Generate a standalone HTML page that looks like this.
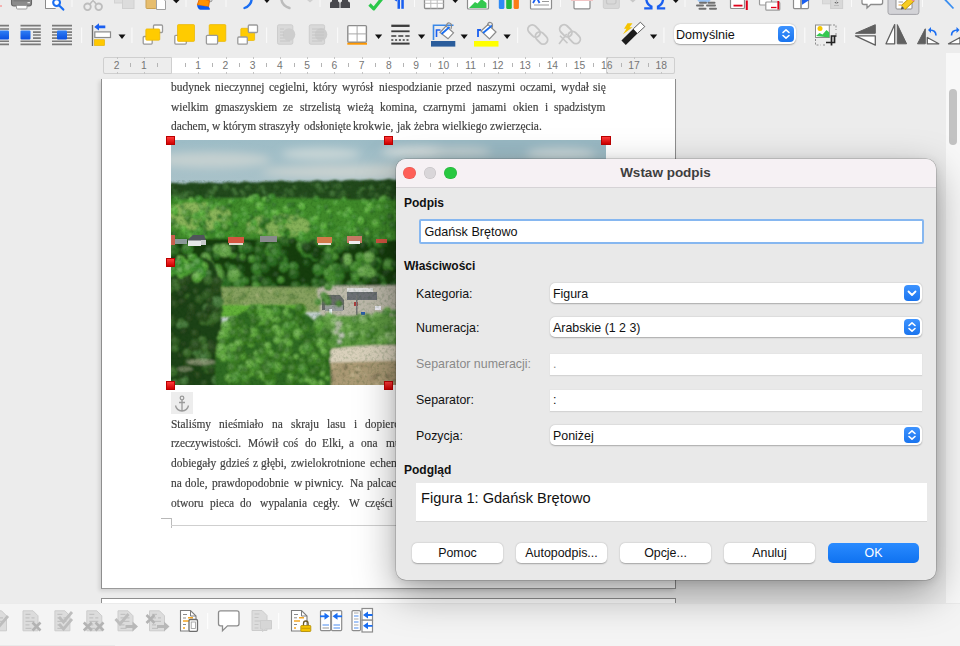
<!DOCTYPE html>
<html><head><meta charset="utf-8">
<style>
*{box-sizing:border-box}
html,body{margin:0;padding:0}
body{width:960px;height:646px;overflow:hidden;position:relative;background:#ececec;font-family:"Liberation Sans",sans-serif;color:#000}
.a{position:absolute}
.w{position:absolute;font-family:"Liberation Serif",serif;font-size:13px;color:#3b3b3b;white-space:pre;line-height:14px;transform:scaleX(0.88);transform-origin:0 0;-webkit-text-stroke:0.2px #4a4a4a}
.rn{position:absolute;top:58.8px;font-size:10.3px;color:#757575;line-height:14px;transform:translateX(-50%)}
.rt{position:absolute;top:63px;width:1px;height:4px;background:#b4b4b4}
.rb{position:absolute;width:1px;height:2px;background:#c4c4c4}
.sep{position:absolute;width:1px;background:#fafafa}
.lbl{position:absolute;font-size:12.4px;line-height:15px;color:#111;white-space:pre}
.fld{position:absolute;background:#fff;left:550px;width:372px}
.combo{border-radius:5px;height:20px;box-shadow:0 0.5px 1.5px rgba(0,0,0,0.28)}
.txt{height:22px;border-bottom:1px solid #d4d4d4;box-shadow:0 0 0 0.5px #e2e2e2}
.fv{position:absolute;left:3px;top:3.8px;font-size:12.4px;line-height:15px;color:#111;white-space:pre}
.bb{position:absolute;right:2px;top:2px;width:16px;height:16px;border-radius:4px;background:linear-gradient(#3d93ff,#1a74ee)}
.btn{position:absolute;top:543px;width:91px;height:20px;background:#fff;border-radius:5px;box-shadow:0 0.5px 1.5px rgba(0,0,0,0.3);font-size:12.4px;line-height:20px;text-align:center;color:#111}
</style></head>
<body>
<!-- toolbar icons row 1 -->
<svg class="a" style="left:0;top:0" width="960" height="52" viewBox="0 0 960 52">
<defs>
<linearGradient id="bluebox" x1="0" y1="0" x2="0" y2="1"><stop offset="0" stop-color="#2f7ff5"/><stop offset="1" stop-color="#0a4fe0"/></linearGradient>
</defs>
<!-- ===== ROW 1 (clipped at top) ===== -->
<circle cx="1" cy="6" r="0.8" fill="#ff6a6a"/>
<!-- printer -->
<path d="M11.5 -3h20v6.5q0 2.5-2.5 2.5h-15q-2.5 0-2.5-2.5z" fill="#8c8c8c" stroke="#666" stroke-width="1.1"/>
<rect x="13.5" y="-3" width="16" height="4.5" fill="#7c7c7c"/>
<rect x="27.5" y="2" width="2.5" height="1.3" fill="#e8e8e8"/>
<rect x="16.5" y="5.5" width="10.5" height="3.5" rx="1" fill="#fff" stroke="#9a9a9a" stroke-width="1"/>
<!-- print preview -->
<path d="M45.5 -2v10.5h10" fill="#fff" stroke="#8a8a8a" stroke-width="1"/>
<rect x="45.5" y="-2" width="10" height="10.5" fill="#fff"/>
<path d="M45.5 -2v10.5h10" fill="none" stroke="#8a8a8a" stroke-width="1"/>
<circle cx="56.6" cy="2.6" r="3.4" fill="#fff" stroke="#1a6ef2" stroke-width="2.1"/>
<path d="M59.2 5.4L63.3 9.6" stroke="#1a6ef2" stroke-width="2.2" stroke-linecap="round"/>
<rect x="71.5" y="0" width="1" height="7" fill="#fafafa"/>
<!-- scissors -->
<circle cx="87.5" cy="6.8" r="3.3" fill="none" stroke="#bdbdbd" stroke-width="1.8"/>
<circle cx="98.7" cy="6.8" r="3.3" fill="none" stroke="#bdbdbd" stroke-width="1.8"/>
<path d="M90 4L95 -2M96.2 4L91 -2" stroke="#bdbdbd" stroke-width="1.6"/>
<!-- copy disabled -->
<rect x="114.5" y="-4" width="9" height="7" fill="#dedede" stroke="#d2d2d2"/>
<rect x="122.5" y="-2" width="11.5" height="10.5" fill="#dcdcdc" stroke="#d0d0d0"/>
<!-- paste -->
<rect x="146" y="-3" width="10.5" height="11.5" rx="1" fill="#e6bd6e" stroke="#c9a052"/>
<path d="M156.5 -2h6l3 3v8.5h-9z" fill="#fff" stroke="#a0a0a0"/>
<path d="M173 0h6.5l-3.2 3.3z" fill="#111"/>
<rect x="185.5" y="0" width="1" height="7" fill="#fafafa"/>
<!-- clone formatting -->
<path d="M205 -3l7 0.5q1 2-0.5 4l-3 0.5z" fill="#d0d0d0" stroke="#8a8a8a" stroke-width="0.8"/>
<path d="M199.7 -2L209.5 0.5L208.6 6.8L197.3 5z" fill="#ff9200" stroke="#e06000" stroke-width="0.9" stroke-linejoin="round"/>
<path d="M197.2 4.9L208.6 6.8Q210.3 8.5 209.8 9.7L200.3 9.8Q197.3 8.6 197.2 4.9z" fill="#0a5af0"/>
<rect x="225.5" y="0" width="1" height="7" fill="#fafafa"/>
<!-- undo -->
<path d="M251.5 -3q1 8-7 11" fill="none" stroke="#1a6ef2" stroke-width="2.4" stroke-linecap="round"/>
<path d="M238 -1h11" stroke="#a8c8f8" stroke-width="1.5"/>
<path d="M264.3 0h5.2l-2.6 3z" fill="#111"/>
<!-- redo (disabled) -->
<path d="M281.5 -3q-1 8 8 11" fill="none" stroke="#bcbcbc" stroke-width="2.4" stroke-linecap="round"/>
<path d="M307 0h6l-3 2.6z" fill="#d0d0d0"/>
<rect x="319.5" y="0" width="1" height="7" fill="#fafafa"/>
<!-- binoculars -->
<path d="M330 3.5q0-2 2-2v-4h6v4q1.5 0 1.5 2v4.5h-9.5z" fill="#49494e"/>
<path d="M340.5 3.5q0-2 1.5-2v-4h6v4q2 0 2 2v4.5h-9.5z" fill="#49494e"/>
<!-- check -->
<path d="M369.5 4.5l4.3 4.3l8-10" fill="none" stroke="#2bc84a" stroke-width="3.3" stroke-linejoin="round"/>
<!-- pilcrow -->
<rect x="397.5" y="-2" width="2.5" height="10.8" fill="#1a5ff0"/>
<rect x="401.3" y="-2" width="2.5" height="10.8" fill="#1a5ff0"/>
<path d="M397 0.5q-2.5-0.5-2-3" fill="none" stroke="#1a5ff0" stroke-width="1.8"/>
<rect x="414" y="0" width="1" height="7" fill="#fafafa"/>
<!-- table -->
<rect x="424.5" y="-3" width="19" height="11.5" rx="1" fill="#fff" stroke="#8c8c8c" stroke-width="1.3"/>
<path d="M424.5 3.3h19M430.8 -3v11.5M437.2 -3v11.5M424.5 0h19" stroke="#bdbdbd" stroke-width="1"/>
<path d="M452.5 0h5.5l-2.7 3z" fill="#111"/>
<!-- image -->
<rect x="467.5" y="-3" width="21" height="12" rx="1" fill="#fff" stroke="#8c8c8c" stroke-width="1.2"/>
<path d="M469 8l6-6l2.5 1.5l4-4.5l5 4v5z" fill="#34c84f"/>
<!-- chart -->
<rect x="498.8" y="-3" width="5.6" height="12" rx="1.5" fill="#2f8af5"/>
<rect x="506.2" y="-3" width="5.6" height="12" rx="1.5" fill="#23b93c"/>
<rect x="513.6" y="-3" width="5.3" height="12" rx="1.5" fill="#fb7d16"/>
<!-- text box -->
<rect x="530.5" y="-3" width="21" height="12" rx="1" fill="#fff" stroke="#8c8c8c" stroke-width="1.2"/>
<path d="M533 3l3.5-6M539.5 3l-3-6" stroke="#1a5ff0" stroke-width="1.8"/>
<path d="M542 1.5h7M534 5h15" stroke="#9a9a9a" stroke-width="1"/>
<rect x="560" y="0" width="1" height="7" fill="#fafafa"/>
<!-- page break -->
<rect x="574" y="-3" width="16" height="11.8" rx="1" fill="#fff" stroke="#8c8c8c" stroke-width="1.2"/>
<path d="M571 0.4h22" stroke="#f2c4c4" stroke-width="1.2"/>
<!-- field disabled -->
<rect x="603.3" y="-3" width="16" height="11.5" rx="1.5" fill="#d8d8d8" stroke="#cfcfcf"/>
<rect x="606.5" y="-3" width="9.5" height="7" rx="2" fill="none" stroke="#c6c6c6" stroke-width="1.2"/>
<path d="M630 0h5.6l-2.8 2.6z" fill="#c8c8c8"/>
<!-- omega -->
<path d="M644.2 8.4h7.2v-1.8q-5.2-2.4-5.2-9M665.2 8.4h-7.2v-1.8q5.2-2.4 5.2-9" fill="none" stroke="#1a5ff0" stroke-width="2.3"/>
<path d="M673 0h5.5l-2.7 3z" fill="#111"/>
<rect x="684.5" y="0" width="1" height="7" fill="#fafafa"/>
<!-- fields/navigator -->
<ellipse cx="704" cy="0" rx="6.5" ry="3" fill="#9cc4f4"/>
<path d="M700 2.8h6M708.5 2.8h6M697 5.5h6M707 5.5h8M699.5 8.7h6M710 8.7h6" stroke="#6f6f6f" stroke-width="2" stroke-linecap="round"/>
<!-- footnote -->
<rect x="730.5" y="-3" width="14" height="11.5" rx="1" fill="#fff" stroke="#8c8c8c" stroke-width="1.2"/>
<path d="M733.5 5.6h9" stroke="#e0001a" stroke-width="1.8"/>
<path d="M746.8 0.5v9.5" stroke="#e0001a" stroke-width="2"/>
<!-- endnote -->
<rect x="759.5" y="-3" width="12" height="8" rx="1" fill="#fff" stroke="#9a9a9a" stroke-width="1.2"/>
<rect x="765.8" y="2" width="14" height="8.2" rx="1" fill="#fff" stroke="#9a9a9a" stroke-width="1.2"/>
<path d="M771 7.5h5.5" stroke="#e0001a" stroke-width="1.3"/>
<path d="M778.3 1v8.5" stroke="#e0001a" stroke-width="1.8"/>
<!-- bookmark -->
<rect x="793.5" y="-3" width="15" height="11.6" rx="1" fill="#fff" stroke="#8c8c8c" stroke-width="1.2"/>
<path d="M801 -3v11.6" stroke="#8c8c8c" stroke-width="1.6"/>
<path d="M802 -2h10.5l-10.5 6.8z" fill="#1a5ff0"/>
<!-- cross reference disabled -->
<rect x="822.5" y="-3" width="10" height="6.8" fill="#dcdcdc" stroke="#d2d2d2"/>
<rect x="830.6" y="-1" width="12" height="9.5" fill="#d8d8d8" stroke="#cecece"/>
<path d="M836.5 0v3.5M834.5 2l2 2l2-2M834 5.5h5" stroke="#bcbcbc" stroke-width="1"/>
<rect x="851" y="0" width="1" height="7" fill="#fafafa"/>
<!-- comment -->
<path d="M862 -3v5.5q0 2 2 2h3v3.5l3.8-3.5h9.8q2 0 2-2v-5.5" fill="#fff" stroke="#8c8c8c" stroke-width="1.3"/>
<!-- track changes pressed -->
<path d="M888 -2v14.2q0 2.2 2.2 2.2h26.5q2.2 0 2.2-2.2v-14.2" fill="#d3d3d7" stroke="#a4a4a9" stroke-width="1"/>
<rect x="896" y="-3" width="16" height="12" rx="1" fill="#fff" stroke="#8c8c8c" stroke-width="1"/>
<path d="M898.5 2h4.5" stroke="#9a9a9a" stroke-width="1"/>
<path d="M898.5 5h3" stroke="#f0a030" stroke-width="1"/>
<path d="M903.2 7.6L912.6 -1.2" stroke="#b89000" stroke-width="6.2"/>
<path d="M903.2 7.6L912.6 -1.2" stroke="#f7cc22" stroke-width="4.8"/>
<path d="M911.5 -0.2L914.5 -3" stroke="#f07aa0" stroke-width="4.8"/>
<path d="M900.8 9.6l1-3.6l2.6 2.6z" fill="#555"/>
<rect x="922" y="0" width="1" height="7" fill="#fafafa"/>
<!-- line -->
<path d="M944 -1.5L953.5 8.5" stroke="#3a8ef0" stroke-width="1.8"/>

<!-- ===== ROW 2 ===== -->
<g stroke="#7a7a7a" stroke-width="1.6">
<path d="M0 25.6h9M0 29h9M0 41.3h9M0 44.4h9"/>
<path d="M20.5 25.6h20.3M20.5 29h20.3M33 32.1h7.8M33 35h7.8M33 38.1h7.8M20.5 41.3h20.3M20.5 44.4h20.3"/>
<path d="M52 25.6h20M52 29h20M52 32.1h20M52 35h20M52 38.1h20M52 41.3h20M52 44.4h20"/>
</g>
<rect x="-2" y="30.6" width="11" height="8.8" rx="1" fill="url(#bluebox)"/>
<rect x="20.5" y="30.6" width="10" height="8.8" rx="1" fill="url(#bluebox)"/>
<rect x="57" y="30.6" width="10" height="8.8" rx="1" fill="url(#bluebox)"/>
<rect x="81" y="27.5" width="1.2" height="15.5" fill="#f9f9f9"/>
<!-- align -->
<path d="M92.5 25v21" stroke="#6a6a6a" stroke-width="1.4"/>
<path d="M94.2 26.9l4.8-3.6v2.3h6.3v2.6h-6.3v2.3z" fill="#1a5ff0"/>
<rect x="94.8" y="31.9" width="15.7" height="5.6" fill="#fff" stroke="#8c8c8c" stroke-width="1.2"/>
<rect x="94.3" y="39.7" width="10.3" height="5.9" fill="#ffc800" stroke="#e2b000" stroke-width="0.6"/>
<path d="M118.5 34.4h7l-3.5 4.6z" fill="#111"/>
<rect x="131.3" y="27.5" width="1.2" height="15.5" fill="#f9f9f9"/>
<!-- bring to front -->
<rect x="153.5" y="25" width="9" height="7.5" rx="1" fill="#fff" stroke="#9a9a9a" stroke-width="1.3"/>
<rect x="143.2" y="36.5" width="9" height="7.6" rx="1" fill="#fff" stroke="#9a9a9a" stroke-width="1.3"/>
<rect x="145.8" y="28.9" width="14" height="11.3" rx="1" fill="#ffcb00" stroke="#e8b400" stroke-width="0.7"/>
<!-- forward one -->
<rect x="174.8" y="35.3" width="11.5" height="8.8" rx="1" fill="#fff" stroke="#9a9a9a" stroke-width="1.3"/>
<rect x="177.5" y="24.6" width="17" height="16.8" rx="1" fill="#ffcb00" stroke="#e8b400" stroke-width="0.7"/>
<!-- backward one -->
<rect x="209.2" y="24.6" width="16.6" height="16.8" rx="1" fill="#ffcb00" stroke="#e8b400" stroke-width="0.7"/>
<rect x="206.4" y="35.3" width="11.2" height="8.8" rx="1" fill="#fff" stroke="#9a9a9a" stroke-width="1.3"/>
<!-- send to back -->
<rect x="240.8" y="28.3" width="13.8" height="12.2" rx="1" fill="#ffcb00" stroke="#e8b400" stroke-width="0.7"/>
<rect x="248.3" y="25" width="9.2" height="7.5" rx="1" fill="#fff" stroke="#9a9a9a" stroke-width="1.3"/>
<rect x="237.8" y="37" width="9.5" height="7.2" rx="1" fill="#fff" stroke="#9a9a9a" stroke-width="1.3"/>
<rect x="266" y="27.5" width="1.2" height="15.5" fill="#f9f9f9"/>
<!-- disabled to foreground/background -->
<rect x="277.5" y="24.8" width="15.3" height="19.4" rx="1.5" fill="#d9d9d9" stroke="#cdcdcd" stroke-width="1"/>
<circle cx="289" cy="34.5" r="6.3" fill="#cdcdcd"/>
<path d="M280 29h4M280 32h4M280 35h4M280 38h4M280 41h10" stroke="#c4c4c4" stroke-width="0.9"/>
<rect x="309.3" y="24.8" width="15.3" height="19.4" rx="1.5" fill="#d9d9d9" stroke="#cdcdcd" stroke-width="1"/>
<circle cx="321" cy="34.5" r="6.3" fill="#cdcdcd"/>
<path d="M312 29h12M312 32h12M312 35h12M312 38h12M312 41h10" stroke="#c4c4c4" stroke-width="0.9"/>
<rect x="337" y="27.5" width="1.2" height="15.5" fill="#f9f9f9"/>
<!-- borders -->
<rect x="347.8" y="25.6" width="18.6" height="16.6" rx="1" fill="#fff" stroke="#8c8c8c" stroke-width="1.4"/>
<path d="M357.1 25.6v16.6M347.8 33.9h18.6" stroke="#a8a8a8" stroke-width="1"/>
<rect x="347.3" y="42.8" width="19.7" height="1.9" fill="#ff9800"/>
<path d="M375 34.4h7.2l-3.6 4.6z" fill="#111"/>
<!-- border style -->
<path d="M391.3 25.8h18.3" stroke="#3c3c3c" stroke-width="2.3"/>
<path d="M391.3 31.3h18.3" stroke="#3c3c3c" stroke-width="1.8"/>
<path d="M391.3 36h18.3" stroke="#3c3c3c" stroke-width="1.5" stroke-dasharray="5 2"/>
<path d="M391.3 40h18.3" stroke="#3c3c3c" stroke-width="1.3" stroke-dasharray="2 1.8"/>
<path d="M391.3 43.6h18.3" stroke="#3c3c3c" stroke-width="2"/>
<path d="M418 34.4h7.2l-3.6 4.6z" fill="#111"/>
<!-- border color -->
<path d="M433.5 40v-14.8h20" fill="none" stroke="#3a88e8" stroke-width="1.6"/>
<path d="M436.5 37v-7h4" fill="none" stroke="#1a5ff0" stroke-width="1.6"/>
<path d="M440 32.5l6-6.5l7.5 6.8l-5.5 6z" fill="#fff" stroke="#8a8a8a" stroke-width="1.2"/>
<path d="M441.5 34l8-7" stroke="#1a6ef2" stroke-width="1.8"/>
<path d="M446.5 26.5q0-4 3-3.5q3 0.5 1.5 6" fill="none" stroke="#8a8a8a" stroke-width="1.2"/>
<rect x="431" y="41" width="24.3" height="5.6" fill="#2b5d9c"/>
<path d="M460.6 34.4h7.2l-3.6 4.6z" fill="#111"/>
<!-- area fill -->
<path d="M478 37v-7h3" fill="none" stroke="#1a5ff0" stroke-width="1.8"/>
<path d="M481 31l7-6.5l8 7.5l-6.5 7z" fill="#fff" stroke="#8a8a8a" stroke-width="1.2"/>
<path d="M483 33l9-7.5" stroke="#1a6ef2" stroke-width="1.8"/>
<path d="M487.5 26q0-4 3-3.5q3 0.5 1.5 6" fill="none" stroke="#8a8a8a" stroke-width="1.2"/>
<rect x="474" y="41" width="24.5" height="5.6" fill="#ffff00"/>
<path d="M503.5 34.4h7.2l-3.6 4.6z" fill="#111"/>
<rect x="517" y="27.5" width="1.2" height="15.5" fill="#f9f9f9"/>
<!-- link disabled -->
<g fill="none" stroke="#c6c6c6" stroke-width="1.9">
<rect x="529.6" y="24.2" width="8.8" height="13.6" rx="4.4" transform="rotate(-45 534 31)"/>
<rect x="537.1" y="31.2" width="8.8" height="13.6" rx="4.4" transform="rotate(-45 541.5 38)"/>
<rect x="561.4" y="24" width="8.8" height="13.6" rx="4.4" transform="rotate(-45 565.8 30.8)"/>
<rect x="569.8" y="30.7" width="8.8" height="13.6" rx="4.4" transform="rotate(-45 574.2 37.5)"/>
<path d="M559 44l7.7-10M560 35.8l7.5 7.5" stroke-width="1.6"/>
</g>
<!-- magic wand -->
<path d="M623.6 42.8L635.5 31" stroke="#1c1c1c" stroke-width="6.2"/>
<path d="M635.5 31L642.6 24.4" stroke="#fff" stroke-width="6.2"/>
<path d="M633.3 28.8L640.4 22.2L644.8 26.6L637.7 33.2" fill="none" stroke="#3a3a3a" stroke-width="0.8"/>
<path d="M627.5 23.3h5l-3 4h3l-9.5 7l3.5-5.5h-2.5z" fill="#f5c400"/>
<path d="M650 34.4h7.2l-3.6 4.6z" fill="#111"/>
<rect x="663.3" y="27.5" width="1.2" height="15.5" fill="#f9f9f9"/>
<rect x="804.2" y="27.5" width="1.2" height="15.5" fill="#f9f9f9"/>
<!-- crop image -->
<rect x="815.5" y="25" width="13.8" height="12.5" fill="#fff" stroke="#8c8c8c" stroke-width="1"/>
<circle cx="820" cy="28.5" r="2.5" fill="#f5c800"/>
<path d="M816 36l3.5-3l3 1.5l4-4.5l2.8 2.5v5z" fill="#34c84f"/>
<path d="M829.5 25h6.5v5M836 33v2M815.5 39v6h5M823 45h2" fill="none" stroke="#8c8c8c" stroke-width="1" stroke-dasharray="2 1.5"/>
<path d="M826 42.5h8.5v-6.5M831.5 45.5v-9.5h5" fill="none" stroke="#222" stroke-width="1.7"/>
<rect x="844" y="27.5" width="1.2" height="15.5" fill="#f9f9f9"/>
<!-- flip vertical -->
<path d="M855.5 33.3l19.8-8.6v8.6z" fill="#606060" stroke="#606060" stroke-width="1" stroke-linejoin="round"/>
<path d="M855.5 35.8h19.8v9.4z" fill="#fff" stroke="#606060" stroke-width="1.3" stroke-linejoin="round"/>
<!-- flip horizontal -->
<path d="M886 43.8l8.7-19.2v19.2z" fill="#fff" stroke="#606060" stroke-width="1.3" stroke-linejoin="round"/>
<path d="M897.3 24.6v19.2h9.3z" fill="#606060" stroke="#606060" stroke-width="1" stroke-linejoin="round"/>
<!-- rotate left -->
<path d="M917.5 43.8l7.8-15v15z" fill="#606060" stroke="#606060" stroke-width="1" stroke-linejoin="round"/>
<path d="M927.3 37.5v6.3h11.5z" fill="#fff" stroke="#606060" stroke-width="1.3" stroke-linejoin="round"/>
<path d="M936 35.5q0-5.5-6.5-5.5" fill="none" stroke="#1a6ef2" stroke-width="1.6"/>
<path d="M928 30l3-3v6z" fill="#1a6ef2"/>
<!-- rotate right partial -->
<path d="M951.5 35.5q0-5.5 6.5-5.5" fill="none" stroke="#1a6ef2" stroke-width="1.6"/>
<path d="M959.5 30l-3-3v6z" fill="#1a6ef2"/>
<path d="M948.5 43.8l11.5-6.3v6.3z" fill="#fff" stroke="#606060" stroke-width="1.3" stroke-linejoin="round"/>
</svg>
<!-- Domyslnie combo -->
<div class="a" style="left:674px;top:24px;width:122px;height:20px;background:#fff;border-radius:6px;box-shadow:0 0.5px 1.5px rgba(0,0,0,0.3)"></div>
<div class="a" style="left:676px;top:28px;font-size:12.6px;line-height:15px;color:#111">Domyślnie</div>
<div class="bb" style="left:778px;top:26.3px;right:auto"><svg width="16" height="16" viewBox="0 0 16 16"><path d="M5 6.5L8 3.8l3 2.7M5 9.5L8 12.2l3-2.7" fill="none" stroke="#fff" stroke-width="1.6" stroke-linecap="round" stroke-linejoin="round"/></svg></div>

<!-- toolbar row 2 -->


<!-- ruler -->
<div class="a" style="left:103px;top:57px;width:572px;height:17px;background:#fff;border-top:1px solid #ececec;border-bottom:1px solid #e4e4e4"></div>
<div class="a" style="left:103px;top:57px;width:69px;height:17px;background:#ededed;border:1px solid #cfcfcf;border-radius:2px 0 0 2px"></div>
<div class="a" style="left:606px;top:57px;width:69px;height:17px;background:#ededed;border:1px solid #cfcfcf;border-radius:0 2px 2px 0"></div>
<div class="rn" style="left:116.52px">2</div>
<div class="rb" style="left:116.5px;top:57px"></div><div class="rb" style="left:116.5px;top:72px"></div>
<div class="rn" style="left:143.76px">1</div>
<div class="rb" style="left:143.8px;top:57px"></div><div class="rb" style="left:143.8px;top:72px"></div>
<div class="rn" style="left:198.24px">1</div>
<div class="rb" style="left:198.2px;top:57px"></div><div class="rb" style="left:198.2px;top:72px"></div>
<div class="rn" style="left:225.48px">2</div>
<div class="rb" style="left:225.5px;top:57px"></div><div class="rb" style="left:225.5px;top:72px"></div>
<div class="rn" style="left:252.72px">3</div>
<div class="rb" style="left:252.7px;top:57px"></div><div class="rb" style="left:252.7px;top:72px"></div>
<div class="rn" style="left:279.96px">4</div>
<div class="rb" style="left:280.0px;top:57px"></div><div class="rb" style="left:280.0px;top:72px"></div>
<div class="rn" style="left:307.20px">5</div>
<div class="rb" style="left:307.2px;top:57px"></div><div class="rb" style="left:307.2px;top:72px"></div>
<div class="rn" style="left:334.44px">6</div>
<div class="rb" style="left:334.4px;top:57px"></div><div class="rb" style="left:334.4px;top:72px"></div>
<div class="rn" style="left:361.68px">7</div>
<div class="rb" style="left:361.7px;top:57px"></div><div class="rb" style="left:361.7px;top:72px"></div>
<div class="rn" style="left:388.92px">8</div>
<div class="rb" style="left:388.9px;top:57px"></div><div class="rb" style="left:388.9px;top:72px"></div>
<div class="rn" style="left:416.16px">9</div>
<div class="rb" style="left:416.2px;top:57px"></div><div class="rb" style="left:416.2px;top:72px"></div>
<div class="rn" style="left:443.40px">10</div>
<div class="rb" style="left:443.4px;top:57px"></div><div class="rb" style="left:443.4px;top:72px"></div>
<div class="rn" style="left:470.64px">11</div>
<div class="rb" style="left:470.6px;top:57px"></div><div class="rb" style="left:470.6px;top:72px"></div>
<div class="rn" style="left:497.88px">12</div>
<div class="rb" style="left:497.9px;top:57px"></div><div class="rb" style="left:497.9px;top:72px"></div>
<div class="rn" style="left:525.12px">13</div>
<div class="rb" style="left:525.1px;top:57px"></div><div class="rb" style="left:525.1px;top:72px"></div>
<div class="rn" style="left:552.36px">14</div>
<div class="rb" style="left:552.4px;top:57px"></div><div class="rb" style="left:552.4px;top:72px"></div>
<div class="rn" style="left:579.60px">15</div>
<div class="rb" style="left:579.6px;top:57px"></div><div class="rb" style="left:579.6px;top:72px"></div>
<div class="rn" style="left:606.84px">16</div>
<div class="rb" style="left:606.8px;top:57px"></div><div class="rb" style="left:606.8px;top:72px"></div>
<div class="rn" style="left:634.08px">17</div>
<div class="rb" style="left:634.1px;top:57px"></div><div class="rb" style="left:634.1px;top:72px"></div>
<div class="rn" style="left:661.32px">18</div>
<div class="rb" style="left:661.3px;top:57px"></div><div class="rb" style="left:661.3px;top:72px"></div>
<div class="rt" style="left:130.1px"></div>
<div class="rt" style="left:157.4px"></div>
<div class="rt" style="left:184.6px"></div>
<div class="rt" style="left:211.9px"></div>
<div class="rt" style="left:239.1px"></div>
<div class="rt" style="left:266.3px"></div>
<div class="rt" style="left:293.6px"></div>
<div class="rt" style="left:320.8px"></div>
<div class="rt" style="left:348.1px"></div>
<div class="rt" style="left:375.3px"></div>
<div class="rt" style="left:402.5px"></div>
<div class="rt" style="left:429.8px"></div>
<div class="rt" style="left:457.0px"></div>
<div class="rt" style="left:484.3px"></div>
<div class="rt" style="left:511.5px"></div>
<div class="rt" style="left:538.7px"></div>
<div class="rt" style="left:566.0px"></div>
<div class="rt" style="left:593.2px"></div>
<div class="rt" style="left:620.5px"></div>
<div class="rt" style="left:647.7px"></div>

<!-- page 1 -->
<div class="a" style="left:101px;top:79px;width:575px;height:510px;background:#fff;border-left:1px solid #8e8e8e;border-right:1px solid #8e8e8e;border-bottom:1px solid #9a9a9a;box-shadow:-2px 2px 4px rgba(0,0,0,0.12)"></div>
<!-- page 2 -->
<div class="a" style="left:101px;top:598px;width:575px;height:20px;background:#fff;border:1px solid #8e8e8e;border-bottom:none"></div>

<span class="w" style="left:171.00px;top:79.6px">budynek</span>
<span class="w" style="left:214.75px;top:79.6px">nieczynnej</span>
<span class="w" style="left:269.40px;top:79.6px">cegielni,</span>
<span class="w" style="left:313.25px;top:79.6px">który</span>
<span class="w" style="left:342.00px;top:79.6px">wyrósł</span>
<span class="w" style="left:378.70px;top:79.6px">niespodzianie</span>
<span class="w" style="left:446.25px;top:79.6px">przed</span>
<span class="w" style="left:476.75px;top:79.6px">naszymi</span>
<span class="w" style="left:519.50px;top:79.6px">oczami,</span>
<span class="w" style="left:560.50px;top:79.6px">wydał</span>
<span class="w" style="left:592.60px;top:79.6px">się</span>
<span class="w" style="left:171.00px;top:99.6px">wielkim</span>
<span class="w" style="left:214.75px;top:99.6px">gmaszyskiem</span>
<span class="w" style="left:283.10px;top:99.6px">ze</span>
<span class="w" style="left:299.50px;top:99.6px">strzelistą</span>
<span class="w" style="left:347.00px;top:99.6px">wieżą</span>
<span class="w" style="left:379.50px;top:99.6px">komina,</span>
<span class="w" style="left:423.40px;top:99.6px">czarnymi</span>
<span class="w" style="left:472.10px;top:99.6px">jamami</span>
<span class="w" style="left:513.25px;top:99.6px">okien</span>
<span class="w" style="left:545.10px;top:99.6px">i</span>
<span class="w" style="left:554.25px;top:99.6px">spadzistym</span>
<span class="w" style="left:171.00px;top:119.2px">dachem,</span>
<span class="w" style="left:211.90px;top:119.2px">w</span>
<span class="w" style="left:222.50px;top:119.2px">którym</span>
<span class="w" style="left:259.40px;top:119.2px">straszyły</span>
<span class="w" style="left:303.50px;top:119.2px">odsłonięte</span>
<span class="w" style="left:353.25px;top:119.2px">krokwie,</span>
<span class="w" style="left:396.75px;top:119.2px">jak</span>
<span class="w" style="left:414.00px;top:119.2px">żebra</span>
<span class="w" style="left:442.10px;top:119.2px">wielkiego</span>
<span class="w" style="left:489.60px;top:119.2px">zwierzęcia.</span>
<span class="w" style="left:171.20px;top:416.8px">Staliśmy</span>
<span class="w" style="left:218.70px;top:416.8px">nieśmiało</span>
<span class="w" style="left:271.90px;top:416.8px">na</span>
<span class="w" style="left:291.40px;top:416.8px">skraju</span>
<span class="w" style="left:327.30px;top:416.8px">lasu</span>
<span class="w" style="left:353.80px;top:416.8px">i</span>
<span class="w" style="left:365.30px;top:416.8px">dopiero</span>
<span class="w" style="left:171.20px;top:436.2px">rzeczywistości.</span>
<span class="w" style="left:247.50px;top:436.2px">Mówił</span>
<span class="w" style="left:283.20px;top:436.2px">coś</span>
<span class="w" style="left:304.50px;top:436.2px">do</span>
<span class="w" style="left:322.10px;top:436.2px">Elki,</span>
<span class="w" style="left:349.30px;top:436.2px">a</span>
<span class="w" style="left:360.50px;top:436.2px">ona</span>
<span class="w" style="left:385.70px;top:436.2px">mu</span>
<span class="w" style="left:171.20px;top:456.0px">dobiegały</span>
<span class="w" style="left:219.80px;top:456.0px">gdzieś</span>
<span class="w" style="left:252.50px;top:456.0px">z</span>
<span class="w" style="left:261.40px;top:456.0px">głębi,</span>
<span class="w" style="left:291.40px;top:456.0px">zwielokrotnione</span>
<span class="w" style="left:370.40px;top:456.0px">echem</span>
<span class="w" style="left:171.20px;top:475.8px">na</span>
<span class="w" style="left:185.30px;top:475.8px">dole,</span>
<span class="w" style="left:211.80px;top:475.8px">prawdopodobnie</span>
<span class="w" style="left:294.40px;top:475.8px">w</span>
<span class="w" style="left:304.70px;top:475.8px">piwnicy.</span>
<span class="w" style="left:350.00px;top:475.8px">Na</span>
<span class="w" style="left:367.10px;top:475.8px">palcach</span>
<span class="w" style="left:171.20px;top:495.6px">otworu</span>
<span class="w" style="left:209.50px;top:495.6px">pieca</span>
<span class="w" style="left:240.30px;top:495.6px">do</span>
<span class="w" style="left:259.90px;top:495.6px">wypalania</span>
<span class="w" style="left:313.40px;top:495.6px">cegły.</span>
<span class="w" style="left:349.30px;top:495.6px">W</span>
<span class="w" style="left:365.30px;top:495.6px">części</span>

<!-- photo -->
<svg class="a" style="left:171px;top:140px" width="435" height="245" viewBox="0 0 435 245">
<defs>
<linearGradient id="sky" x1="0" y1="0" x2="0" y2="1"><stop offset="0" stop-color="#9dbcc6"/><stop offset="0.45" stop-color="#bccbcd"/><stop offset="1" stop-color="#cbd4d2"/></linearGradient>
<filter id="bl" x="-20%" y="-50%" width="140%" height="200%"><feGaussianBlur stdDeviation="4"/></filter>
<filter id="bl1" x="-10%" y="-10%" width="120%" height="120%"><feGaussianBlur stdDeviation="0.95"/></filter>
<filter id="bl2" x="-10%" y="-10%" width="120%" height="120%"><feGaussianBlur stdDeviation="0.55"/></filter>
<filter id="nz" x="0" y="0" width="100%" height="100%"><feTurbulence type="fractalNoise" baseFrequency="0.35" numOctaves="2" seed="5"/><feColorMatrix type="matrix" values="0 0 0 0 0  0 0 0 0 0.03  0 0 0 0 0  0 0 0 -2.0 1.1"/></filter>
<clipPath id="pc"><rect width="435" height="245"/></clipPath>
</defs><g clip-path="url(#pc)">
<rect width="435" height="245" fill="url(#sky)"/>
<g filter="url(#bl)"><ellipse cx="340" cy="4" rx="150" ry="9" fill="#98b8c3"/><ellipse cx="250" cy="12" rx="40" ry="6" fill="#d2dcdc"/><ellipse cx="390" cy="14" rx="35" ry="6" fill="#c8d6d8"/><ellipse cx="150" cy="14" rx="40" ry="6" fill="#c8d5d6"/><ellipse cx="290" cy="12" rx="30" ry="5" fill="#c2d0d2"/><ellipse cx="40" cy="20" rx="60" ry="8" fill="#c4d0d0"/><ellipse cx="200" cy="32" rx="110" ry="7" fill="#c9d2d0"/><ellipse cx="360" cy="28" rx="50" ry="6" fill="#a9bcc0"/></g>
<g filter="url(#bl1)">
<path d="M-10.0 44.0 L-4.0 43.9 L2.0 42.8 L8.0 43.4 L14.0 44.0 L20.0 42.3 L26.0 42.8 L32.0 43.3 L38.0 42.2 L44.0 43.1 L50.0 43.4 L56.0 42.0 L62.0 42.4 L68.0 43.0 L74.0 41.3 L80.0 42.5 L86.0 42.4 L92.0 41.7 L98.0 41.5 L104.0 41.6 L110.0 40.6 L116.0 41.6 L122.0 41.9 L128.0 40.8 L134.0 41.4 L140.0 41.5 L146.0 39.9 L152.0 41.3 L158.0 41.0 L164.0 39.7 L170.0 41.2 L176.0 39.9 L182.0 39.7 L188.0 40.5 L194.0 40.1 L200.0 39.4 L206.0 40.6 L212.0 40.1 L218.0 38.7 L224.0 40.3 L230.0 39.0 L236.0 39.0 L242.0 39.3 L248.0 38.5 L254.0 38.2 L260.0 39.3 L266.0 38.5 L272.0 37.9 L278.0 39.6 L284.0 38.2 L290.0 37.5 L296.0 39.2 L302.0 37.4 L308.0 37.1 L314.0 38.8 L320.0 37.6 L326.0 37.2 L332.0 38.5 L338.0 36.6 L344.0 37.0 L350.0 38.6 L356.0 37.1 L362.0 36.4 L368.0 37.4 L374.0 36.4 L380.0 36.3 L386.0 37.5 L392.0 35.8 L398.0 36.3 L404.0 37.1 L410.0 35.6 L416.0 35.6 L422.0 37.1 L428.0 35.7 L434.0 35.6 L440.0 36.0 L445 110 L-10 110Z" fill="#24481e"/>
<circle cx="149.2" cy="51.9" r="2.1" fill="#234a1c"/>
<circle cx="148.7" cy="51.3" r="1.1" fill="#2e5327"/>
<circle cx="70.1" cy="58.5" r="1.9" fill="#1f4418"/>
<circle cx="69.6" cy="57.9" r="1.0" fill="#2a4d23"/>
<circle cx="161.8" cy="53.7" r="2.7" fill="#2c5624"/>
<circle cx="161.1" cy="52.9" r="1.5" fill="#365e2e"/>
<circle cx="176.1" cy="59.8" r="3.1" fill="#3d6e33"/>
<circle cx="175.3" cy="58.8" r="1.7" fill="#46753d"/>
<circle cx="1.3" cy="46.9" r="2.4" fill="#2c5624"/>
<circle cx="0.7" cy="46.2" r="1.3" fill="#365e2e"/>
<circle cx="411.6" cy="44.9" r="2.5" fill="#1f4418"/>
<circle cx="411.0" cy="44.2" r="1.4" fill="#2a4d23"/>
<circle cx="353.4" cy="55.5" r="2.4" fill="#35632c"/>
<circle cx="352.8" cy="54.8" r="1.3" fill="#3f6a36"/>
<circle cx="124.0" cy="48.4" r="1.9" fill="#234a1c"/>
<circle cx="123.5" cy="47.8" r="1.0" fill="#2e5327"/>
<circle cx="382.3" cy="52.9" r="1.8" fill="#2c5624"/>
<circle cx="381.9" cy="52.4" r="1.0" fill="#365e2e"/>
<circle cx="326.9" cy="49.6" r="2.0" fill="#3d6e33"/>
<circle cx="326.4" cy="49.0" r="1.1" fill="#46753d"/>
<circle cx="400.6" cy="49.6" r="3.1" fill="#35632c"/>
<circle cx="399.8" cy="48.6" r="1.7" fill="#3f6a36"/>
<circle cx="348.9" cy="57.6" r="2.6" fill="#1f4418"/>
<circle cx="348.2" cy="56.9" r="1.4" fill="#2a4d23"/>
<circle cx="210.6" cy="58.1" r="2.4" fill="#2c5624"/>
<circle cx="210.0" cy="57.3" r="1.3" fill="#365e2e"/>
<circle cx="232.8" cy="45.5" r="2.8" fill="#234a1c"/>
<circle cx="232.1" cy="44.7" r="1.6" fill="#2e5327"/>
<circle cx="313.5" cy="45.3" r="2.1" fill="#2c5624"/>
<circle cx="313.0" cy="44.7" r="1.2" fill="#365e2e"/>
<circle cx="374.0" cy="51.7" r="2.0" fill="#1f4418"/>
<circle cx="373.5" cy="51.1" r="1.1" fill="#2a4d23"/>
<circle cx="329.5" cy="56.2" r="1.8" fill="#2c5624"/>
<circle cx="329.0" cy="55.7" r="1.0" fill="#365e2e"/>
<circle cx="6.3" cy="48.9" r="1.8" fill="#234a1c"/>
<circle cx="5.8" cy="48.4" r="1.0" fill="#2e5327"/>
<circle cx="286.6" cy="42.5" r="2.5" fill="#35632c"/>
<circle cx="286.0" cy="41.8" r="1.4" fill="#3f6a36"/>
<circle cx="171.3" cy="57.8" r="2.6" fill="#2c5624"/>
<circle cx="170.7" cy="57.0" r="1.4" fill="#365e2e"/>
<circle cx="76.9" cy="47.6" r="2.7" fill="#3d6e33"/>
<circle cx="76.2" cy="46.7" r="1.5" fill="#46753d"/>
<circle cx="331.9" cy="52.1" r="2.4" fill="#234a1c"/>
<circle cx="331.3" cy="51.4" r="1.3" fill="#2e5327"/>
<circle cx="334.9" cy="43.5" r="2.7" fill="#35632c"/>
<circle cx="334.3" cy="42.7" r="1.5" fill="#3f6a36"/>
<circle cx="424.0" cy="52.1" r="2.8" fill="#2c5624"/>
<circle cx="423.3" cy="51.3" r="1.5" fill="#365e2e"/>
<circle cx="168.0" cy="46.2" r="3.0" fill="#35632c"/>
<circle cx="167.3" cy="45.3" r="1.7" fill="#3f6a36"/>
<circle cx="358.8" cy="56.1" r="2.4" fill="#3d6e33"/>
<circle cx="358.2" cy="55.3" r="1.3" fill="#46753d"/>
<circle cx="38.9" cy="52.0" r="2.4" fill="#35632c"/>
<circle cx="38.3" cy="51.3" r="1.3" fill="#3f6a36"/>
<circle cx="425.4" cy="46.2" r="2.7" fill="#3d6e33"/>
<circle cx="424.7" cy="45.4" r="1.5" fill="#46753d"/>
<circle cx="332.2" cy="43.8" r="2.6" fill="#35632c"/>
<circle cx="331.6" cy="43.0" r="1.4" fill="#3f6a36"/>
<circle cx="429.7" cy="47.1" r="2.1" fill="#1f4418"/>
<circle cx="429.2" cy="46.5" r="1.2" fill="#2a4d23"/>
<circle cx="27.6" cy="56.3" r="2.8" fill="#1f4418"/>
<circle cx="26.9" cy="55.4" r="1.5" fill="#2a4d23"/>
<circle cx="219.7" cy="58.9" r="2.7" fill="#1f4418"/>
<circle cx="219.1" cy="58.1" r="1.5" fill="#2a4d23"/>
<circle cx="204.5" cy="50.3" r="3.0" fill="#234a1c"/>
<circle cx="203.8" cy="49.4" r="1.7" fill="#2e5327"/>
<circle cx="188.1" cy="44.9" r="2.7" fill="#1f4418"/>
<circle cx="187.4" cy="44.1" r="1.5" fill="#2a4d23"/>
<circle cx="317.1" cy="49.1" r="2.0" fill="#1f4418"/>
<circle cx="316.6" cy="48.5" r="1.1" fill="#2a4d23"/>
<circle cx="140.7" cy="44.6" r="3.1" fill="#234a1c"/>
<circle cx="140.0" cy="43.6" r="1.7" fill="#2e5327"/>
<circle cx="161.0" cy="52.1" r="1.9" fill="#1f4418"/>
<circle cx="160.5" cy="51.5" r="1.1" fill="#2a4d23"/>
<circle cx="273.9" cy="55.2" r="2.7" fill="#3d6e33"/>
<circle cx="273.3" cy="54.4" r="1.5" fill="#46753d"/>
<circle cx="306.1" cy="53.7" r="2.0" fill="#1f4418"/>
<circle cx="305.6" cy="53.1" r="1.1" fill="#2a4d23"/>
<circle cx="166.7" cy="52.3" r="2.9" fill="#234a1c"/>
<circle cx="166.0" cy="51.4" r="1.6" fill="#2e5327"/>
<circle cx="384.7" cy="54.3" r="1.7" fill="#2c5624"/>
<circle cx="384.2" cy="53.8" r="1.0" fill="#365e2e"/>
<circle cx="30.4" cy="46.1" r="3.1" fill="#1f4418"/>
<circle cx="29.6" cy="45.1" r="1.7" fill="#2a4d23"/>
<circle cx="432.4" cy="59.8" r="1.9" fill="#1f4418"/>
<circle cx="432.0" cy="59.3" r="1.0" fill="#2a4d23"/>
<circle cx="86.6" cy="46.7" r="2.6" fill="#2c5624"/>
<circle cx="85.9" cy="45.9" r="1.4" fill="#365e2e"/>
<circle cx="111.1" cy="59.0" r="2.1" fill="#35632c"/>
<circle cx="110.6" cy="58.4" r="1.2" fill="#3f6a36"/>
<circle cx="415.5" cy="59.3" r="3.0" fill="#3d6e33"/>
<circle cx="414.7" cy="58.4" r="1.7" fill="#46753d"/>
<circle cx="83.9" cy="52.0" r="2.0" fill="#1f4418"/>
<circle cx="83.4" cy="51.3" r="1.1" fill="#2a4d23"/>
<circle cx="64.9" cy="47.9" r="2.2" fill="#1f4418"/>
<circle cx="64.4" cy="47.2" r="1.2" fill="#2a4d23"/>
<circle cx="269.6" cy="45.6" r="1.9" fill="#1f4418"/>
<circle cx="269.1" cy="45.0" r="1.0" fill="#2a4d23"/>
<circle cx="271.7" cy="42.0" r="3.2" fill="#2c5624"/>
<circle cx="270.9" cy="41.0" r="1.7" fill="#365e2e"/>
<circle cx="10.3" cy="56.2" r="3.1" fill="#35632c"/>
<circle cx="9.5" cy="55.3" r="1.7" fill="#3f6a36"/>
<circle cx="3.4" cy="50.0" r="1.7" fill="#3d6e33"/>
<circle cx="3.0" cy="49.5" r="0.9" fill="#46753d"/>
<circle cx="191.4" cy="49.0" r="3.2" fill="#3d6e33"/>
<circle cx="190.6" cy="48.0" r="1.8" fill="#46753d"/>
<circle cx="60.8" cy="59.5" r="1.9" fill="#35632c"/>
<circle cx="60.3" cy="58.9" r="1.0" fill="#3f6a36"/>
<circle cx="393.0" cy="47.4" r="1.8" fill="#1f4418"/>
<circle cx="392.6" cy="46.9" r="1.0" fill="#2a4d23"/>
<circle cx="78.5" cy="48.1" r="2.5" fill="#2c5624"/>
<circle cx="77.8" cy="47.3" r="1.4" fill="#365e2e"/>
<circle cx="250.8" cy="56.5" r="2.5" fill="#1f4418"/>
<circle cx="250.2" cy="55.7" r="1.4" fill="#2a4d23"/>
<circle cx="388.2" cy="40.4" r="2.5" fill="#234a1c"/>
<circle cx="387.5" cy="39.6" r="1.4" fill="#2e5327"/>
<circle cx="188.9" cy="56.7" r="3.2" fill="#2c5624"/>
<circle cx="188.1" cy="55.7" r="1.8" fill="#365e2e"/>
<circle cx="62.7" cy="49.9" r="2.4" fill="#3d6e33"/>
<circle cx="62.1" cy="49.2" r="1.3" fill="#46753d"/>
<circle cx="271.0" cy="49.4" r="2.9" fill="#35632c"/>
<circle cx="270.3" cy="48.6" r="1.6" fill="#3f6a36"/>
<circle cx="123.1" cy="52.8" r="1.6" fill="#234a1c"/>
<circle cx="122.7" cy="52.3" r="0.9" fill="#2e5327"/>
<circle cx="292.3" cy="43.7" r="1.8" fill="#2c5624"/>
<circle cx="291.9" cy="43.2" r="1.0" fill="#365e2e"/>
<circle cx="155.3" cy="47.0" r="1.9" fill="#3d6e33"/>
<circle cx="154.8" cy="46.5" r="1.0" fill="#46753d"/>
<circle cx="215.3" cy="53.6" r="2.6" fill="#2c5624"/>
<circle cx="214.6" cy="52.8" r="1.5" fill="#365e2e"/>
<circle cx="154.6" cy="45.0" r="1.9" fill="#2c5624"/>
<circle cx="154.1" cy="44.4" r="1.1" fill="#365e2e"/>
<circle cx="318.9" cy="50.5" r="1.7" fill="#2c5624"/>
<circle cx="318.4" cy="50.0" r="0.9" fill="#365e2e"/>
<circle cx="151.8" cy="50.7" r="2.6" fill="#2c5624"/>
<circle cx="151.1" cy="49.9" r="1.4" fill="#365e2e"/>
<circle cx="4.4" cy="47.4" r="2.4" fill="#1f4418"/>
<circle cx="3.8" cy="46.7" r="1.3" fill="#2a4d23"/>
<circle cx="354.0" cy="58.1" r="2.7" fill="#2c5624"/>
<circle cx="353.3" cy="57.3" r="1.5" fill="#365e2e"/>
<circle cx="298.0" cy="53.0" r="2.6" fill="#3d6e33"/>
<circle cx="297.4" cy="52.2" r="1.4" fill="#46753d"/>
<circle cx="399.3" cy="59.4" r="2.2" fill="#1f4418"/>
<circle cx="398.7" cy="58.7" r="1.2" fill="#2a4d23"/>
<circle cx="411.9" cy="55.9" r="1.6" fill="#35632c"/>
<circle cx="411.5" cy="55.4" r="0.9" fill="#3f6a36"/>
<circle cx="72.1" cy="45.3" r="1.6" fill="#1f4418"/>
<circle cx="71.7" cy="44.8" r="0.9" fill="#2a4d23"/>
<circle cx="282.9" cy="43.2" r="3.1" fill="#3d6e33"/>
<circle cx="282.1" cy="42.3" r="1.7" fill="#46753d"/>
<circle cx="217.7" cy="48.3" r="2.0" fill="#3d6e33"/>
<circle cx="217.2" cy="47.7" r="1.1" fill="#46753d"/>
<circle cx="241.9" cy="55.5" r="2.8" fill="#35632c"/>
<circle cx="241.2" cy="54.7" r="1.5" fill="#3f6a36"/>
<circle cx="400.0" cy="44.8" r="2.6" fill="#35632c"/>
<circle cx="399.4" cy="44.0" r="1.4" fill="#3f6a36"/>
<circle cx="235.2" cy="56.3" r="2.2" fill="#2c5624"/>
<circle cx="234.7" cy="55.6" r="1.2" fill="#365e2e"/>
<circle cx="437.4" cy="58.2" r="3.1" fill="#234a1c"/>
<circle cx="436.6" cy="57.3" r="1.7" fill="#2e5327"/>
<circle cx="433.0" cy="54.8" r="2.8" fill="#2c5624"/>
<circle cx="432.3" cy="54.0" r="1.5" fill="#365e2e"/>
<circle cx="407.8" cy="50.5" r="3.0" fill="#3d6e33"/>
<circle cx="407.1" cy="49.6" r="1.7" fill="#46753d"/>
<circle cx="289.7" cy="52.3" r="2.3" fill="#1f4418"/>
<circle cx="289.1" cy="51.6" r="1.3" fill="#2a4d23"/>
<circle cx="329.4" cy="53.0" r="2.0" fill="#1f4418"/>
<circle cx="328.9" cy="52.4" r="1.1" fill="#2a4d23"/>
<circle cx="363.1" cy="44.4" r="2.4" fill="#234a1c"/>
<circle cx="362.5" cy="43.7" r="1.3" fill="#2e5327"/>
<circle cx="234.3" cy="49.2" r="1.7" fill="#35632c"/>
<circle cx="233.9" cy="48.7" r="0.9" fill="#3f6a36"/>
<circle cx="256.0" cy="56.1" r="2.8" fill="#2c5624"/>
<circle cx="255.3" cy="55.2" r="1.5" fill="#365e2e"/>
<circle cx="437.1" cy="47.5" r="2.2" fill="#234a1c"/>
<circle cx="436.5" cy="46.9" r="1.2" fill="#2e5327"/>
<circle cx="341.0" cy="57.3" r="2.1" fill="#1f4418"/>
<circle cx="340.5" cy="56.7" r="1.1" fill="#2a4d23"/>
<circle cx="321.7" cy="56.2" r="2.4" fill="#234a1c"/>
<circle cx="321.1" cy="55.5" r="1.3" fill="#2e5327"/>
<circle cx="7.1" cy="58.3" r="1.8" fill="#35632c"/>
<circle cx="6.6" cy="57.8" r="1.0" fill="#3f6a36"/>
<circle cx="200.4" cy="47.8" r="2.6" fill="#3d6e33"/>
<circle cx="199.7" cy="47.0" r="1.4" fill="#46753d"/>
<circle cx="314.8" cy="41.4" r="2.0" fill="#234a1c"/>
<circle cx="314.3" cy="40.8" r="1.1" fill="#2e5327"/>
<circle cx="161.8" cy="45.0" r="2.9" fill="#234a1c"/>
<circle cx="161.1" cy="44.2" r="1.6" fill="#2e5327"/>
<circle cx="408.0" cy="44.0" r="3.0" fill="#234a1c"/>
<circle cx="407.3" cy="43.1" r="1.6" fill="#2e5327"/>
<circle cx="327.0" cy="45.0" r="1.8" fill="#35632c"/>
<circle cx="326.5" cy="44.4" r="1.0" fill="#3f6a36"/>
<circle cx="41.4" cy="52.3" r="2.6" fill="#3d6e33"/>
<circle cx="40.7" cy="51.6" r="1.4" fill="#46753d"/>
<circle cx="87.1" cy="50.0" r="2.7" fill="#2c5624"/>
<circle cx="86.4" cy="49.1" r="1.5" fill="#365e2e"/>
<circle cx="9.3" cy="58.0" r="3.1" fill="#3d6e33"/>
<circle cx="8.5" cy="57.1" r="1.7" fill="#46753d"/>
<circle cx="158.8" cy="43.9" r="1.8" fill="#234a1c"/>
<circle cx="158.4" cy="43.3" r="1.0" fill="#2e5327"/>
<circle cx="111.8" cy="56.5" r="1.7" fill="#3d6e33"/>
<circle cx="111.4" cy="56.0" r="0.9" fill="#46753d"/>
<circle cx="317.5" cy="51.9" r="2.3" fill="#3d6e33"/>
<circle cx="316.9" cy="51.2" r="1.3" fill="#46753d"/>
<circle cx="234.2" cy="51.0" r="2.3" fill="#234a1c"/>
<circle cx="233.6" cy="50.3" r="1.3" fill="#2e5327"/>
<circle cx="277.9" cy="47.3" r="2.2" fill="#1f4418"/>
<circle cx="277.4" cy="46.7" r="1.2" fill="#2a4d23"/>
<circle cx="277.9" cy="49.1" r="2.4" fill="#2c5624"/>
<circle cx="277.3" cy="48.4" r="1.3" fill="#365e2e"/>
<circle cx="190.4" cy="44.6" r="3.0" fill="#1f4418"/>
<circle cx="189.7" cy="43.8" r="1.6" fill="#2a4d23"/>
<circle cx="370.4" cy="55.5" r="3.0" fill="#234a1c"/>
<circle cx="369.6" cy="54.6" r="1.7" fill="#2e5327"/>
<circle cx="303.1" cy="46.0" r="3.1" fill="#1f4418"/>
<circle cx="302.3" cy="45.0" r="1.7" fill="#2a4d23"/>
<circle cx="272.8" cy="56.9" r="2.0" fill="#234a1c"/>
<circle cx="272.3" cy="56.4" r="1.1" fill="#2e5327"/>
<circle cx="69.2" cy="52.9" r="2.6" fill="#234a1c"/>
<circle cx="68.5" cy="52.1" r="1.4" fill="#2e5327"/>
<circle cx="333.6" cy="44.1" r="2.7" fill="#3d6e33"/>
<circle cx="332.9" cy="43.2" r="1.5" fill="#46753d"/>
<circle cx="3.0" cy="55.6" r="2.0" fill="#3d6e33"/>
<circle cx="2.5" cy="55.0" r="1.1" fill="#46753d"/>
<circle cx="251.6" cy="56.4" r="2.4" fill="#234a1c"/>
<circle cx="251.0" cy="55.6" r="1.3" fill="#2e5327"/>
<circle cx="172.9" cy="59.2" r="2.9" fill="#35632c"/>
<circle cx="172.1" cy="58.3" r="1.6" fill="#3f6a36"/>
<circle cx="388.6" cy="48.4" r="2.5" fill="#234a1c"/>
<circle cx="388.0" cy="47.6" r="1.4" fill="#2e5327"/>
<circle cx="391.7" cy="55.4" r="2.5" fill="#2c5624"/>
<circle cx="391.1" cy="54.7" r="1.4" fill="#365e2e"/>
<circle cx="11.9" cy="52.8" r="2.8" fill="#35632c"/>
<circle cx="11.2" cy="52.0" r="1.6" fill="#3f6a36"/>
<circle cx="340.4" cy="54.4" r="2.4" fill="#2c5624"/>
<circle cx="339.8" cy="53.7" r="1.3" fill="#365e2e"/>
<circle cx="123.7" cy="47.4" r="2.4" fill="#35632c"/>
<circle cx="123.1" cy="46.7" r="1.3" fill="#3f6a36"/>
<circle cx="168.2" cy="56.0" r="1.7" fill="#35632c"/>
<circle cx="167.8" cy="55.5" r="0.9" fill="#3f6a36"/>
<circle cx="255.3" cy="49.7" r="2.9" fill="#2c5624"/>
<circle cx="254.5" cy="48.9" r="1.6" fill="#365e2e"/>
<circle cx="330.3" cy="43.0" r="2.1" fill="#234a1c"/>
<circle cx="329.8" cy="42.4" r="1.2" fill="#2e5327"/>
<circle cx="115.0" cy="53.5" r="3.1" fill="#234a1c"/>
<circle cx="114.2" cy="52.6" r="1.7" fill="#2e5327"/>
<circle cx="161.5" cy="57.3" r="2.3" fill="#234a1c"/>
<circle cx="160.9" cy="56.6" r="1.3" fill="#2e5327"/>
<circle cx="274.3" cy="49.5" r="2.5" fill="#35632c"/>
<circle cx="273.7" cy="48.7" r="1.4" fill="#3f6a36"/>
<circle cx="317.9" cy="40.9" r="2.6" fill="#3d6e33"/>
<circle cx="317.3" cy="40.2" r="1.4" fill="#46753d"/>
<circle cx="401.4" cy="48.5" r="1.9" fill="#234a1c"/>
<circle cx="401.0" cy="47.9" r="1.1" fill="#2e5327"/>
<circle cx="423.8" cy="40.3" r="2.8" fill="#1f4418"/>
<circle cx="423.1" cy="39.4" r="1.6" fill="#2a4d23"/>
<circle cx="105.7" cy="47.1" r="3.0" fill="#2c5624"/>
<circle cx="104.9" cy="46.2" r="1.6" fill="#365e2e"/>
<circle cx="119.6" cy="51.9" r="2.9" fill="#35632c"/>
<circle cx="118.9" cy="51.0" r="1.6" fill="#3f6a36"/>
<circle cx="208.7" cy="46.6" r="3.0" fill="#2c5624"/>
<circle cx="207.9" cy="45.7" r="1.7" fill="#365e2e"/>
<circle cx="123.1" cy="55.0" r="2.7" fill="#234a1c"/>
<circle cx="122.4" cy="54.2" r="1.5" fill="#2e5327"/>
<circle cx="386.2" cy="44.9" r="3.2" fill="#35632c"/>
<circle cx="385.4" cy="44.0" r="1.8" fill="#3f6a36"/>
<circle cx="244.1" cy="56.4" r="2.9" fill="#1f4418"/>
<circle cx="243.4" cy="55.6" r="1.6" fill="#2a4d23"/>
<circle cx="7.4" cy="51.6" r="3.1" fill="#2c5624"/>
<circle cx="6.6" cy="50.6" r="1.7" fill="#365e2e"/>
<circle cx="348.4" cy="52.3" r="2.8" fill="#234a1c"/>
<circle cx="347.7" cy="51.4" r="1.5" fill="#2e5327"/>
<circle cx="383.1" cy="57.9" r="2.9" fill="#2c5624"/>
<circle cx="382.4" cy="57.0" r="1.6" fill="#365e2e"/>
<circle cx="217.2" cy="54.0" r="2.4" fill="#2c5624"/>
<circle cx="216.6" cy="53.3" r="1.3" fill="#365e2e"/>
<circle cx="286.5" cy="48.6" r="2.7" fill="#35632c"/>
<circle cx="285.8" cy="47.8" r="1.5" fill="#3f6a36"/>
<circle cx="337.6" cy="50.4" r="1.7" fill="#234a1c"/>
<circle cx="337.2" cy="49.9" r="0.9" fill="#2e5327"/>
<circle cx="330.7" cy="43.3" r="1.8" fill="#1f4418"/>
<circle cx="330.2" cy="42.8" r="1.0" fill="#2a4d23"/>
<circle cx="16.6" cy="52.7" r="1.8" fill="#3d6e33"/>
<circle cx="16.1" cy="52.2" r="1.0" fill="#46753d"/>
<circle cx="254.4" cy="53.1" r="3.0" fill="#35632c"/>
<circle cx="253.6" cy="52.2" r="1.6" fill="#3f6a36"/>
<circle cx="179.0" cy="47.8" r="2.8" fill="#234a1c"/>
<circle cx="178.3" cy="47.0" r="1.5" fill="#2e5327"/>
<circle cx="177.1" cy="55.8" r="3.0" fill="#1f4418"/>
<circle cx="176.4" cy="54.9" r="1.7" fill="#2a4d23"/>
<circle cx="273.2" cy="46.3" r="2.7" fill="#35632c"/>
<circle cx="272.5" cy="45.4" r="1.5" fill="#3f6a36"/>
<circle cx="55.1" cy="46.9" r="3.1" fill="#35632c"/>
<circle cx="54.3" cy="46.0" r="1.7" fill="#3f6a36"/>
<circle cx="35.8" cy="55.9" r="1.9" fill="#35632c"/>
<circle cx="35.3" cy="55.3" r="1.0" fill="#3f6a36"/>
<circle cx="14.2" cy="55.8" r="2.7" fill="#3d6e33"/>
<circle cx="13.6" cy="55.0" r="1.5" fill="#46753d"/>
<circle cx="6.3" cy="56.1" r="1.9" fill="#3d6e33"/>
<circle cx="5.8" cy="55.5" r="1.0" fill="#46753d"/>
<circle cx="298.9" cy="44.6" r="1.8" fill="#35632c"/>
<circle cx="298.5" cy="44.1" r="1.0" fill="#3f6a36"/>
<circle cx="271.6" cy="43.4" r="2.8" fill="#234a1c"/>
<circle cx="270.9" cy="42.5" r="1.5" fill="#2e5327"/>
<circle cx="72.3" cy="54.6" r="2.3" fill="#35632c"/>
<circle cx="71.8" cy="54.0" r="1.2" fill="#3f6a36"/>
<circle cx="91.4" cy="47.9" r="2.9" fill="#35632c"/>
<circle cx="90.7" cy="47.1" r="1.6" fill="#3f6a36"/>
<circle cx="327.0" cy="54.6" r="2.0" fill="#35632c"/>
<circle cx="326.5" cy="54.0" r="1.1" fill="#3f6a36"/>
<circle cx="96.3" cy="56.4" r="2.8" fill="#2c5624"/>
<circle cx="95.6" cy="55.6" r="1.6" fill="#365e2e"/>
<circle cx="438.2" cy="41.7" r="3.1" fill="#1f4418"/>
<circle cx="437.4" cy="40.7" r="1.7" fill="#2a4d23"/>
<circle cx="200.1" cy="53.9" r="2.9" fill="#2c5624"/>
<circle cx="199.4" cy="53.0" r="1.6" fill="#365e2e"/>
<circle cx="315.1" cy="48.8" r="1.7" fill="#1f4418"/>
<circle cx="314.7" cy="48.3" r="0.9" fill="#2a4d23"/>
<circle cx="400.7" cy="41.7" r="2.7" fill="#1f4418"/>
<circle cx="400.0" cy="40.9" r="1.5" fill="#2a4d23"/>
<circle cx="397.5" cy="58.7" r="2.9" fill="#234a1c"/>
<circle cx="396.8" cy="57.8" r="1.6" fill="#2e5327"/>
<circle cx="336.1" cy="59.8" r="2.4" fill="#234a1c"/>
<circle cx="335.5" cy="59.0" r="1.3" fill="#2e5327"/>
<circle cx="418.1" cy="59.3" r="2.3" fill="#3d6e33"/>
<circle cx="417.6" cy="58.6" r="1.3" fill="#46753d"/>
<circle cx="176.3" cy="59.7" r="3.0" fill="#1f4418"/>
<circle cx="175.6" cy="58.8" r="1.6" fill="#2a4d23"/>
<circle cx="212.4" cy="45.3" r="2.5" fill="#2c5624"/>
<circle cx="211.8" cy="44.6" r="1.4" fill="#365e2e"/>
<circle cx="129.3" cy="58.5" r="1.8" fill="#1f4418"/>
<circle cx="128.9" cy="58.0" r="1.0" fill="#2a4d23"/>
<circle cx="285.9" cy="51.2" r="2.8" fill="#1f4418"/>
<circle cx="285.2" cy="50.3" r="1.6" fill="#2a4d23"/>
<circle cx="234.1" cy="42.3" r="2.5" fill="#234a1c"/>
<circle cx="233.5" cy="41.6" r="1.3" fill="#2e5327"/>
<circle cx="400.6" cy="52.8" r="3.0" fill="#1f4418"/>
<circle cx="399.8" cy="51.9" r="1.7" fill="#2a4d23"/>
<circle cx="147.0" cy="45.8" r="2.9" fill="#3d6e33"/>
<circle cx="146.2" cy="44.9" r="1.6" fill="#46753d"/>
<circle cx="205.6" cy="55.4" r="2.7" fill="#35632c"/>
<circle cx="204.9" cy="54.6" r="1.5" fill="#3f6a36"/>
<circle cx="136.0" cy="51.8" r="2.4" fill="#1f4418"/>
<circle cx="135.4" cy="51.1" r="1.3" fill="#2a4d23"/>
<circle cx="329.9" cy="52.7" r="3.1" fill="#35632c"/>
<circle cx="329.1" cy="51.7" r="1.7" fill="#3f6a36"/>
<circle cx="235.7" cy="59.2" r="1.9" fill="#2c5624"/>
<circle cx="235.2" cy="58.6" r="1.0" fill="#365e2e"/>
<circle cx="113.1" cy="55.0" r="2.3" fill="#3d6e33"/>
<circle cx="112.5" cy="54.3" r="1.3" fill="#46753d"/>
<circle cx="115.3" cy="50.0" r="1.7" fill="#3d6e33"/>
<circle cx="114.9" cy="49.5" r="1.0" fill="#46753d"/>
<circle cx="281.3" cy="52.6" r="1.8" fill="#35632c"/>
<circle cx="280.8" cy="52.0" r="1.0" fill="#3f6a36"/>
<circle cx="437.1" cy="43.4" r="1.6" fill="#3d6e33"/>
<circle cx="436.7" cy="42.9" r="0.9" fill="#46753d"/>
<circle cx="220.3" cy="56.0" r="2.6" fill="#1f4418"/>
<circle cx="219.6" cy="55.2" r="1.4" fill="#2a4d23"/>
<circle cx="305.9" cy="59.9" r="3.0" fill="#1f4418"/>
<circle cx="305.1" cy="59.0" r="1.6" fill="#2a4d23"/>
<circle cx="111.1" cy="53.8" r="2.3" fill="#234a1c"/>
<circle cx="110.6" cy="53.2" r="1.3" fill="#2e5327"/>
<circle cx="311.5" cy="59.4" r="2.3" fill="#35632c"/>
<circle cx="311.0" cy="58.7" r="1.2" fill="#3f6a36"/>
<circle cx="409.5" cy="52.6" r="3.0" fill="#1f4418"/>
<circle cx="408.8" cy="51.7" r="1.6" fill="#2a4d23"/>
<circle cx="121.0" cy="54.7" r="2.0" fill="#35632c"/>
<circle cx="120.5" cy="54.1" r="1.1" fill="#3f6a36"/>
<circle cx="107.1" cy="59.2" r="2.4" fill="#3d6e33"/>
<circle cx="106.5" cy="58.5" r="1.3" fill="#46753d"/>
<circle cx="20.4" cy="53.6" r="3.1" fill="#2c5624"/>
<circle cx="19.7" cy="52.6" r="1.7" fill="#365e2e"/>
<circle cx="379.3" cy="42.1" r="2.6" fill="#2c5624"/>
<circle cx="378.7" cy="41.3" r="1.5" fill="#365e2e"/>
<circle cx="71.2" cy="51.6" r="2.1" fill="#3d6e33"/>
<circle cx="70.6" cy="51.0" r="1.2" fill="#46753d"/>
<circle cx="315.9" cy="53.5" r="1.7" fill="#234a1c"/>
<circle cx="315.5" cy="53.0" r="1.0" fill="#2e5327"/>
<circle cx="372.3" cy="49.6" r="3.0" fill="#3d6e33"/>
<circle cx="371.6" cy="48.7" r="1.6" fill="#46753d"/>
<circle cx="76.1" cy="59.2" r="2.2" fill="#35632c"/>
<circle cx="75.5" cy="58.5" r="1.2" fill="#3f6a36"/>
<circle cx="255.8" cy="52.9" r="2.3" fill="#1f4418"/>
<circle cx="255.2" cy="52.2" r="1.3" fill="#2a4d23"/>
<circle cx="352.1" cy="47.7" r="1.8" fill="#2c5624"/>
<circle cx="351.6" cy="47.1" r="1.0" fill="#365e2e"/>
<circle cx="281.8" cy="56.6" r="1.8" fill="#35632c"/>
<circle cx="281.3" cy="56.1" r="1.0" fill="#3f6a36"/>
<circle cx="12.6" cy="59.3" r="2.9" fill="#35632c"/>
<circle cx="11.9" cy="58.5" r="1.6" fill="#3f6a36"/>
<circle cx="239.4" cy="55.9" r="2.4" fill="#234a1c"/>
<circle cx="238.8" cy="55.2" r="1.3" fill="#2e5327"/>
<circle cx="356.3" cy="58.3" r="1.7" fill="#3d6e33"/>
<circle cx="355.9" cy="57.8" r="0.9" fill="#46753d"/>
<circle cx="251.3" cy="42.9" r="2.4" fill="#234a1c"/>
<circle cx="250.7" cy="42.2" r="1.3" fill="#2e5327"/>
<circle cx="172.3" cy="53.1" r="2.9" fill="#35632c"/>
<circle cx="171.6" cy="52.3" r="1.6" fill="#3f6a36"/>
<circle cx="388.4" cy="56.0" r="2.3" fill="#234a1c"/>
<circle cx="387.8" cy="55.3" r="1.2" fill="#2e5327"/>
<circle cx="338.3" cy="54.8" r="2.5" fill="#2c5624"/>
<circle cx="337.7" cy="54.1" r="1.4" fill="#365e2e"/>
<circle cx="205.2" cy="45.4" r="2.9" fill="#1f4418"/>
<circle cx="204.4" cy="44.6" r="1.6" fill="#2a4d23"/>
<circle cx="98.5" cy="58.8" r="2.8" fill="#1f4418"/>
<circle cx="97.8" cy="58.0" r="1.5" fill="#2a4d23"/>
<circle cx="164.2" cy="46.8" r="3.1" fill="#2c5624"/>
<circle cx="163.4" cy="45.9" r="1.7" fill="#365e2e"/>
<circle cx="134.3" cy="56.8" r="2.1" fill="#35632c"/>
<circle cx="133.8" cy="56.2" r="1.1" fill="#3f6a36"/>
<circle cx="275.6" cy="59.6" r="1.7" fill="#234a1c"/>
<circle cx="275.2" cy="59.1" r="0.9" fill="#2e5327"/>
<circle cx="398.8" cy="58.9" r="2.4" fill="#1f4418"/>
<circle cx="398.2" cy="58.2" r="1.3" fill="#2a4d23"/>
<circle cx="141.6" cy="44.5" r="2.0" fill="#2c5624"/>
<circle cx="141.1" cy="43.9" r="1.1" fill="#365e2e"/>
<circle cx="73.8" cy="55.0" r="1.7" fill="#35632c"/>
<circle cx="73.3" cy="54.5" r="0.9" fill="#3f6a36"/>
<circle cx="274.8" cy="50.6" r="3.1" fill="#3d6e33"/>
<circle cx="274.0" cy="49.7" r="1.7" fill="#46753d"/>
<circle cx="224.7" cy="58.0" r="1.7" fill="#3d6e33"/>
<circle cx="224.3" cy="57.5" r="1.0" fill="#46753d"/>
<circle cx="172.6" cy="59.4" r="3.1" fill="#1f4418"/>
<circle cx="171.8" cy="58.4" r="1.7" fill="#2a4d23"/>
<circle cx="80.0" cy="55.9" r="2.0" fill="#2c5624"/>
<circle cx="79.5" cy="55.3" r="1.1" fill="#365e2e"/>
<circle cx="3.3" cy="53.0" r="1.9" fill="#35632c"/>
<circle cx="2.8" cy="52.4" r="1.1" fill="#3f6a36"/>
<circle cx="261.5" cy="52.0" r="2.8" fill="#3d6e33"/>
<circle cx="260.8" cy="51.1" r="1.5" fill="#46753d"/>
<circle cx="44.3" cy="48.0" r="2.9" fill="#3d6e33"/>
<circle cx="43.5" cy="47.2" r="1.6" fill="#46753d"/>
<circle cx="402.6" cy="57.5" r="2.8" fill="#234a1c"/>
<circle cx="401.9" cy="56.7" r="1.6" fill="#2e5327"/>
<circle cx="301.0" cy="56.7" r="2.0" fill="#1f4418"/>
<circle cx="300.5" cy="56.1" r="1.1" fill="#2a4d23"/>
<circle cx="349.8" cy="48.5" r="1.7" fill="#1f4418"/>
<circle cx="349.4" cy="48.0" r="0.9" fill="#2a4d23"/>
<circle cx="325.6" cy="45.4" r="1.6" fill="#2c5624"/>
<circle cx="325.2" cy="45.0" r="0.9" fill="#365e2e"/>
<circle cx="9.6" cy="49.7" r="3.1" fill="#1f4418"/>
<circle cx="8.9" cy="48.8" r="1.7" fill="#2a4d23"/>
<circle cx="135.2" cy="54.1" r="2.7" fill="#234a1c"/>
<circle cx="134.5" cy="53.3" r="1.5" fill="#2e5327"/>
<circle cx="253.4" cy="45.4" r="2.6" fill="#234a1c"/>
<circle cx="252.7" cy="44.6" r="1.4" fill="#2e5327"/>
<circle cx="111.6" cy="46.3" r="1.9" fill="#234a1c"/>
<circle cx="111.1" cy="45.8" r="1.0" fill="#2e5327"/>
<circle cx="53.7" cy="52.0" r="1.9" fill="#234a1c"/>
<circle cx="53.2" cy="51.4" r="1.0" fill="#2e5327"/>
<circle cx="363.4" cy="50.2" r="1.9" fill="#3d6e33"/>
<circle cx="363.0" cy="49.7" r="1.0" fill="#46753d"/>
<circle cx="227.7" cy="55.8" r="3.2" fill="#35632c"/>
<circle cx="226.9" cy="54.9" r="1.7" fill="#3f6a36"/>
<circle cx="187.5" cy="52.8" r="1.7" fill="#3d6e33"/>
<circle cx="187.0" cy="52.2" r="1.0" fill="#46753d"/>
<circle cx="149.3" cy="49.5" r="2.9" fill="#35632c"/>
<circle cx="148.6" cy="48.6" r="1.6" fill="#3f6a36"/>
<circle cx="26.4" cy="59.4" r="2.8" fill="#35632c"/>
<circle cx="25.7" cy="58.5" r="1.5" fill="#3f6a36"/>
<circle cx="103.5" cy="53.3" r="1.9" fill="#2c5624"/>
<circle cx="103.0" cy="52.7" r="1.1" fill="#365e2e"/>
<circle cx="350.0" cy="54.2" r="2.6" fill="#1f4418"/>
<circle cx="349.4" cy="53.4" r="1.4" fill="#2a4d23"/>
<circle cx="416.9" cy="43.3" r="2.4" fill="#1f4418"/>
<circle cx="416.3" cy="42.6" r="1.3" fill="#2a4d23"/>
<circle cx="431.0" cy="58.8" r="1.7" fill="#2c5624"/>
<circle cx="430.5" cy="58.3" r="0.9" fill="#365e2e"/>
<circle cx="281.4" cy="53.2" r="2.0" fill="#2c5624"/>
<circle cx="280.9" cy="52.6" r="1.1" fill="#365e2e"/>
<circle cx="85.0" cy="47.3" r="2.4" fill="#234a1c"/>
<circle cx="84.4" cy="46.6" r="1.3" fill="#2e5327"/>
<circle cx="379.9" cy="42.6" r="2.2" fill="#1f4418"/>
<circle cx="379.4" cy="42.0" r="1.2" fill="#2a4d23"/>
<circle cx="293.7" cy="45.6" r="2.2" fill="#35632c"/>
<circle cx="293.2" cy="44.9" r="1.2" fill="#3f6a36"/>
<circle cx="87.2" cy="56.4" r="1.9" fill="#35632c"/>
<circle cx="86.8" cy="55.8" r="1.0" fill="#3f6a36"/>
<circle cx="383.2" cy="40.7" r="2.9" fill="#2c5624"/>
<circle cx="382.5" cy="39.8" r="1.6" fill="#365e2e"/>
<circle cx="230.2" cy="52.7" r="2.5" fill="#1f4418"/>
<circle cx="229.6" cy="52.0" r="1.4" fill="#2a4d23"/>
<circle cx="93.1" cy="52.0" r="2.1" fill="#3d6e33"/>
<circle cx="92.6" cy="51.3" r="1.2" fill="#46753d"/>
<circle cx="-1.0" cy="52.1" r="2.5" fill="#1f4418"/>
<circle cx="-1.7" cy="51.4" r="1.4" fill="#2a4d23"/>
<circle cx="64.8" cy="53.5" r="2.3" fill="#3d6e33"/>
<circle cx="64.2" cy="52.8" r="1.3" fill="#46753d"/>
<circle cx="63.8" cy="59.3" r="2.3" fill="#2c5624"/>
<circle cx="63.2" cy="58.6" r="1.3" fill="#365e2e"/>
<circle cx="60.8" cy="57.5" r="2.4" fill="#234a1c"/>
<circle cx="60.2" cy="56.7" r="1.3" fill="#2e5327"/>
<circle cx="243.6" cy="50.1" r="2.1" fill="#1f4418"/>
<circle cx="243.0" cy="49.4" r="1.2" fill="#2a4d23"/>
<circle cx="411.7" cy="45.7" r="1.6" fill="#2c5624"/>
<circle cx="411.3" cy="45.2" r="0.9" fill="#365e2e"/>
<circle cx="130.8" cy="56.5" r="1.9" fill="#35632c"/>
<circle cx="130.3" cy="55.9" r="1.0" fill="#3f6a36"/>
<circle cx="143.8" cy="54.6" r="2.2" fill="#2c5624"/>
<circle cx="143.2" cy="53.9" r="1.2" fill="#365e2e"/>
<circle cx="432.5" cy="57.2" r="2.2" fill="#1f4418"/>
<circle cx="431.9" cy="56.6" r="1.2" fill="#2a4d23"/>
<circle cx="93.9" cy="53.0" r="1.9" fill="#3d6e33"/>
<circle cx="93.5" cy="52.5" r="1.0" fill="#46753d"/>
<circle cx="356.8" cy="54.4" r="2.4" fill="#3d6e33"/>
<circle cx="356.2" cy="53.7" r="1.3" fill="#46753d"/>
<circle cx="193.3" cy="51.3" r="2.1" fill="#1f4418"/>
<circle cx="192.8" cy="50.7" r="1.1" fill="#2a4d23"/>
<circle cx="166.1" cy="46.3" r="1.9" fill="#35632c"/>
<circle cx="165.6" cy="45.7" r="1.1" fill="#3f6a36"/>
<circle cx="249.1" cy="56.4" r="2.4" fill="#35632c"/>
<circle cx="248.5" cy="55.6" r="1.3" fill="#3f6a36"/>
<circle cx="161.3" cy="53.5" r="2.9" fill="#3d6e33"/>
<circle cx="160.6" cy="52.7" r="1.6" fill="#46753d"/>
<circle cx="278.3" cy="43.5" r="2.8" fill="#1f4418"/>
<circle cx="277.6" cy="42.6" r="1.5" fill="#2a4d23"/>
<circle cx="334.7" cy="43.4" r="2.8" fill="#234a1c"/>
<circle cx="334.0" cy="42.5" r="1.5" fill="#2e5327"/>
<circle cx="295.1" cy="48.6" r="3.2" fill="#1f4418"/>
<circle cx="294.3" cy="47.7" r="1.7" fill="#2a4d23"/>
<path d="M-10 60 Q80 56 160 59 T445 57 L445 104 L-10 104Z" fill="#3f8a2c"/>
<path d="M-8 70 Q10 60 40 63 Q62 66 60 78 Q55 92 25 90 Q-5 88 -8 80Z" fill="#8ab45a"/>
<path d="M75 84 Q85 73 110 74 Q138 76 140 86 Q138 97 110 97 Q80 96 75 84Z" fill="#85b058"/>
<circle cx="192.3" cy="81.5" r="3.5" fill="#2a6a1e"/>
<circle cx="191.4" cy="80.4" r="1.9" fill="#49803f"/>
<circle cx="213.3" cy="83.3" r="2.1" fill="#2a6a1e"/>
<circle cx="212.8" cy="82.7" r="1.2" fill="#49803f"/>
<circle cx="186.6" cy="82.4" r="2.1" fill="#2a6a1e"/>
<circle cx="186.0" cy="81.8" r="1.2" fill="#49803f"/>
<circle cx="372.6" cy="99.7" r="3.0" fill="#2a6a1e"/>
<circle cx="371.8" cy="98.8" r="1.7" fill="#49803f"/>
<circle cx="321.4" cy="62.5" r="2.2" fill="#44962e"/>
<circle cx="320.8" cy="61.9" r="1.2" fill="#60a54d"/>
<circle cx="403.1" cy="89.7" r="3.7" fill="#44962e"/>
<circle cx="402.2" cy="88.6" r="2.0" fill="#60a54d"/>
<circle cx="37.7" cy="64.6" r="2.6" fill="#5cb03c"/>
<circle cx="37.0" cy="63.8" r="1.4" fill="#74bb59"/>
<circle cx="25.0" cy="82.4" r="3.5" fill="#44962e"/>
<circle cx="24.1" cy="81.4" r="1.9" fill="#60a54d"/>
<circle cx="196.2" cy="70.1" r="3.2" fill="#5cb03c"/>
<circle cx="195.4" cy="69.2" r="1.8" fill="#74bb59"/>
<circle cx="93.9" cy="59.2" r="2.5" fill="#5cb03c"/>
<circle cx="93.3" cy="58.5" r="1.4" fill="#74bb59"/>
<circle cx="278.5" cy="76.7" r="2.0" fill="#2a6a1e"/>
<circle cx="278.0" cy="76.1" r="1.1" fill="#49803f"/>
<circle cx="314.8" cy="80.0" r="2.6" fill="#2a6a1e"/>
<circle cx="314.1" cy="79.3" r="1.5" fill="#49803f"/>
<circle cx="231.6" cy="60.9" r="3.7" fill="#2f7422"/>
<circle cx="230.7" cy="59.8" r="2.0" fill="#4e8843"/>
<circle cx="95.5" cy="68.3" r="2.7" fill="#3a8a28"/>
<circle cx="94.8" cy="67.5" r="1.5" fill="#579b48"/>
<circle cx="375.0" cy="72.8" r="3.7" fill="#4ea034"/>
<circle cx="374.1" cy="71.7" r="2.0" fill="#68ae52"/>
<circle cx="145.9" cy="98.5" r="1.8" fill="#2a6a1e"/>
<circle cx="145.4" cy="98.0" r="1.0" fill="#49803f"/>
<circle cx="303.7" cy="63.1" r="2.5" fill="#3a8a28"/>
<circle cx="303.1" cy="62.4" r="1.4" fill="#579b48"/>
<circle cx="192.6" cy="61.4" r="2.6" fill="#4ea034"/>
<circle cx="192.0" cy="60.7" r="1.4" fill="#68ae52"/>
<circle cx="58.6" cy="64.9" r="2.8" fill="#2a6a1e"/>
<circle cx="57.9" cy="64.1" r="1.5" fill="#49803f"/>
<circle cx="262.1" cy="76.2" r="2.1" fill="#5cb03c"/>
<circle cx="261.6" cy="75.6" r="1.1" fill="#74bb59"/>
<circle cx="246.3" cy="63.9" r="1.9" fill="#2f7422"/>
<circle cx="245.8" cy="63.3" r="1.0" fill="#4e8843"/>
<circle cx="28.3" cy="60.4" r="3.5" fill="#2a6a1e"/>
<circle cx="27.4" cy="59.4" r="1.9" fill="#49803f"/>
<circle cx="118.0" cy="93.7" r="2.0" fill="#2f7422"/>
<circle cx="117.5" cy="93.1" r="1.1" fill="#4e8843"/>
<circle cx="97.6" cy="78.5" r="3.9" fill="#4ea034"/>
<circle cx="96.6" cy="77.4" r="2.1" fill="#68ae52"/>
<circle cx="210.4" cy="59.7" r="2.5" fill="#5cb03c"/>
<circle cx="209.8" cy="58.9" r="1.4" fill="#74bb59"/>
<circle cx="387.5" cy="63.5" r="3.1" fill="#3a8a28"/>
<circle cx="386.7" cy="62.6" r="1.7" fill="#579b48"/>
<circle cx="286.1" cy="68.9" r="3.0" fill="#4ea034"/>
<circle cx="285.3" cy="68.0" r="1.7" fill="#68ae52"/>
<circle cx="168.4" cy="73.5" r="2.8" fill="#4ea034"/>
<circle cx="167.8" cy="72.7" r="1.5" fill="#68ae52"/>
<circle cx="384.3" cy="91.2" r="4.0" fill="#4ea034"/>
<circle cx="383.3" cy="90.0" r="2.2" fill="#68ae52"/>
<circle cx="33.3" cy="91.3" r="2.8" fill="#2a6a1e"/>
<circle cx="32.6" cy="90.5" r="1.5" fill="#49803f"/>
<circle cx="197.5" cy="96.6" r="3.9" fill="#2f7422"/>
<circle cx="196.5" cy="95.4" r="2.1" fill="#4e8843"/>
<circle cx="271.2" cy="68.6" r="2.2" fill="#2a6a1e"/>
<circle cx="270.6" cy="67.9" r="1.2" fill="#49803f"/>
<circle cx="307.5" cy="59.8" r="1.8" fill="#44962e"/>
<circle cx="307.0" cy="59.3" r="1.0" fill="#60a54d"/>
<circle cx="145.3" cy="58.8" r="2.8" fill="#3a8a28"/>
<circle cx="144.6" cy="57.9" r="1.6" fill="#579b48"/>
<circle cx="240.2" cy="71.2" r="2.9" fill="#44962e"/>
<circle cx="239.5" cy="70.3" r="1.6" fill="#60a54d"/>
<circle cx="407.6" cy="62.4" r="2.3" fill="#44962e"/>
<circle cx="407.0" cy="61.7" r="1.3" fill="#60a54d"/>
<circle cx="349.9" cy="57.2" r="3.4" fill="#2a6a1e"/>
<circle cx="349.0" cy="56.1" r="1.9" fill="#49803f"/>
<circle cx="415.4" cy="97.8" r="3.8" fill="#4ea034"/>
<circle cx="414.4" cy="96.6" r="2.1" fill="#68ae52"/>
<circle cx="189.4" cy="99.7" r="3.8" fill="#44962e"/>
<circle cx="188.4" cy="98.6" r="2.1" fill="#60a54d"/>
<circle cx="227.2" cy="77.1" r="3.9" fill="#5cb03c"/>
<circle cx="226.2" cy="76.0" r="2.2" fill="#74bb59"/>
<circle cx="350.8" cy="68.8" r="3.8" fill="#4ea034"/>
<circle cx="349.9" cy="67.7" r="2.1" fill="#68ae52"/>
<circle cx="358.1" cy="63.0" r="3.9" fill="#2f7422"/>
<circle cx="357.1" cy="61.8" r="2.2" fill="#4e8843"/>
<circle cx="351.7" cy="64.9" r="2.7" fill="#44962e"/>
<circle cx="351.1" cy="64.1" r="1.5" fill="#60a54d"/>
<circle cx="212.8" cy="58.3" r="3.0" fill="#4ea034"/>
<circle cx="212.1" cy="57.4" r="1.7" fill="#68ae52"/>
<circle cx="177.8" cy="92.5" r="2.8" fill="#2f7422"/>
<circle cx="177.1" cy="91.7" r="1.5" fill="#4e8843"/>
<circle cx="67.4" cy="76.6" r="3.8" fill="#44962e"/>
<circle cx="66.4" cy="75.5" r="2.1" fill="#60a54d"/>
<circle cx="421.9" cy="82.4" r="3.5" fill="#4ea034"/>
<circle cx="421.0" cy="81.4" r="1.9" fill="#68ae52"/>
<circle cx="48.4" cy="58.7" r="1.9" fill="#2a6a1e"/>
<circle cx="47.9" cy="58.1" r="1.0" fill="#49803f"/>
<circle cx="-1.1" cy="94.3" r="2.1" fill="#2a6a1e"/>
<circle cx="-1.6" cy="93.7" r="1.1" fill="#49803f"/>
<circle cx="348.3" cy="65.0" r="3.3" fill="#2f7422"/>
<circle cx="347.4" cy="64.0" r="1.8" fill="#4e8843"/>
<circle cx="142.4" cy="80.3" r="4.0" fill="#4ea034"/>
<circle cx="141.4" cy="79.1" r="2.2" fill="#68ae52"/>
<circle cx="306.9" cy="91.6" r="3.0" fill="#2f7422"/>
<circle cx="306.2" cy="90.7" r="1.6" fill="#4e8843"/>
<circle cx="291.8" cy="88.0" r="1.8" fill="#3a8a28"/>
<circle cx="291.4" cy="87.5" r="1.0" fill="#579b48"/>
<circle cx="263.2" cy="86.6" r="3.7" fill="#5cb03c"/>
<circle cx="262.2" cy="85.5" r="2.1" fill="#74bb59"/>
<circle cx="202.9" cy="61.3" r="3.0" fill="#3a8a28"/>
<circle cx="202.1" cy="60.5" r="1.6" fill="#579b48"/>
<circle cx="429.7" cy="70.9" r="3.8" fill="#5cb03c"/>
<circle cx="428.7" cy="69.8" r="2.1" fill="#74bb59"/>
<circle cx="203.0" cy="69.2" r="2.3" fill="#3a8a28"/>
<circle cx="202.4" cy="68.5" r="1.3" fill="#579b48"/>
<circle cx="100.6" cy="57.4" r="3.6" fill="#3a8a28"/>
<circle cx="99.7" cy="56.4" r="2.0" fill="#579b48"/>
<circle cx="9.8" cy="87.8" r="2.8" fill="#44962e"/>
<circle cx="9.1" cy="87.0" r="1.5" fill="#60a54d"/>
<circle cx="416.4" cy="96.4" r="2.7" fill="#5cb03c"/>
<circle cx="415.7" cy="95.6" r="1.5" fill="#74bb59"/>
<circle cx="175.1" cy="75.6" r="3.8" fill="#4ea034"/>
<circle cx="174.1" cy="74.4" r="2.1" fill="#68ae52"/>
<circle cx="61.3" cy="97.8" r="2.0" fill="#4ea034"/>
<circle cx="60.7" cy="97.1" r="1.1" fill="#68ae52"/>
<circle cx="232.2" cy="82.4" r="2.0" fill="#4ea034"/>
<circle cx="231.7" cy="81.8" r="1.1" fill="#68ae52"/>
<circle cx="216.6" cy="67.5" r="3.4" fill="#3a8a28"/>
<circle cx="215.7" cy="66.5" r="1.9" fill="#579b48"/>
<circle cx="312.2" cy="75.1" r="3.4" fill="#5cb03c"/>
<circle cx="311.3" cy="74.1" r="1.9" fill="#74bb59"/>
<circle cx="3.7" cy="93.8" r="2.5" fill="#2a6a1e"/>
<circle cx="3.0" cy="93.1" r="1.4" fill="#49803f"/>
<circle cx="183.2" cy="91.0" r="2.1" fill="#44962e"/>
<circle cx="182.7" cy="90.4" r="1.1" fill="#60a54d"/>
<circle cx="25.9" cy="75.7" r="4.0" fill="#3a8a28"/>
<circle cx="24.9" cy="74.5" r="2.2" fill="#579b48"/>
<circle cx="236.5" cy="99.4" r="2.0" fill="#5cb03c"/>
<circle cx="236.0" cy="98.8" r="1.1" fill="#74bb59"/>
<circle cx="425.2" cy="76.3" r="2.0" fill="#5cb03c"/>
<circle cx="424.7" cy="75.7" r="1.1" fill="#74bb59"/>
<circle cx="16.2" cy="76.3" r="2.4" fill="#4ea034"/>
<circle cx="15.6" cy="75.5" r="1.3" fill="#68ae52"/>
<circle cx="342.0" cy="62.0" r="3.1" fill="#4ea034"/>
<circle cx="341.3" cy="61.0" r="1.7" fill="#68ae52"/>
<circle cx="402.1" cy="88.6" r="3.7" fill="#2f7422"/>
<circle cx="401.1" cy="87.5" r="2.0" fill="#4e8843"/>
<circle cx="288.3" cy="79.7" r="2.3" fill="#3a8a28"/>
<circle cx="287.7" cy="79.0" r="1.3" fill="#579b48"/>
<circle cx="-2.3" cy="91.5" r="2.4" fill="#2a6a1e"/>
<circle cx="-2.9" cy="90.8" r="1.3" fill="#49803f"/>
<circle cx="265.2" cy="76.7" r="2.3" fill="#2a6a1e"/>
<circle cx="264.6" cy="76.0" r="1.3" fill="#49803f"/>
<circle cx="376.7" cy="98.3" r="3.1" fill="#2a6a1e"/>
<circle cx="375.9" cy="97.4" r="1.7" fill="#49803f"/>
<circle cx="364.0" cy="68.6" r="2.8" fill="#2a6a1e"/>
<circle cx="363.3" cy="67.7" r="1.6" fill="#49803f"/>
<circle cx="357.0" cy="80.8" r="3.7" fill="#4ea034"/>
<circle cx="356.1" cy="79.7" r="2.0" fill="#68ae52"/>
<circle cx="85.4" cy="71.4" r="2.0" fill="#2f7422"/>
<circle cx="84.9" cy="70.8" r="1.1" fill="#4e8843"/>
<circle cx="131.5" cy="74.4" r="2.9" fill="#44962e"/>
<circle cx="130.8" cy="73.5" r="1.6" fill="#60a54d"/>
<circle cx="48.2" cy="96.5" r="3.8" fill="#4ea034"/>
<circle cx="47.2" cy="95.3" r="2.1" fill="#68ae52"/>
<circle cx="277.9" cy="78.3" r="2.6" fill="#44962e"/>
<circle cx="277.3" cy="77.5" r="1.4" fill="#60a54d"/>
<circle cx="4.1" cy="60.7" r="3.6" fill="#3a8a28"/>
<circle cx="3.2" cy="59.6" r="2.0" fill="#579b48"/>
<circle cx="324.0" cy="73.8" r="2.0" fill="#2a6a1e"/>
<circle cx="323.5" cy="73.2" r="1.1" fill="#49803f"/>
<circle cx="204.6" cy="83.1" r="3.6" fill="#5cb03c"/>
<circle cx="203.7" cy="82.0" r="2.0" fill="#74bb59"/>
<circle cx="73.6" cy="59.5" r="2.1" fill="#44962e"/>
<circle cx="73.0" cy="58.9" r="1.1" fill="#60a54d"/>
<circle cx="130.6" cy="94.5" r="3.7" fill="#4ea034"/>
<circle cx="129.6" cy="93.3" r="2.1" fill="#68ae52"/>
<circle cx="148.0" cy="71.7" r="2.0" fill="#3a8a28"/>
<circle cx="147.5" cy="71.1" r="1.1" fill="#579b48"/>
<circle cx="363.4" cy="59.3" r="2.2" fill="#44962e"/>
<circle cx="362.8" cy="58.6" r="1.2" fill="#60a54d"/>
<circle cx="438.0" cy="60.0" r="2.4" fill="#2f7422"/>
<circle cx="437.5" cy="59.3" r="1.3" fill="#4e8843"/>
<circle cx="305.9" cy="93.9" r="2.0" fill="#5cb03c"/>
<circle cx="305.4" cy="93.3" r="1.1" fill="#74bb59"/>
<circle cx="302.8" cy="95.7" r="2.2" fill="#3a8a28"/>
<circle cx="302.3" cy="95.1" r="1.2" fill="#579b48"/>
<circle cx="121.8" cy="64.7" r="2.6" fill="#2a6a1e"/>
<circle cx="121.1" cy="64.0" r="1.4" fill="#49803f"/>
<circle cx="56.4" cy="84.8" r="3.5" fill="#5cb03c"/>
<circle cx="55.6" cy="83.7" r="1.9" fill="#74bb59"/>
<circle cx="403.5" cy="62.9" r="4.0" fill="#2f7422"/>
<circle cx="402.5" cy="61.7" r="2.2" fill="#4e8843"/>
<circle cx="27.9" cy="59.4" r="3.9" fill="#3a8a28"/>
<circle cx="26.9" cy="58.3" r="2.1" fill="#579b48"/>
<circle cx="306.4" cy="99.2" r="2.1" fill="#5cb03c"/>
<circle cx="305.9" cy="98.5" r="1.2" fill="#74bb59"/>
<circle cx="271.1" cy="85.5" r="3.5" fill="#2f7422"/>
<circle cx="270.2" cy="84.5" r="1.9" fill="#4e8843"/>
<circle cx="233.8" cy="99.8" r="3.6" fill="#2f7422"/>
<circle cx="232.9" cy="98.7" r="2.0" fill="#4e8843"/>
<circle cx="5.5" cy="59.5" r="2.9" fill="#3a8a28"/>
<circle cx="4.8" cy="58.6" r="1.6" fill="#579b48"/>
<circle cx="18.2" cy="75.8" r="2.8" fill="#4ea034"/>
<circle cx="17.5" cy="75.0" r="1.5" fill="#68ae52"/>
<circle cx="184.3" cy="89.9" r="2.1" fill="#5cb03c"/>
<circle cx="183.8" cy="89.3" r="1.2" fill="#74bb59"/>
<circle cx="76.0" cy="79.6" r="3.5" fill="#2f7422"/>
<circle cx="75.1" cy="78.6" r="1.9" fill="#4e8843"/>
<circle cx="219.5" cy="77.0" r="3.8" fill="#2a6a1e"/>
<circle cx="218.5" cy="75.9" r="2.1" fill="#49803f"/>
<circle cx="50.2" cy="86.0" r="3.9" fill="#2a6a1e"/>
<circle cx="49.2" cy="84.9" r="2.1" fill="#49803f"/>
<circle cx="255.1" cy="86.2" r="2.0" fill="#3a8a28"/>
<circle cx="254.6" cy="85.6" r="1.1" fill="#579b48"/>
<circle cx="360.9" cy="66.6" r="2.0" fill="#44962e"/>
<circle cx="360.4" cy="66.0" r="1.1" fill="#60a54d"/>
<circle cx="150.3" cy="88.8" r="3.2" fill="#2a6a1e"/>
<circle cx="149.5" cy="87.9" r="1.8" fill="#49803f"/>
<circle cx="115.5" cy="92.3" r="3.9" fill="#3a8a28"/>
<circle cx="114.5" cy="91.1" r="2.2" fill="#579b48"/>
<circle cx="51.0" cy="93.9" r="2.6" fill="#4ea034"/>
<circle cx="50.3" cy="93.1" r="1.4" fill="#68ae52"/>
<circle cx="428.7" cy="98.2" r="2.5" fill="#44962e"/>
<circle cx="428.1" cy="97.4" r="1.4" fill="#60a54d"/>
<circle cx="41.3" cy="63.9" r="3.1" fill="#2f7422"/>
<circle cx="40.5" cy="63.0" r="1.7" fill="#4e8843"/>
<circle cx="17.8" cy="83.1" r="1.8" fill="#2a6a1e"/>
<circle cx="17.4" cy="82.6" r="1.0" fill="#49803f"/>
<circle cx="345.4" cy="73.1" r="3.1" fill="#2a6a1e"/>
<circle cx="344.6" cy="72.2" r="1.7" fill="#49803f"/>
<circle cx="274.4" cy="97.6" r="2.7" fill="#44962e"/>
<circle cx="273.7" cy="96.7" r="1.5" fill="#60a54d"/>
<circle cx="326.6" cy="67.8" r="2.2" fill="#44962e"/>
<circle cx="326.0" cy="67.2" r="1.2" fill="#60a54d"/>
<circle cx="8.7" cy="88.7" r="2.3" fill="#2a6a1e"/>
<circle cx="8.2" cy="88.0" r="1.3" fill="#49803f"/>
<circle cx="364.3" cy="61.7" r="2.2" fill="#2f7422"/>
<circle cx="363.8" cy="61.1" r="1.2" fill="#4e8843"/>
<circle cx="179.2" cy="90.9" r="2.8" fill="#4ea034"/>
<circle cx="178.5" cy="90.1" r="1.5" fill="#68ae52"/>
<circle cx="155.5" cy="67.5" r="2.7" fill="#2f7422"/>
<circle cx="154.8" cy="66.7" r="1.5" fill="#4e8843"/>
<circle cx="164.9" cy="62.7" r="2.7" fill="#4ea034"/>
<circle cx="164.2" cy="61.9" r="1.5" fill="#68ae52"/>
<circle cx="152.8" cy="98.0" r="2.6" fill="#5cb03c"/>
<circle cx="152.1" cy="97.2" r="1.4" fill="#74bb59"/>
<circle cx="409.5" cy="91.9" r="3.9" fill="#44962e"/>
<circle cx="408.5" cy="90.7" r="2.2" fill="#60a54d"/>
<circle cx="182.9" cy="76.4" r="2.1" fill="#44962e"/>
<circle cx="182.3" cy="75.8" r="1.1" fill="#60a54d"/>
<circle cx="315.4" cy="82.7" r="2.0" fill="#4ea034"/>
<circle cx="314.9" cy="82.1" r="1.1" fill="#68ae52"/>
<circle cx="24.2" cy="76.5" r="2.9" fill="#4ea034"/>
<circle cx="23.5" cy="75.7" r="1.6" fill="#68ae52"/>
<circle cx="293.2" cy="96.5" r="2.2" fill="#5cb03c"/>
<circle cx="292.6" cy="95.8" r="1.2" fill="#74bb59"/>
<circle cx="325.9" cy="88.9" r="3.1" fill="#2a6a1e"/>
<circle cx="325.1" cy="88.0" r="1.7" fill="#49803f"/>
<circle cx="273.4" cy="58.2" r="2.2" fill="#5cb03c"/>
<circle cx="272.8" cy="57.5" r="1.2" fill="#74bb59"/>
<circle cx="67.0" cy="84.4" r="2.7" fill="#5cb03c"/>
<circle cx="66.3" cy="83.6" r="1.5" fill="#74bb59"/>
<circle cx="106.2" cy="71.8" r="1.9" fill="#4ea034"/>
<circle cx="105.7" cy="71.2" r="1.0" fill="#68ae52"/>
<circle cx="241.8" cy="61.4" r="2.5" fill="#5cb03c"/>
<circle cx="241.1" cy="60.6" r="1.4" fill="#74bb59"/>
<circle cx="112.4" cy="82.4" r="2.2" fill="#2a6a1e"/>
<circle cx="111.9" cy="81.7" r="1.2" fill="#49803f"/>
<circle cx="381.7" cy="89.5" r="2.1" fill="#5cb03c"/>
<circle cx="381.2" cy="88.9" r="1.2" fill="#74bb59"/>
<circle cx="44.1" cy="91.2" r="3.1" fill="#44962e"/>
<circle cx="43.4" cy="90.3" r="1.7" fill="#60a54d"/>
<circle cx="403.3" cy="64.5" r="3.5" fill="#5cb03c"/>
<circle cx="402.4" cy="63.5" r="1.9" fill="#74bb59"/>
<circle cx="305.8" cy="84.2" r="3.7" fill="#44962e"/>
<circle cx="304.9" cy="83.1" r="2.0" fill="#60a54d"/>
<circle cx="247.1" cy="80.8" r="2.4" fill="#2a6a1e"/>
<circle cx="246.5" cy="80.1" r="1.3" fill="#49803f"/>
<circle cx="65.4" cy="76.8" r="3.7" fill="#44962e"/>
<circle cx="64.4" cy="75.7" r="2.0" fill="#60a54d"/>
<circle cx="114.4" cy="96.3" r="3.0" fill="#2f7422"/>
<circle cx="113.7" cy="95.5" r="1.6" fill="#4e8843"/>
<circle cx="82.8" cy="86.8" r="3.7" fill="#44962e"/>
<circle cx="81.8" cy="85.7" r="2.0" fill="#60a54d"/>
<circle cx="308.3" cy="98.0" r="3.2" fill="#4ea034"/>
<circle cx="307.5" cy="97.0" r="1.8" fill="#68ae52"/>
<circle cx="288.4" cy="92.7" r="3.8" fill="#2f7422"/>
<circle cx="287.5" cy="91.6" r="2.1" fill="#4e8843"/>
<circle cx="414.2" cy="91.5" r="2.8" fill="#3a8a28"/>
<circle cx="413.5" cy="90.7" r="1.6" fill="#579b48"/>
<circle cx="250.0" cy="96.5" r="2.0" fill="#2a6a1e"/>
<circle cx="249.5" cy="95.9" r="1.1" fill="#49803f"/>
<circle cx="354.3" cy="96.0" r="3.5" fill="#5cb03c"/>
<circle cx="353.4" cy="94.9" r="1.9" fill="#74bb59"/>
<circle cx="342.0" cy="80.3" r="2.8" fill="#2f7422"/>
<circle cx="341.3" cy="79.5" r="1.5" fill="#4e8843"/>
<circle cx="173.1" cy="59.3" r="2.5" fill="#44962e"/>
<circle cx="172.5" cy="58.6" r="1.4" fill="#60a54d"/>
<circle cx="239.2" cy="62.7" r="4.0" fill="#2a6a1e"/>
<circle cx="238.2" cy="61.5" r="2.2" fill="#49803f"/>
<circle cx="198.5" cy="93.0" r="2.8" fill="#2a6a1e"/>
<circle cx="197.8" cy="92.2" r="1.5" fill="#49803f"/>
<circle cx="347.1" cy="95.6" r="2.7" fill="#44962e"/>
<circle cx="346.5" cy="94.7" r="1.5" fill="#60a54d"/>
<circle cx="217.8" cy="59.0" r="2.2" fill="#2f7422"/>
<circle cx="217.2" cy="58.3" r="1.2" fill="#4e8843"/>
<circle cx="103.3" cy="65.3" r="2.6" fill="#2f7422"/>
<circle cx="102.7" cy="64.5" r="1.4" fill="#4e8843"/>
<circle cx="145.2" cy="90.9" r="2.6" fill="#2a6a1e"/>
<circle cx="144.6" cy="90.2" r="1.4" fill="#49803f"/>
<circle cx="307.3" cy="63.0" r="3.3" fill="#3a8a28"/>
<circle cx="306.4" cy="62.1" r="1.8" fill="#579b48"/>
<circle cx="234.3" cy="84.3" r="3.7" fill="#5cb03c"/>
<circle cx="233.4" cy="83.1" r="2.0" fill="#74bb59"/>
<circle cx="226.9" cy="94.0" r="2.1" fill="#2f7422"/>
<circle cx="226.4" cy="93.3" r="1.2" fill="#4e8843"/>
<circle cx="249.1" cy="65.2" r="3.2" fill="#5cb03c"/>
<circle cx="248.3" cy="64.3" r="1.7" fill="#74bb59"/>
<circle cx="139.0" cy="86.3" r="1.9" fill="#2f7422"/>
<circle cx="138.6" cy="85.7" r="1.1" fill="#4e8843"/>
<circle cx="422.7" cy="70.3" r="2.9" fill="#5cb03c"/>
<circle cx="422.0" cy="69.5" r="1.6" fill="#74bb59"/>
<circle cx="115.5" cy="68.7" r="3.4" fill="#5cb03c"/>
<circle cx="114.6" cy="67.7" r="1.9" fill="#74bb59"/>
<circle cx="46.8" cy="64.9" r="3.0" fill="#4ea034"/>
<circle cx="46.0" cy="64.0" r="1.6" fill="#68ae52"/>
<circle cx="85.3" cy="65.0" r="1.9" fill="#2a6a1e"/>
<circle cx="84.8" cy="64.4" r="1.1" fill="#49803f"/>
<circle cx="342.3" cy="83.6" r="3.7" fill="#3a8a28"/>
<circle cx="341.4" cy="82.5" r="2.1" fill="#579b48"/>
<circle cx="434.8" cy="89.4" r="3.9" fill="#4ea034"/>
<circle cx="433.8" cy="88.2" r="2.1" fill="#68ae52"/>
<circle cx="229.6" cy="66.4" r="3.5" fill="#4ea034"/>
<circle cx="228.7" cy="65.4" r="1.9" fill="#68ae52"/>
<circle cx="38.9" cy="78.8" r="2.2" fill="#2f7422"/>
<circle cx="38.4" cy="78.1" r="1.2" fill="#4e8843"/>
<circle cx="276.7" cy="74.6" r="2.1" fill="#4ea034"/>
<circle cx="276.2" cy="74.0" r="1.1" fill="#68ae52"/>
<circle cx="311.9" cy="62.1" r="2.3" fill="#4ea034"/>
<circle cx="311.3" cy="61.5" r="1.3" fill="#68ae52"/>
<circle cx="325.5" cy="81.6" r="3.7" fill="#2f7422"/>
<circle cx="324.5" cy="80.5" r="2.0" fill="#4e8843"/>
<circle cx="226.0" cy="72.5" r="2.9" fill="#4ea034"/>
<circle cx="225.3" cy="71.6" r="1.6" fill="#68ae52"/>
<circle cx="313.9" cy="89.7" r="3.7" fill="#2f7422"/>
<circle cx="313.0" cy="88.6" r="2.0" fill="#4e8843"/>
<circle cx="5.0" cy="73.9" r="2.5" fill="#3a8a28"/>
<circle cx="4.3" cy="73.1" r="1.4" fill="#579b48"/>
<circle cx="304.5" cy="70.8" r="2.1" fill="#5cb03c"/>
<circle cx="304.0" cy="70.2" r="1.2" fill="#74bb59"/>
<circle cx="260.7" cy="66.7" r="3.2" fill="#2f7422"/>
<circle cx="259.9" cy="65.7" r="1.8" fill="#4e8843"/>
<circle cx="157.9" cy="71.5" r="2.1" fill="#5cb03c"/>
<circle cx="157.3" cy="70.9" r="1.2" fill="#74bb59"/>
<circle cx="44.6" cy="99.4" r="2.0" fill="#2a6a1e"/>
<circle cx="44.1" cy="98.8" r="1.1" fill="#49803f"/>
<circle cx="302.8" cy="88.9" r="2.0" fill="#2a6a1e"/>
<circle cx="302.3" cy="88.3" r="1.1" fill="#49803f"/>
<circle cx="335.9" cy="90.0" r="3.7" fill="#2a6a1e"/>
<circle cx="335.0" cy="88.9" r="2.0" fill="#49803f"/>
<circle cx="396.3" cy="61.3" r="1.8" fill="#44962e"/>
<circle cx="395.9" cy="60.8" r="1.0" fill="#60a54d"/>
<circle cx="257.0" cy="60.2" r="2.5" fill="#2f7422"/>
<circle cx="256.4" cy="59.5" r="1.4" fill="#4e8843"/>
<circle cx="152.2" cy="89.8" r="2.5" fill="#2a6a1e"/>
<circle cx="151.5" cy="89.0" r="1.4" fill="#49803f"/>
<circle cx="-1.3" cy="58.9" r="3.8" fill="#2f7422"/>
<circle cx="-2.3" cy="57.8" r="2.1" fill="#4e8843"/>
<circle cx="27.9" cy="77.6" r="2.2" fill="#44962e"/>
<circle cx="27.3" cy="76.9" r="1.2" fill="#60a54d"/>
<circle cx="236.8" cy="59.1" r="3.0" fill="#2a6a1e"/>
<circle cx="236.1" cy="58.2" r="1.6" fill="#49803f"/>
<circle cx="15.6" cy="92.6" r="3.1" fill="#4ea034"/>
<circle cx="14.8" cy="91.7" r="1.7" fill="#68ae52"/>
<circle cx="169.1" cy="89.2" r="2.4" fill="#3a8a28"/>
<circle cx="168.5" cy="88.4" r="1.3" fill="#579b48"/>
<circle cx="79.4" cy="77.5" r="3.8" fill="#2a6a1e"/>
<circle cx="78.5" cy="76.4" r="2.1" fill="#49803f"/>
<circle cx="52.2" cy="96.2" r="3.8" fill="#3a8a28"/>
<circle cx="51.2" cy="95.1" r="2.1" fill="#579b48"/>
<circle cx="329.4" cy="72.7" r="3.6" fill="#2a6a1e"/>
<circle cx="328.4" cy="71.6" r="2.0" fill="#49803f"/>
<circle cx="326.8" cy="64.2" r="2.0" fill="#2a6a1e"/>
<circle cx="326.3" cy="63.6" r="1.1" fill="#49803f"/>
<circle cx="403.2" cy="74.7" r="3.9" fill="#2a6a1e"/>
<circle cx="402.2" cy="73.5" r="2.2" fill="#49803f"/>
<circle cx="78.0" cy="60.2" r="2.4" fill="#5cb03c"/>
<circle cx="77.4" cy="59.4" r="1.3" fill="#74bb59"/>
<circle cx="292.7" cy="75.7" r="3.1" fill="#5cb03c"/>
<circle cx="292.0" cy="74.7" r="1.7" fill="#74bb59"/>
<circle cx="177.9" cy="70.9" r="3.4" fill="#5cb03c"/>
<circle cx="177.0" cy="69.9" r="1.8" fill="#74bb59"/>
<circle cx="355.1" cy="75.5" r="2.1" fill="#3a8a28"/>
<circle cx="354.6" cy="74.8" r="1.2" fill="#579b48"/>
<circle cx="406.9" cy="61.6" r="3.8" fill="#4ea034"/>
<circle cx="406.0" cy="60.5" r="2.1" fill="#68ae52"/>
<circle cx="431.3" cy="97.8" r="2.9" fill="#3a8a28"/>
<circle cx="430.5" cy="97.0" r="1.6" fill="#579b48"/>
<circle cx="46.3" cy="84.7" r="3.9" fill="#4ea034"/>
<circle cx="45.3" cy="83.5" r="2.2" fill="#68ae52"/>
<circle cx="363.3" cy="63.8" r="2.5" fill="#4ea034"/>
<circle cx="362.7" cy="63.1" r="1.4" fill="#68ae52"/>
<circle cx="396.5" cy="68.8" r="3.1" fill="#3a8a28"/>
<circle cx="395.7" cy="67.9" r="1.7" fill="#579b48"/>
<circle cx="112.7" cy="81.2" r="3.1" fill="#44962e"/>
<circle cx="111.9" cy="80.2" r="1.7" fill="#60a54d"/>
<circle cx="195.1" cy="62.1" r="2.0" fill="#4ea034"/>
<circle cx="194.6" cy="61.5" r="1.1" fill="#68ae52"/>
<circle cx="111.4" cy="94.0" r="1.9" fill="#5cb03c"/>
<circle cx="111.0" cy="93.5" r="1.0" fill="#74bb59"/>
<circle cx="81.1" cy="58.8" r="3.4" fill="#5cb03c"/>
<circle cx="80.3" cy="57.8" r="1.9" fill="#74bb59"/>
<circle cx="244.8" cy="84.1" r="3.1" fill="#3a8a28"/>
<circle cx="244.1" cy="83.2" r="1.7" fill="#579b48"/>
<circle cx="282.4" cy="63.8" r="3.7" fill="#3a8a28"/>
<circle cx="281.5" cy="62.7" r="2.0" fill="#579b48"/>
<circle cx="31.6" cy="84.1" r="3.8" fill="#2a6a1e"/>
<circle cx="30.6" cy="82.9" r="2.1" fill="#49803f"/>
<circle cx="418.7" cy="76.1" r="3.1" fill="#2f7422"/>
<circle cx="417.9" cy="75.1" r="1.7" fill="#4e8843"/>
<circle cx="77.0" cy="77.0" r="2.0" fill="#5cb03c"/>
<circle cx="76.5" cy="76.4" r="1.1" fill="#74bb59"/>
<circle cx="371.3" cy="91.6" r="3.8" fill="#4ea034"/>
<circle cx="370.3" cy="90.5" r="2.1" fill="#68ae52"/>
<circle cx="108.3" cy="92.1" r="2.0" fill="#3a8a28"/>
<circle cx="107.8" cy="91.5" r="1.1" fill="#579b48"/>
<circle cx="402.3" cy="78.0" r="3.0" fill="#3a8a28"/>
<circle cx="401.6" cy="77.1" r="1.6" fill="#579b48"/>
<circle cx="303.9" cy="75.0" r="3.8" fill="#5cb03c"/>
<circle cx="302.9" cy="73.8" r="2.1" fill="#74bb59"/>
<circle cx="100.3" cy="72.9" r="3.7" fill="#3a8a28"/>
<circle cx="99.4" cy="71.8" r="2.0" fill="#579b48"/>
<circle cx="341.7" cy="82.8" r="3.1" fill="#5cb03c"/>
<circle cx="340.9" cy="81.9" r="1.7" fill="#74bb59"/>
<circle cx="264.4" cy="92.8" r="2.7" fill="#5cb03c"/>
<circle cx="263.8" cy="92.0" r="1.5" fill="#74bb59"/>
<circle cx="187.3" cy="99.3" r="2.2" fill="#44962e"/>
<circle cx="186.8" cy="98.6" r="1.2" fill="#60a54d"/>
<circle cx="243.5" cy="61.2" r="3.0" fill="#4ea034"/>
<circle cx="242.8" cy="60.3" r="1.7" fill="#68ae52"/>
<circle cx="424.9" cy="88.9" r="3.7" fill="#44962e"/>
<circle cx="424.0" cy="87.8" r="2.0" fill="#60a54d"/>
<circle cx="399.8" cy="60.1" r="3.7" fill="#4ea034"/>
<circle cx="398.8" cy="59.0" r="2.1" fill="#68ae52"/>
<circle cx="62.3" cy="60.5" r="2.8" fill="#3a8a28"/>
<circle cx="61.6" cy="59.6" r="1.6" fill="#579b48"/>
<circle cx="94.4" cy="91.5" r="3.0" fill="#2f7422"/>
<circle cx="93.7" cy="90.6" r="1.7" fill="#4e8843"/>
<circle cx="262.2" cy="65.9" r="3.3" fill="#44962e"/>
<circle cx="261.4" cy="65.0" r="1.8" fill="#60a54d"/>
<circle cx="211.5" cy="93.3" r="2.3" fill="#2a6a1e"/>
<circle cx="211.0" cy="92.6" r="1.3" fill="#49803f"/>
<circle cx="437.3" cy="58.8" r="3.3" fill="#2f7422"/>
<circle cx="436.5" cy="57.8" r="1.8" fill="#4e8843"/>
<circle cx="319.7" cy="79.0" r="3.0" fill="#44962e"/>
<circle cx="318.9" cy="78.1" r="1.6" fill="#60a54d"/>
<circle cx="275.1" cy="62.6" r="3.7" fill="#3a8a28"/>
<circle cx="274.1" cy="61.5" r="2.0" fill="#579b48"/>
<circle cx="235.5" cy="97.6" r="2.6" fill="#3a8a28"/>
<circle cx="234.8" cy="96.9" r="1.4" fill="#579b48"/>
<circle cx="382.0" cy="67.0" r="2.6" fill="#4ea034"/>
<circle cx="381.4" cy="66.2" r="1.4" fill="#68ae52"/>
<circle cx="40.1" cy="67.0" r="3.6" fill="#4ea034"/>
<circle cx="39.2" cy="65.9" r="2.0" fill="#68ae52"/>
<circle cx="196.2" cy="90.6" r="3.5" fill="#2f7422"/>
<circle cx="195.3" cy="89.5" r="1.9" fill="#4e8843"/>
<circle cx="338.1" cy="94.9" r="2.7" fill="#5cb03c"/>
<circle cx="337.4" cy="94.1" r="1.5" fill="#74bb59"/>
<circle cx="179.3" cy="84.1" r="3.6" fill="#4ea034"/>
<circle cx="178.4" cy="83.0" r="2.0" fill="#68ae52"/>
<circle cx="362.6" cy="90.2" r="2.9" fill="#2f7422"/>
<circle cx="361.8" cy="89.3" r="1.6" fill="#4e8843"/>
<circle cx="92.6" cy="78.2" r="2.2" fill="#2f7422"/>
<circle cx="92.0" cy="77.6" r="1.2" fill="#4e8843"/>
<circle cx="281.0" cy="65.6" r="2.3" fill="#5cb03c"/>
<circle cx="280.4" cy="64.9" r="1.3" fill="#74bb59"/>
<circle cx="320.7" cy="75.9" r="3.8" fill="#44962e"/>
<circle cx="319.8" cy="74.8" r="2.1" fill="#60a54d"/>
<circle cx="350.6" cy="88.8" r="3.4" fill="#3a8a28"/>
<circle cx="349.8" cy="87.7" r="1.9" fill="#579b48"/>
<circle cx="91.5" cy="85.3" r="3.9" fill="#2a6a1e"/>
<circle cx="90.5" cy="84.1" r="2.2" fill="#49803f"/>
<circle cx="267.4" cy="87.5" r="3.7" fill="#2a6a1e"/>
<circle cx="266.4" cy="86.4" r="2.0" fill="#49803f"/>
<circle cx="353.5" cy="58.9" r="3.9" fill="#44962e"/>
<circle cx="352.5" cy="57.7" r="2.2" fill="#60a54d"/>
<circle cx="433.5" cy="77.7" r="3.2" fill="#5cb03c"/>
<circle cx="432.7" cy="76.8" r="1.8" fill="#74bb59"/>
<circle cx="243.3" cy="84.7" r="3.6" fill="#3a8a28"/>
<circle cx="242.4" cy="83.6" r="2.0" fill="#579b48"/>
<circle cx="352.5" cy="97.4" r="2.4" fill="#2f7422"/>
<circle cx="351.9" cy="96.7" r="1.3" fill="#4e8843"/>
<circle cx="3.1" cy="70.3" r="4.0" fill="#5cb03c"/>
<circle cx="2.1" cy="69.1" r="2.2" fill="#74bb59"/>
<circle cx="238.5" cy="69.5" r="2.8" fill="#2f7422"/>
<circle cx="237.8" cy="68.6" r="1.5" fill="#4e8843"/>
<circle cx="389.5" cy="72.4" r="2.3" fill="#3a8a28"/>
<circle cx="388.9" cy="71.7" r="1.3" fill="#579b48"/>
<circle cx="114.0" cy="90.5" r="3.3" fill="#2a6a1e"/>
<circle cx="113.1" cy="89.5" r="1.8" fill="#49803f"/>
<circle cx="424.8" cy="96.0" r="2.5" fill="#2f7422"/>
<circle cx="424.2" cy="95.2" r="1.4" fill="#4e8843"/>
<circle cx="412.5" cy="61.5" r="2.6" fill="#4ea034"/>
<circle cx="411.9" cy="60.8" r="1.4" fill="#68ae52"/>
<circle cx="58.5" cy="90.2" r="3.9" fill="#44962e"/>
<circle cx="57.5" cy="89.0" r="2.1" fill="#60a54d"/>
<circle cx="145.0" cy="77.8" r="2.5" fill="#5cb03c"/>
<circle cx="144.4" cy="77.1" r="1.4" fill="#74bb59"/>
<circle cx="57.9" cy="77.3" r="2.2" fill="#2a6a1e"/>
<circle cx="57.3" cy="76.6" r="1.2" fill="#49803f"/>
<circle cx="228.4" cy="85.5" r="3.1" fill="#2a6a1e"/>
<circle cx="227.7" cy="84.6" r="1.7" fill="#49803f"/>
<circle cx="424.2" cy="71.1" r="3.1" fill="#44962e"/>
<circle cx="423.5" cy="70.2" r="1.7" fill="#60a54d"/>
<circle cx="187.5" cy="89.5" r="2.9" fill="#2f7422"/>
<circle cx="186.8" cy="88.6" r="1.6" fill="#4e8843"/>
<circle cx="299.6" cy="60.8" r="3.6" fill="#3a8a28"/>
<circle cx="298.7" cy="59.7" r="2.0" fill="#579b48"/>
<circle cx="218.9" cy="96.5" r="3.7" fill="#44962e"/>
<circle cx="217.9" cy="95.4" r="2.0" fill="#60a54d"/>
<circle cx="41.4" cy="91.9" r="2.3" fill="#2f7422"/>
<circle cx="40.8" cy="91.2" r="1.2" fill="#4e8843"/>
<circle cx="361.1" cy="80.2" r="3.1" fill="#44962e"/>
<circle cx="360.3" cy="79.2" r="1.7" fill="#60a54d"/>
<circle cx="20.6" cy="96.4" r="3.3" fill="#5cb03c"/>
<circle cx="19.8" cy="95.4" r="1.8" fill="#74bb59"/>
<circle cx="321.9" cy="86.5" r="3.8" fill="#3a8a28"/>
<circle cx="320.9" cy="85.4" r="2.1" fill="#579b48"/>
<circle cx="186.8" cy="94.4" r="1.9" fill="#44962e"/>
<circle cx="186.3" cy="93.9" r="1.1" fill="#60a54d"/>
<circle cx="151.9" cy="91.4" r="3.8" fill="#44962e"/>
<circle cx="151.0" cy="90.3" r="2.1" fill="#60a54d"/>
<circle cx="409.3" cy="65.2" r="3.6" fill="#44962e"/>
<circle cx="408.5" cy="64.1" r="2.0" fill="#60a54d"/>
<circle cx="160.4" cy="76.4" r="1.9" fill="#2f7422"/>
<circle cx="159.9" cy="75.9" r="1.0" fill="#4e8843"/>
<circle cx="311.6" cy="63.6" r="3.4" fill="#44962e"/>
<circle cx="310.7" cy="62.6" r="1.9" fill="#60a54d"/>
<circle cx="160.0" cy="85.4" r="3.7" fill="#2f7422"/>
<circle cx="159.1" cy="84.3" r="2.0" fill="#4e8843"/>
<circle cx="334.3" cy="93.5" r="2.4" fill="#4ea034"/>
<circle cx="333.7" cy="92.8" r="1.3" fill="#68ae52"/>
<circle cx="8.9" cy="62.4" r="2.3" fill="#4ea034"/>
<circle cx="8.3" cy="61.7" r="1.2" fill="#68ae52"/>
<circle cx="254.9" cy="91.7" r="3.5" fill="#4ea034"/>
<circle cx="254.0" cy="90.6" r="1.9" fill="#68ae52"/>
<circle cx="55.7" cy="88.1" r="3.8" fill="#2a6a1e"/>
<circle cx="54.8" cy="87.0" r="2.1" fill="#49803f"/>
<circle cx="247.4" cy="77.2" r="2.1" fill="#4ea034"/>
<circle cx="246.8" cy="76.6" r="1.1" fill="#68ae52"/>
<circle cx="425.7" cy="70.0" r="2.6" fill="#2f7422"/>
<circle cx="425.1" cy="69.2" r="1.4" fill="#4e8843"/>
<circle cx="394.8" cy="91.9" r="3.3" fill="#2f7422"/>
<circle cx="393.9" cy="90.9" r="1.8" fill="#4e8843"/>
<circle cx="109.4" cy="78.5" r="3.8" fill="#2f7422"/>
<circle cx="108.5" cy="77.4" r="2.1" fill="#4e8843"/>
<circle cx="147.6" cy="73.5" r="1.9" fill="#44962e"/>
<circle cx="147.1" cy="72.9" r="1.1" fill="#60a54d"/>
<circle cx="347.5" cy="96.4" r="4.0" fill="#2f7422"/>
<circle cx="346.5" cy="95.2" r="2.2" fill="#4e8843"/>
<circle cx="330.5" cy="77.2" r="3.9" fill="#3a8a28"/>
<circle cx="329.5" cy="76.0" r="2.2" fill="#579b48"/>
<circle cx="167.8" cy="95.9" r="3.6" fill="#44962e"/>
<circle cx="166.9" cy="94.8" r="2.0" fill="#60a54d"/>
<circle cx="48.7" cy="76.4" r="2.7" fill="#2f7422"/>
<circle cx="48.0" cy="75.6" r="1.5" fill="#4e8843"/>
<circle cx="59.3" cy="61.7" r="1.9" fill="#5cb03c"/>
<circle cx="58.8" cy="61.1" r="1.1" fill="#74bb59"/>
<circle cx="286.3" cy="97.3" r="2.1" fill="#3a8a28"/>
<circle cx="285.8" cy="96.7" r="1.1" fill="#579b48"/>
<circle cx="190.6" cy="96.5" r="3.8" fill="#2a6a1e"/>
<circle cx="189.6" cy="95.4" r="2.1" fill="#49803f"/>
<circle cx="220.7" cy="85.8" r="3.2" fill="#5cb03c"/>
<circle cx="219.9" cy="84.9" r="1.8" fill="#74bb59"/>
<circle cx="407.8" cy="64.3" r="2.2" fill="#5cb03c"/>
<circle cx="407.2" cy="63.7" r="1.2" fill="#74bb59"/>
<circle cx="286.3" cy="80.0" r="2.6" fill="#5cb03c"/>
<circle cx="285.6" cy="79.3" r="1.4" fill="#74bb59"/>
<circle cx="-3.7" cy="81.4" r="3.5" fill="#3a8a28"/>
<circle cx="-4.5" cy="80.3" r="1.9" fill="#579b48"/>
<circle cx="235.9" cy="79.0" r="3.1" fill="#4ea034"/>
<circle cx="235.1" cy="78.1" r="1.7" fill="#68ae52"/>
<circle cx="160.7" cy="84.4" r="2.4" fill="#3a8a28"/>
<circle cx="160.2" cy="83.7" r="1.3" fill="#579b48"/>
<circle cx="33.0" cy="78.4" r="2.5" fill="#4ea034"/>
<circle cx="32.3" cy="77.6" r="1.4" fill="#68ae52"/>
<circle cx="130.7" cy="66.1" r="3.6" fill="#5cb03c"/>
<circle cx="129.8" cy="65.0" r="2.0" fill="#74bb59"/>
<circle cx="74.8" cy="74.9" r="3.7" fill="#44962e"/>
<circle cx="73.8" cy="73.8" r="2.0" fill="#60a54d"/>
<circle cx="302.1" cy="73.6" r="3.6" fill="#44962e"/>
<circle cx="301.2" cy="72.5" r="2.0" fill="#60a54d"/>
<circle cx="421.1" cy="82.7" r="3.6" fill="#4ea034"/>
<circle cx="420.3" cy="81.6" r="2.0" fill="#68ae52"/>
<circle cx="20.1" cy="60.0" r="2.8" fill="#5cb03c"/>
<circle cx="19.4" cy="59.1" r="1.6" fill="#74bb59"/>
<circle cx="241.1" cy="97.9" r="3.1" fill="#3a8a28"/>
<circle cx="240.3" cy="97.0" r="1.7" fill="#579b48"/>
<circle cx="176.9" cy="72.5" r="2.3" fill="#44962e"/>
<circle cx="176.4" cy="71.9" r="1.2" fill="#60a54d"/>
<circle cx="420.9" cy="79.6" r="3.2" fill="#44962e"/>
<circle cx="420.1" cy="78.6" r="1.8" fill="#60a54d"/>
<circle cx="242.7" cy="87.5" r="3.3" fill="#3a8a28"/>
<circle cx="241.9" cy="86.5" r="1.8" fill="#579b48"/>
<circle cx="298.0" cy="66.2" r="1.8" fill="#2a6a1e"/>
<circle cx="297.6" cy="65.6" r="1.0" fill="#49803f"/>
<circle cx="277.7" cy="57.3" r="3.1" fill="#3a8a28"/>
<circle cx="276.9" cy="56.4" r="1.7" fill="#579b48"/>
<circle cx="12.6" cy="88.7" r="3.3" fill="#5cb03c"/>
<circle cx="11.8" cy="87.7" r="1.8" fill="#74bb59"/>
<circle cx="205.9" cy="96.6" r="2.7" fill="#3a8a28"/>
<circle cx="205.2" cy="95.7" r="1.5" fill="#579b48"/>
<circle cx="73.2" cy="81.0" r="2.4" fill="#4ea034"/>
<circle cx="72.6" cy="80.3" r="1.3" fill="#68ae52"/>
<circle cx="97.6" cy="60.9" r="3.2" fill="#2f7422"/>
<circle cx="96.8" cy="60.0" r="1.8" fill="#4e8843"/>
<circle cx="65.0" cy="84.6" r="3.2" fill="#2f7422"/>
<circle cx="64.2" cy="83.7" r="1.8" fill="#4e8843"/>
<circle cx="319.3" cy="75.6" r="1.8" fill="#2f7422"/>
<circle cx="318.8" cy="75.0" r="1.0" fill="#4e8843"/>
<circle cx="242.1" cy="72.4" r="3.4" fill="#5cb03c"/>
<circle cx="241.2" cy="71.3" r="1.8" fill="#74bb59"/>
<circle cx="249.8" cy="86.7" r="3.1" fill="#4ea034"/>
<circle cx="249.0" cy="85.8" r="1.7" fill="#68ae52"/>
<circle cx="304.8" cy="80.5" r="3.3" fill="#4ea034"/>
<circle cx="304.0" cy="79.5" r="1.8" fill="#68ae52"/>
<circle cx="118.5" cy="65.6" r="2.9" fill="#2f7422"/>
<circle cx="117.8" cy="64.7" r="1.6" fill="#4e8843"/>
<circle cx="375.9" cy="57.8" r="2.2" fill="#3a8a28"/>
<circle cx="375.4" cy="57.1" r="1.2" fill="#579b48"/>
<circle cx="291.6" cy="65.7" r="2.1" fill="#2a6a1e"/>
<circle cx="291.0" cy="65.0" r="1.2" fill="#49803f"/>
<circle cx="92.0" cy="83.2" r="2.8" fill="#2a6a1e"/>
<circle cx="91.3" cy="82.3" r="1.6" fill="#49803f"/>
<circle cx="329.4" cy="60.6" r="3.5" fill="#5cb03c"/>
<circle cx="328.5" cy="59.6" r="1.9" fill="#74bb59"/>
<circle cx="4.3" cy="84.3" r="2.2" fill="#44962e"/>
<circle cx="3.7" cy="83.6" r="1.2" fill="#60a54d"/>
<circle cx="259.2" cy="99.5" r="4.0" fill="#5cb03c"/>
<circle cx="258.2" cy="98.3" r="2.2" fill="#74bb59"/>
<circle cx="25.4" cy="94.6" r="3.9" fill="#3a8a28"/>
<circle cx="24.4" cy="93.5" r="2.1" fill="#579b48"/>
<circle cx="28.4" cy="90.4" r="3.9" fill="#44962e"/>
<circle cx="27.4" cy="89.2" r="2.2" fill="#60a54d"/>
<circle cx="189.5" cy="80.5" r="3.8" fill="#5cb03c"/>
<circle cx="188.5" cy="79.4" r="2.1" fill="#74bb59"/>
<circle cx="352.5" cy="73.8" r="2.9" fill="#2a6a1e"/>
<circle cx="351.8" cy="72.9" r="1.6" fill="#49803f"/>
<circle cx="435.7" cy="86.0" r="3.6" fill="#4ea034"/>
<circle cx="434.8" cy="84.9" r="2.0" fill="#68ae52"/>
<circle cx="373.9" cy="79.3" r="3.3" fill="#5cb03c"/>
<circle cx="373.1" cy="78.3" r="1.8" fill="#74bb59"/>
<circle cx="109.2" cy="84.0" r="2.4" fill="#5cb03c"/>
<circle cx="108.6" cy="83.3" r="1.3" fill="#74bb59"/>
<circle cx="130.8" cy="98.4" r="3.3" fill="#44962e"/>
<circle cx="130.0" cy="97.4" r="1.8" fill="#60a54d"/>
<circle cx="424.9" cy="72.3" r="2.2" fill="#3a8a28"/>
<circle cx="424.4" cy="71.6" r="1.2" fill="#579b48"/>
<circle cx="257.4" cy="80.1" r="3.4" fill="#2f7422"/>
<circle cx="256.5" cy="79.1" r="1.8" fill="#4e8843"/>
<circle cx="88.7" cy="65.9" r="4.0" fill="#5cb03c"/>
<circle cx="87.7" cy="64.7" r="2.2" fill="#74bb59"/>
<circle cx="83.0" cy="82.5" r="3.3" fill="#4ea034"/>
<circle cx="82.2" cy="81.5" r="1.8" fill="#68ae52"/>
<circle cx="302.5" cy="75.8" r="3.6" fill="#3a8a28"/>
<circle cx="301.6" cy="74.7" r="2.0" fill="#579b48"/>
<circle cx="96.6" cy="80.7" r="3.2" fill="#2a6a1e"/>
<circle cx="95.8" cy="79.8" r="1.8" fill="#49803f"/>
<circle cx="313.4" cy="65.4" r="2.0" fill="#4ea034"/>
<circle cx="312.9" cy="64.8" r="1.1" fill="#68ae52"/>
<circle cx="31.0" cy="72.4" r="3.6" fill="#5cb03c"/>
<circle cx="30.1" cy="71.3" r="2.0" fill="#74bb59"/>
<circle cx="72.4" cy="69.2" r="2.5" fill="#4ea034"/>
<circle cx="71.8" cy="68.4" r="1.4" fill="#68ae52"/>
<circle cx="374.0" cy="96.9" r="2.4" fill="#4ea034"/>
<circle cx="373.4" cy="96.1" r="1.3" fill="#68ae52"/>
<circle cx="288.5" cy="96.0" r="1.8" fill="#5cb03c"/>
<circle cx="288.0" cy="95.4" r="1.0" fill="#74bb59"/>
<circle cx="338.4" cy="78.4" r="2.3" fill="#2a6a1e"/>
<circle cx="337.8" cy="77.7" r="1.2" fill="#49803f"/>
<circle cx="198.7" cy="65.8" r="3.4" fill="#5cb03c"/>
<circle cx="197.9" cy="64.8" r="1.9" fill="#74bb59"/>
<circle cx="343.9" cy="57.8" r="3.2" fill="#2a6a1e"/>
<circle cx="343.1" cy="56.8" r="1.8" fill="#49803f"/>
<circle cx="235.9" cy="82.2" r="2.2" fill="#2f7422"/>
<circle cx="235.4" cy="81.5" r="1.2" fill="#4e8843"/>
<circle cx="315.7" cy="98.6" r="3.0" fill="#44962e"/>
<circle cx="314.9" cy="97.7" r="1.7" fill="#60a54d"/>
<circle cx="436.7" cy="66.6" r="2.2" fill="#5cb03c"/>
<circle cx="436.2" cy="65.9" r="1.2" fill="#74bb59"/>
<circle cx="335.2" cy="99.6" r="2.4" fill="#44962e"/>
<circle cx="334.6" cy="98.9" r="1.3" fill="#60a54d"/>
<circle cx="33.9" cy="94.3" r="2.6" fill="#2f7422"/>
<circle cx="33.2" cy="93.5" r="1.4" fill="#4e8843"/>
<circle cx="104.2" cy="72.6" r="3.8" fill="#5cb03c"/>
<circle cx="103.3" cy="71.5" r="2.1" fill="#74bb59"/>
<circle cx="221.7" cy="85.6" r="3.9" fill="#2f7422"/>
<circle cx="220.7" cy="84.4" r="2.2" fill="#4e8843"/>
<circle cx="84.8" cy="57.4" r="3.7" fill="#44962e"/>
<circle cx="83.8" cy="56.3" r="2.0" fill="#60a54d"/>
<circle cx="178.5" cy="83.9" r="2.7" fill="#44962e"/>
<circle cx="177.8" cy="83.1" r="1.5" fill="#60a54d"/>
<circle cx="275.9" cy="83.6" r="2.5" fill="#4ea034"/>
<circle cx="275.3" cy="82.9" r="1.4" fill="#68ae52"/>
<circle cx="40.0" cy="57.8" r="2.6" fill="#2f7422"/>
<circle cx="39.4" cy="57.0" r="1.4" fill="#4e8843"/>
<circle cx="338.1" cy="90.5" r="3.8" fill="#2f7422"/>
<circle cx="337.2" cy="89.4" r="2.1" fill="#4e8843"/>
<circle cx="174.6" cy="88.7" r="2.6" fill="#44962e"/>
<circle cx="174.0" cy="87.9" r="1.4" fill="#60a54d"/>
<circle cx="31.3" cy="83.7" r="1.9" fill="#44962e"/>
<circle cx="30.8" cy="83.1" r="1.0" fill="#60a54d"/>
<circle cx="256.8" cy="89.1" r="1.9" fill="#2a6a1e"/>
<circle cx="256.4" cy="88.5" r="1.1" fill="#49803f"/>
<circle cx="127.1" cy="71.7" r="2.9" fill="#2f7422"/>
<circle cx="126.4" cy="70.8" r="1.6" fill="#4e8843"/>
<circle cx="208.1" cy="67.5" r="3.3" fill="#4ea034"/>
<circle cx="207.3" cy="66.5" r="1.8" fill="#68ae52"/>
<circle cx="360.0" cy="65.9" r="2.7" fill="#2a6a1e"/>
<circle cx="359.3" cy="65.1" r="1.5" fill="#49803f"/>
<circle cx="200.9" cy="71.5" r="2.1" fill="#2f7422"/>
<circle cx="200.4" cy="70.9" r="1.2" fill="#4e8843"/>
<circle cx="211.6" cy="78.3" r="3.1" fill="#3a8a28"/>
<circle cx="210.8" cy="77.4" r="1.7" fill="#579b48"/>
<circle cx="232.6" cy="78.4" r="3.5" fill="#5cb03c"/>
<circle cx="231.7" cy="77.4" r="1.9" fill="#74bb59"/>
<circle cx="346.0" cy="75.9" r="2.3" fill="#5cb03c"/>
<circle cx="345.5" cy="75.2" r="1.2" fill="#74bb59"/>
<circle cx="93.5" cy="94.0" r="1.9" fill="#4ea034"/>
<circle cx="93.1" cy="93.4" r="1.1" fill="#68ae52"/>
<circle cx="34.6" cy="97.4" r="2.2" fill="#4ea034"/>
<circle cx="34.1" cy="96.7" r="1.2" fill="#68ae52"/>
<circle cx="148.7" cy="67.5" r="2.8" fill="#44962e"/>
<circle cx="147.9" cy="66.6" r="1.6" fill="#60a54d"/>
<circle cx="84.9" cy="89.1" r="2.9" fill="#5cb03c"/>
<circle cx="84.2" cy="88.2" r="1.6" fill="#74bb59"/>
<circle cx="313.7" cy="98.4" r="3.1" fill="#2a6a1e"/>
<circle cx="312.9" cy="97.4" r="1.7" fill="#49803f"/>
<circle cx="233.5" cy="75.3" r="2.4" fill="#2a6a1e"/>
<circle cx="232.9" cy="74.6" r="1.3" fill="#49803f"/>
<circle cx="196.5" cy="93.2" r="2.2" fill="#5cb03c"/>
<circle cx="196.0" cy="92.5" r="1.2" fill="#74bb59"/>
<circle cx="152.5" cy="85.7" r="3.1" fill="#5cb03c"/>
<circle cx="151.7" cy="84.8" r="1.7" fill="#74bb59"/>
<circle cx="183.9" cy="77.7" r="3.5" fill="#3a8a28"/>
<circle cx="183.0" cy="76.6" r="1.9" fill="#579b48"/>
<circle cx="96.4" cy="73.0" r="3.7" fill="#44962e"/>
<circle cx="95.5" cy="71.9" r="2.0" fill="#60a54d"/>
<circle cx="375.3" cy="69.6" r="2.5" fill="#3a8a28"/>
<circle cx="374.6" cy="68.9" r="1.4" fill="#579b48"/>
<circle cx="353.7" cy="92.4" r="1.8" fill="#2f7422"/>
<circle cx="353.3" cy="91.9" r="1.0" fill="#4e8843"/>
<circle cx="282.6" cy="86.1" r="3.2" fill="#4ea034"/>
<circle cx="281.8" cy="85.1" r="1.8" fill="#68ae52"/>
<circle cx="384.5" cy="74.7" r="3.8" fill="#4ea034"/>
<circle cx="383.6" cy="73.5" r="2.1" fill="#68ae52"/>
<circle cx="233.8" cy="81.0" r="3.7" fill="#2f7422"/>
<circle cx="232.9" cy="79.9" r="2.0" fill="#4e8843"/>
<circle cx="145.2" cy="88.7" r="3.8" fill="#3a8a28"/>
<circle cx="144.2" cy="87.5" r="2.1" fill="#579b48"/>
<circle cx="34.3" cy="86.7" r="2.2" fill="#3f7e2a"/>
<circle cx="33.8" cy="86.1" r="1.2" fill="#659754"/>
<circle cx="54.1" cy="86.7" r="3.0" fill="#5a9a3a"/>
<circle cx="53.3" cy="85.8" r="1.7" fill="#7bae61"/>
<circle cx="55.8" cy="76.3" r="2.3" fill="#5a9a3a"/>
<circle cx="55.2" cy="75.6" r="1.3" fill="#7bae61"/>
<circle cx="6.4" cy="86.2" r="3.4" fill="#5a9a3a"/>
<circle cx="5.6" cy="85.2" r="1.9" fill="#7bae61"/>
<circle cx="53.9" cy="80.4" r="3.9" fill="#5a9a3a"/>
<circle cx="52.9" cy="79.2" r="2.1" fill="#7bae61"/>
<circle cx="37.4" cy="68.2" r="2.3" fill="#3f7e2a"/>
<circle cx="36.9" cy="67.6" r="1.3" fill="#659754"/>
<circle cx="35.8" cy="76.5" r="2.4" fill="#5a9a3a"/>
<circle cx="35.2" cy="75.8" r="1.3" fill="#7bae61"/>
<circle cx="47.0" cy="67.9" r="2.3" fill="#3f7e2a"/>
<circle cx="46.4" cy="67.3" r="1.3" fill="#659754"/>
<circle cx="29.6" cy="66.1" r="2.6" fill="#5a9a3a"/>
<circle cx="29.0" cy="65.3" r="1.5" fill="#7bae61"/>
<circle cx="16.8" cy="78.1" r="3.8" fill="#3f7e2a"/>
<circle cx="15.8" cy="77.0" r="2.1" fill="#659754"/>
<circle cx="17.0" cy="72.5" r="3.6" fill="#3f7e2a"/>
<circle cx="16.2" cy="71.4" r="2.0" fill="#659754"/>
<circle cx="1.7" cy="82.0" r="3.9" fill="#3f7e2a"/>
<circle cx="0.7" cy="80.8" r="2.1" fill="#659754"/>
<circle cx="52.9" cy="69.1" r="3.4" fill="#3f7e2a"/>
<circle cx="52.1" cy="68.0" r="1.9" fill="#659754"/>
<circle cx="14.2" cy="72.9" r="4.0" fill="#5a9a3a"/>
<circle cx="13.2" cy="71.8" r="2.2" fill="#7bae61"/>
<circle cx="11.5" cy="66.8" r="2.2" fill="#3f7e2a"/>
<circle cx="11.0" cy="66.2" r="1.2" fill="#659754"/>
<circle cx="36.1" cy="72.1" r="2.5" fill="#3f7e2a"/>
<circle cx="35.5" cy="71.4" r="1.4" fill="#659754"/>
<circle cx="25.2" cy="82.0" r="3.1" fill="#5a9a3a"/>
<circle cx="24.5" cy="81.1" r="1.7" fill="#7bae61"/>
<circle cx="31.9" cy="68.1" r="3.0" fill="#5a9a3a"/>
<circle cx="31.1" cy="67.2" r="1.6" fill="#7bae61"/>
<circle cx="118.5" cy="82.3" r="2.0" fill="#5a9a3a"/>
<circle cx="118.0" cy="81.7" r="1.1" fill="#7bae61"/>
<circle cx="124.1" cy="79.0" r="2.5" fill="#3f7e2a"/>
<circle cx="123.5" cy="78.2" r="1.4" fill="#659754"/>
<circle cx="123.0" cy="93.0" r="2.1" fill="#5a9a3a"/>
<circle cx="122.5" cy="92.3" r="1.2" fill="#7bae61"/>
<circle cx="78.9" cy="90.5" r="3.7" fill="#5a9a3a"/>
<circle cx="77.9" cy="89.4" r="2.1" fill="#7bae61"/>
<circle cx="105.4" cy="82.4" r="2.8" fill="#3f7e2a"/>
<circle cx="104.8" cy="81.5" r="1.5" fill="#659754"/>
<circle cx="110.9" cy="88.0" r="3.8" fill="#5a9a3a"/>
<circle cx="109.9" cy="86.9" r="2.1" fill="#7bae61"/>
<circle cx="116.2" cy="76.7" r="2.7" fill="#3f7e2a"/>
<circle cx="115.5" cy="75.8" r="1.5" fill="#659754"/>
<circle cx="83.0" cy="89.1" r="3.7" fill="#5a9a3a"/>
<circle cx="82.1" cy="88.0" r="2.0" fill="#7bae61"/>
<circle cx="109.7" cy="81.4" r="2.8" fill="#5a9a3a"/>
<circle cx="109.0" cy="80.5" r="1.5" fill="#7bae61"/>
<circle cx="126.3" cy="76.0" r="2.1" fill="#5a9a3a"/>
<circle cx="125.8" cy="75.4" r="1.2" fill="#7bae61"/>
<circle cx="99.5" cy="94.8" r="2.0" fill="#5a9a3a"/>
<circle cx="99.0" cy="94.2" r="1.1" fill="#7bae61"/>
<circle cx="104.6" cy="77.7" r="3.0" fill="#3f7e2a"/>
<circle cx="103.8" cy="76.7" r="1.7" fill="#659754"/>
<path d="M-10 100 Q60 97 120 101 T240 99 T340 101 T445 99 L445 152 L-10 152Z" fill="#163c0e"/>
<circle cx="367.2" cy="133.8" r="4.8" fill="#42892c"/>
<circle cx="366.0" cy="132.3" r="2.6" fill="#589745"/>
<circle cx="281.5" cy="114.8" r="4.8" fill="#265f1a"/>
<circle cx="280.3" cy="113.3" r="2.6" fill="#407235"/>
<circle cx="88.4" cy="103.9" r="3.5" fill="#2c6a20"/>
<circle cx="87.6" cy="102.9" r="1.9" fill="#457b3a"/>
<circle cx="243.5" cy="145.2" r="5.9" fill="#265f1a"/>
<circle cx="242.0" cy="143.5" r="3.2" fill="#407235"/>
<circle cx="362.8" cy="115.8" r="4.1" fill="#367a28"/>
<circle cx="361.8" cy="114.6" r="2.2" fill="#4e8941"/>
<circle cx="112.5" cy="100.5" r="4.8" fill="#265f1a"/>
<circle cx="111.3" cy="99.0" r="2.6" fill="#407235"/>
<circle cx="92.1" cy="116.6" r="4.1" fill="#1e5014"/>
<circle cx="91.1" cy="115.3" r="2.3" fill="#396530"/>
<circle cx="367.6" cy="148.0" r="4.8" fill="#1e5014"/>
<circle cx="366.3" cy="146.6" r="2.7" fill="#396530"/>
<circle cx="352.7" cy="122.4" r="5.2" fill="#2c6a20"/>
<circle cx="351.4" cy="120.9" r="2.8" fill="#457b3a"/>
<circle cx="394.0" cy="113.9" r="5.5" fill="#1e5014"/>
<circle cx="392.6" cy="112.3" r="3.0" fill="#396530"/>
<circle cx="99.2" cy="107.3" r="5.2" fill="#173d10"/>
<circle cx="97.9" cy="105.7" r="2.9" fill="#32542c"/>
<circle cx="62.6" cy="109.8" r="3.9" fill="#173d10"/>
<circle cx="61.7" cy="108.7" r="2.1" fill="#32542c"/>
<circle cx="431.3" cy="125.0" r="5.2" fill="#2c6a20"/>
<circle cx="430.0" cy="123.5" r="2.8" fill="#457b3a"/>
<circle cx="93.4" cy="132.2" r="3.1" fill="#173d10"/>
<circle cx="92.6" cy="131.3" r="1.7" fill="#32542c"/>
<circle cx="184.6" cy="133.0" r="5.7" fill="#367a28"/>
<circle cx="183.1" cy="131.3" r="3.1" fill="#4e8941"/>
<circle cx="403.1" cy="138.0" r="4.1" fill="#2c6a20"/>
<circle cx="402.0" cy="136.8" r="2.3" fill="#457b3a"/>
<circle cx="364.0" cy="140.0" r="5.9" fill="#1e5014"/>
<circle cx="362.5" cy="138.2" r="3.3" fill="#396530"/>
<circle cx="295.1" cy="139.5" r="4.8" fill="#2c6a20"/>
<circle cx="293.9" cy="138.1" r="2.6" fill="#457b3a"/>
<circle cx="235.7" cy="135.5" r="5.1" fill="#42892c"/>
<circle cx="234.4" cy="133.9" r="2.8" fill="#589745"/>
<circle cx="160.6" cy="139.9" r="3.6" fill="#265f1a"/>
<circle cx="159.7" cy="138.8" r="2.0" fill="#407235"/>
<circle cx="44.2" cy="129.8" r="3.1" fill="#42892c"/>
<circle cx="43.5" cy="128.8" r="1.7" fill="#589745"/>
<circle cx="227.9" cy="113.5" r="4.3" fill="#173d10"/>
<circle cx="226.9" cy="112.2" r="2.4" fill="#32542c"/>
<circle cx="364.8" cy="137.9" r="4.3" fill="#42892c"/>
<circle cx="363.7" cy="136.6" r="2.4" fill="#589745"/>
<circle cx="41.5" cy="118.3" r="3.6" fill="#2c6a20"/>
<circle cx="40.6" cy="117.2" r="2.0" fill="#457b3a"/>
<circle cx="45.6" cy="116.0" r="3.7" fill="#2c6a20"/>
<circle cx="44.7" cy="114.8" r="2.0" fill="#457b3a"/>
<circle cx="156.6" cy="132.6" r="4.7" fill="#42892c"/>
<circle cx="155.4" cy="131.2" r="2.6" fill="#589745"/>
<circle cx="167.4" cy="108.6" r="4.9" fill="#2c6a20"/>
<circle cx="166.2" cy="107.1" r="2.7" fill="#457b3a"/>
<circle cx="282.7" cy="116.1" r="3.9" fill="#1e5014"/>
<circle cx="281.8" cy="114.9" r="2.1" fill="#396530"/>
<circle cx="349.8" cy="146.0" r="5.6" fill="#1e5014"/>
<circle cx="348.4" cy="144.3" r="3.1" fill="#396530"/>
<circle cx="23.4" cy="140.2" r="5.7" fill="#367a28"/>
<circle cx="22.0" cy="138.5" r="3.1" fill="#4e8941"/>
<circle cx="85.9" cy="143.0" r="4.4" fill="#367a28"/>
<circle cx="84.8" cy="141.7" r="2.4" fill="#4e8941"/>
<circle cx="1.9" cy="107.8" r="4.6" fill="#265f1a"/>
<circle cx="0.8" cy="106.4" r="2.5" fill="#407235"/>
<circle cx="202.5" cy="111.9" r="4.8" fill="#265f1a"/>
<circle cx="201.3" cy="110.5" r="2.6" fill="#407235"/>
<circle cx="406.7" cy="127.8" r="3.6" fill="#42892c"/>
<circle cx="405.8" cy="126.7" r="2.0" fill="#589745"/>
<circle cx="3.9" cy="124.1" r="5.4" fill="#367a28"/>
<circle cx="2.6" cy="122.4" r="3.0" fill="#4e8941"/>
<circle cx="330.3" cy="140.5" r="4.9" fill="#173d10"/>
<circle cx="329.1" cy="139.0" r="2.7" fill="#32542c"/>
<circle cx="397.0" cy="149.0" r="3.5" fill="#173d10"/>
<circle cx="396.1" cy="148.0" r="2.0" fill="#32542c"/>
<circle cx="292.0" cy="100.0" r="4.1" fill="#265f1a"/>
<circle cx="291.0" cy="98.8" r="2.3" fill="#407235"/>
<circle cx="269.6" cy="137.4" r="4.8" fill="#2c6a20"/>
<circle cx="268.4" cy="136.0" r="2.6" fill="#457b3a"/>
<circle cx="372.0" cy="127.8" r="5.6" fill="#265f1a"/>
<circle cx="370.6" cy="126.1" r="3.1" fill="#407235"/>
<circle cx="12.1" cy="110.5" r="3.4" fill="#1e5014"/>
<circle cx="11.3" cy="109.5" r="1.8" fill="#396530"/>
<circle cx="327.7" cy="106.4" r="3.4" fill="#173d10"/>
<circle cx="326.8" cy="105.4" r="1.9" fill="#32542c"/>
<circle cx="347.7" cy="102.2" r="4.4" fill="#265f1a"/>
<circle cx="346.6" cy="100.8" r="2.4" fill="#407235"/>
<circle cx="133.6" cy="103.3" r="3.4" fill="#367a28"/>
<circle cx="132.7" cy="102.2" r="1.9" fill="#4e8941"/>
<circle cx="144.3" cy="117.2" r="4.1" fill="#367a28"/>
<circle cx="143.3" cy="115.9" r="2.3" fill="#4e8941"/>
<circle cx="17.7" cy="126.7" r="5.6" fill="#42892c"/>
<circle cx="16.3" cy="125.0" r="3.1" fill="#589745"/>
<circle cx="157.5" cy="139.8" r="4.2" fill="#42892c"/>
<circle cx="156.5" cy="138.6" r="2.3" fill="#589745"/>
<circle cx="322.8" cy="124.3" r="5.8" fill="#1e5014"/>
<circle cx="321.3" cy="122.6" r="3.2" fill="#396530"/>
<circle cx="50.3" cy="131.2" r="5.2" fill="#1e5014"/>
<circle cx="49.0" cy="129.7" r="2.8" fill="#396530"/>
<circle cx="211.8" cy="112.4" r="4.2" fill="#173d10"/>
<circle cx="210.7" cy="111.1" r="2.3" fill="#32542c"/>
<circle cx="205.3" cy="126.6" r="3.4" fill="#42892c"/>
<circle cx="204.4" cy="125.6" r="1.9" fill="#589745"/>
<circle cx="319.0" cy="122.0" r="4.9" fill="#42892c"/>
<circle cx="317.8" cy="120.5" r="2.7" fill="#589745"/>
<circle cx="146.5" cy="135.9" r="3.1" fill="#1e5014"/>
<circle cx="145.7" cy="134.9" r="1.7" fill="#396530"/>
<circle cx="388.0" cy="102.8" r="4.7" fill="#265f1a"/>
<circle cx="386.8" cy="101.4" r="2.6" fill="#407235"/>
<circle cx="342.2" cy="116.9" r="3.4" fill="#173d10"/>
<circle cx="341.4" cy="115.9" r="1.9" fill="#32542c"/>
<circle cx="130.1" cy="106.1" r="4.7" fill="#42892c"/>
<circle cx="128.9" cy="104.7" r="2.6" fill="#589745"/>
<circle cx="308.2" cy="147.0" r="4.6" fill="#173d10"/>
<circle cx="307.0" cy="145.6" r="2.5" fill="#32542c"/>
<circle cx="23.4" cy="130.8" r="3.7" fill="#42892c"/>
<circle cx="22.5" cy="129.7" r="2.0" fill="#589745"/>
<circle cx="78.2" cy="105.9" r="4.1" fill="#173d10"/>
<circle cx="77.2" cy="104.6" r="2.3" fill="#32542c"/>
<circle cx="105.6" cy="135.4" r="4.1" fill="#173d10"/>
<circle cx="104.6" cy="134.1" r="2.2" fill="#32542c"/>
<circle cx="323.0" cy="116.5" r="3.3" fill="#2c6a20"/>
<circle cx="322.2" cy="115.5" r="1.8" fill="#457b3a"/>
<circle cx="431.9" cy="116.8" r="5.3" fill="#1e5014"/>
<circle cx="430.5" cy="115.2" r="2.9" fill="#396530"/>
<circle cx="39.1" cy="110.7" r="5.2" fill="#1e5014"/>
<circle cx="37.8" cy="109.1" r="2.9" fill="#396530"/>
<circle cx="112.6" cy="127.8" r="4.7" fill="#367a28"/>
<circle cx="111.4" cy="126.4" r="2.6" fill="#4e8941"/>
<circle cx="147.7" cy="144.8" r="3.9" fill="#2c6a20"/>
<circle cx="146.8" cy="143.6" r="2.2" fill="#457b3a"/>
<circle cx="150.5" cy="145.2" r="4.7" fill="#2c6a20"/>
<circle cx="149.4" cy="143.8" r="2.6" fill="#457b3a"/>
<circle cx="239.0" cy="141.6" r="5.2" fill="#173d10"/>
<circle cx="237.7" cy="140.0" r="2.8" fill="#32542c"/>
<circle cx="112.6" cy="113.3" r="4.1" fill="#1e5014"/>
<circle cx="111.5" cy="112.1" r="2.2" fill="#396530"/>
<circle cx="190.5" cy="145.9" r="5.0" fill="#265f1a"/>
<circle cx="189.3" cy="144.4" r="2.7" fill="#407235"/>
<circle cx="319.2" cy="129.9" r="3.8" fill="#42892c"/>
<circle cx="318.2" cy="128.7" r="2.1" fill="#589745"/>
<circle cx="99.2" cy="111.0" r="5.7" fill="#42892c"/>
<circle cx="97.8" cy="109.3" r="3.1" fill="#589745"/>
<circle cx="159.9" cy="137.8" r="5.7" fill="#42892c"/>
<circle cx="158.5" cy="136.1" r="3.1" fill="#589745"/>
<circle cx="150.4" cy="101.2" r="3.5" fill="#173d10"/>
<circle cx="149.6" cy="100.2" r="1.9" fill="#32542c"/>
<circle cx="403.5" cy="104.6" r="4.0" fill="#1e5014"/>
<circle cx="402.5" cy="103.4" r="2.2" fill="#396530"/>
<circle cx="4.8" cy="131.6" r="5.5" fill="#42892c"/>
<circle cx="3.4" cy="130.0" r="3.0" fill="#589745"/>
<circle cx="152.8" cy="123.6" r="4.4" fill="#265f1a"/>
<circle cx="151.7" cy="122.3" r="2.4" fill="#407235"/>
<circle cx="177.9" cy="105.6" r="4.9" fill="#173d10"/>
<circle cx="176.7" cy="104.1" r="2.7" fill="#32542c"/>
<circle cx="113.7" cy="102.4" r="3.5" fill="#265f1a"/>
<circle cx="112.8" cy="101.4" r="1.9" fill="#407235"/>
<circle cx="14.7" cy="134.0" r="4.9" fill="#173d10"/>
<circle cx="13.5" cy="132.5" r="2.7" fill="#32542c"/>
<circle cx="235.8" cy="134.0" r="5.4" fill="#2c6a20"/>
<circle cx="234.4" cy="132.4" r="3.0" fill="#457b3a"/>
<circle cx="88.8" cy="138.4" r="4.6" fill="#265f1a"/>
<circle cx="87.7" cy="137.0" r="2.5" fill="#407235"/>
<circle cx="350.4" cy="145.2" r="5.7" fill="#367a28"/>
<circle cx="349.0" cy="143.5" r="3.1" fill="#4e8941"/>
<circle cx="206.4" cy="136.5" r="3.9" fill="#265f1a"/>
<circle cx="205.4" cy="135.4" r="2.1" fill="#407235"/>
<circle cx="414.4" cy="145.1" r="3.1" fill="#42892c"/>
<circle cx="413.6" cy="144.2" r="1.7" fill="#589745"/>
<circle cx="317.1" cy="100.2" r="5.0" fill="#2c6a20"/>
<circle cx="315.9" cy="98.7" r="2.7" fill="#457b3a"/>
<circle cx="68.9" cy="119.0" r="5.6" fill="#173d10"/>
<circle cx="67.5" cy="117.3" r="3.1" fill="#32542c"/>
<circle cx="248.1" cy="102.6" r="4.2" fill="#2c6a20"/>
<circle cx="247.0" cy="101.3" r="2.3" fill="#457b3a"/>
<circle cx="421.4" cy="121.8" r="5.4" fill="#173d10"/>
<circle cx="420.0" cy="120.2" r="3.0" fill="#32542c"/>
<circle cx="105.1" cy="107.2" r="5.4" fill="#2c6a20"/>
<circle cx="103.8" cy="105.6" r="3.0" fill="#457b3a"/>
<circle cx="286.6" cy="117.9" r="4.6" fill="#173d10"/>
<circle cx="285.5" cy="116.5" r="2.6" fill="#32542c"/>
<circle cx="415.7" cy="111.1" r="3.2" fill="#2c6a20"/>
<circle cx="414.9" cy="110.1" r="1.8" fill="#457b3a"/>
<circle cx="34.7" cy="146.6" r="3.3" fill="#265f1a"/>
<circle cx="33.9" cy="145.7" r="1.8" fill="#407235"/>
<circle cx="276.3" cy="140.8" r="4.1" fill="#2c6a20"/>
<circle cx="275.3" cy="139.6" r="2.2" fill="#457b3a"/>
<circle cx="72.3" cy="107.7" r="5.6" fill="#367a28"/>
<circle cx="70.9" cy="106.0" r="3.1" fill="#4e8941"/>
<circle cx="372.3" cy="104.7" r="4.2" fill="#265f1a"/>
<circle cx="371.2" cy="103.4" r="2.3" fill="#407235"/>
<circle cx="292.2" cy="105.9" r="3.2" fill="#367a28"/>
<circle cx="291.4" cy="104.9" r="1.7" fill="#4e8941"/>
<circle cx="422.2" cy="145.2" r="4.2" fill="#265f1a"/>
<circle cx="421.1" cy="143.9" r="2.3" fill="#407235"/>
<circle cx="432.2" cy="114.7" r="4.7" fill="#2c6a20"/>
<circle cx="431.0" cy="113.3" r="2.6" fill="#457b3a"/>
<circle cx="100.9" cy="108.2" r="5.8" fill="#367a28"/>
<circle cx="99.5" cy="106.5" r="3.2" fill="#4e8941"/>
<circle cx="86.4" cy="131.8" r="3.3" fill="#42892c"/>
<circle cx="85.5" cy="130.8" r="1.8" fill="#589745"/>
<circle cx="95.2" cy="142.3" r="5.8" fill="#265f1a"/>
<circle cx="93.8" cy="140.6" r="3.2" fill="#407235"/>
<circle cx="346.2" cy="131.0" r="5.3" fill="#173d10"/>
<circle cx="344.9" cy="129.4" r="2.9" fill="#32542c"/>
<circle cx="343.9" cy="143.5" r="4.4" fill="#367a28"/>
<circle cx="342.8" cy="142.2" r="2.4" fill="#4e8941"/>
<circle cx="281.9" cy="136.2" r="4.3" fill="#42892c"/>
<circle cx="280.8" cy="134.9" r="2.4" fill="#589745"/>
<circle cx="256.2" cy="116.2" r="3.9" fill="#173d10"/>
<circle cx="255.2" cy="115.0" r="2.1" fill="#32542c"/>
<circle cx="140.9" cy="113.9" r="4.1" fill="#367a28"/>
<circle cx="139.9" cy="112.7" r="2.2" fill="#4e8941"/>
<circle cx="438.3" cy="102.0" r="5.4" fill="#42892c"/>
<circle cx="437.0" cy="100.4" r="2.9" fill="#589745"/>
<circle cx="112.1" cy="120.5" r="4.7" fill="#367a28"/>
<circle cx="110.9" cy="119.1" r="2.6" fill="#4e8941"/>
<circle cx="331.2" cy="143.6" r="4.2" fill="#1e5014"/>
<circle cx="330.2" cy="142.3" r="2.3" fill="#396530"/>
<circle cx="196.7" cy="102.5" r="4.8" fill="#2c6a20"/>
<circle cx="195.5" cy="101.0" r="2.6" fill="#457b3a"/>
<circle cx="184.3" cy="138.1" r="3.9" fill="#42892c"/>
<circle cx="183.3" cy="136.9" r="2.2" fill="#589745"/>
<circle cx="135.2" cy="104.6" r="3.9" fill="#367a28"/>
<circle cx="134.2" cy="103.4" r="2.1" fill="#4e8941"/>
<circle cx="364.6" cy="144.3" r="4.4" fill="#42892c"/>
<circle cx="363.5" cy="143.0" r="2.4" fill="#589745"/>
<circle cx="361.8" cy="149.4" r="5.5" fill="#2c6a20"/>
<circle cx="360.4" cy="147.7" r="3.0" fill="#457b3a"/>
<circle cx="71.6" cy="146.8" r="3.6" fill="#173d10"/>
<circle cx="70.7" cy="145.7" r="2.0" fill="#32542c"/>
<circle cx="209.9" cy="102.4" r="5.4" fill="#42892c"/>
<circle cx="208.6" cy="100.8" r="3.0" fill="#589745"/>
<circle cx="285.2" cy="115.6" r="3.7" fill="#173d10"/>
<circle cx="284.3" cy="114.5" r="2.0" fill="#32542c"/>
<circle cx="246.2" cy="142.0" r="5.7" fill="#1e5014"/>
<circle cx="244.7" cy="140.3" r="3.1" fill="#396530"/>
<circle cx="420.2" cy="138.7" r="5.4" fill="#265f1a"/>
<circle cx="418.9" cy="137.1" r="3.0" fill="#407235"/>
<circle cx="282.9" cy="119.0" r="4.3" fill="#1e5014"/>
<circle cx="281.8" cy="117.7" r="2.4" fill="#396530"/>
<circle cx="246.7" cy="148.4" r="3.6" fill="#42892c"/>
<circle cx="245.8" cy="147.3" r="2.0" fill="#589745"/>
<circle cx="212.2" cy="138.0" r="3.1" fill="#2c6a20"/>
<circle cx="211.4" cy="137.1" r="1.7" fill="#457b3a"/>
<circle cx="292.9" cy="141.2" r="4.0" fill="#2c6a20"/>
<circle cx="291.9" cy="140.0" r="2.2" fill="#457b3a"/>
<circle cx="153.4" cy="104.6" r="5.1" fill="#1e5014"/>
<circle cx="152.2" cy="103.1" r="2.8" fill="#396530"/>
<circle cx="135.3" cy="112.3" r="5.5" fill="#367a28"/>
<circle cx="133.9" cy="110.6" r="3.0" fill="#4e8941"/>
<circle cx="275.5" cy="116.1" r="3.4" fill="#367a28"/>
<circle cx="274.7" cy="115.1" r="1.9" fill="#4e8941"/>
<circle cx="88.2" cy="113.7" r="3.6" fill="#1e5014"/>
<circle cx="87.3" cy="112.7" r="2.0" fill="#396530"/>
<circle cx="164.7" cy="116.0" r="3.5" fill="#173d10"/>
<circle cx="163.9" cy="114.9" r="1.9" fill="#32542c"/>
<circle cx="437.8" cy="131.7" r="4.2" fill="#1e5014"/>
<circle cx="436.7" cy="130.4" r="2.3" fill="#396530"/>
<circle cx="166.8" cy="149.0" r="4.2" fill="#367a28"/>
<circle cx="165.7" cy="147.8" r="2.3" fill="#4e8941"/>
<circle cx="216.1" cy="133.8" r="4.6" fill="#173d10"/>
<circle cx="215.0" cy="132.4" r="2.5" fill="#32542c"/>
<circle cx="376.4" cy="139.1" r="4.3" fill="#173d10"/>
<circle cx="375.3" cy="137.8" r="2.4" fill="#32542c"/>
<circle cx="369.9" cy="107.5" r="5.4" fill="#2c6a20"/>
<circle cx="368.6" cy="105.8" r="3.0" fill="#457b3a"/>
<circle cx="367.6" cy="122.9" r="5.4" fill="#1e5014"/>
<circle cx="366.3" cy="121.3" r="3.0" fill="#396530"/>
<circle cx="330.0" cy="143.8" r="4.2" fill="#173d10"/>
<circle cx="328.9" cy="142.5" r="2.3" fill="#32542c"/>
<circle cx="52.9" cy="147.4" r="3.2" fill="#42892c"/>
<circle cx="52.1" cy="146.5" r="1.7" fill="#589745"/>
<circle cx="328.6" cy="104.9" r="3.9" fill="#367a28"/>
<circle cx="327.7" cy="103.7" r="2.1" fill="#4e8941"/>
<circle cx="284.5" cy="143.7" r="4.8" fill="#42892c"/>
<circle cx="283.3" cy="142.3" r="2.6" fill="#589745"/>
<circle cx="226.8" cy="136.3" r="4.0" fill="#265f1a"/>
<circle cx="225.8" cy="135.1" r="2.2" fill="#407235"/>
<circle cx="249.2" cy="126.5" r="3.2" fill="#173d10"/>
<circle cx="248.3" cy="125.5" r="1.8" fill="#32542c"/>
<circle cx="305.8" cy="111.8" r="5.7" fill="#265f1a"/>
<circle cx="304.4" cy="110.0" r="3.1" fill="#407235"/>
<circle cx="16.0" cy="116.4" r="4.1" fill="#265f1a"/>
<circle cx="15.0" cy="115.1" r="2.3" fill="#407235"/>
<circle cx="425.0" cy="106.7" r="4.5" fill="#265f1a"/>
<circle cx="423.9" cy="105.4" r="2.5" fill="#407235"/>
<circle cx="162.2" cy="129.2" r="5.4" fill="#42892c"/>
<circle cx="160.8" cy="127.6" r="3.0" fill="#589745"/>
<circle cx="235.8" cy="131.0" r="4.2" fill="#2c6a20"/>
<circle cx="234.7" cy="129.7" r="2.3" fill="#457b3a"/>
<circle cx="192.3" cy="125.0" r="3.3" fill="#2c6a20"/>
<circle cx="191.5" cy="124.0" r="1.8" fill="#457b3a"/>
<circle cx="360.4" cy="107.5" r="5.7" fill="#173d10"/>
<circle cx="359.0" cy="105.8" r="3.2" fill="#32542c"/>
<circle cx="182.8" cy="144.7" r="5.4" fill="#367a28"/>
<circle cx="181.5" cy="143.0" r="3.0" fill="#4e8941"/>
<circle cx="109.8" cy="139.7" r="3.5" fill="#42892c"/>
<circle cx="108.9" cy="138.6" r="1.9" fill="#589745"/>
<circle cx="161.8" cy="148.1" r="5.6" fill="#42892c"/>
<circle cx="160.4" cy="146.4" r="3.1" fill="#589745"/>
<circle cx="101.5" cy="120.4" r="6.0" fill="#2c6a20"/>
<circle cx="100.0" cy="118.6" r="3.3" fill="#457b3a"/>
<circle cx="4.7" cy="122.9" r="4.6" fill="#367a28"/>
<circle cx="3.5" cy="121.5" r="2.5" fill="#4e8941"/>
<circle cx="434.1" cy="132.0" r="3.8" fill="#173d10"/>
<circle cx="433.2" cy="130.8" r="2.1" fill="#32542c"/>
<circle cx="345.3" cy="124.0" r="4.6" fill="#42892c"/>
<circle cx="344.2" cy="122.6" r="2.5" fill="#589745"/>
<circle cx="217.6" cy="122.8" r="5.2" fill="#265f1a"/>
<circle cx="216.3" cy="121.2" r="2.8" fill="#407235"/>
<circle cx="237.4" cy="139.3" r="5.8" fill="#265f1a"/>
<circle cx="236.0" cy="137.6" r="3.2" fill="#407235"/>
<circle cx="4.6" cy="138.4" r="5.3" fill="#1e5014"/>
<circle cx="3.3" cy="136.8" r="2.9" fill="#396530"/>
<circle cx="323.2" cy="101.0" r="4.2" fill="#2c6a20"/>
<circle cx="322.2" cy="99.7" r="2.3" fill="#457b3a"/>
<circle cx="40.0" cy="120.3" r="4.1" fill="#173d10"/>
<circle cx="39.0" cy="119.1" r="2.2" fill="#32542c"/>
<circle cx="202.2" cy="123.0" r="4.9" fill="#42892c"/>
<circle cx="201.0" cy="121.5" r="2.7" fill="#589745"/>
<circle cx="231.0" cy="119.6" r="4.3" fill="#1e5014"/>
<circle cx="229.9" cy="118.3" r="2.4" fill="#396530"/>
<circle cx="335.9" cy="117.1" r="3.1" fill="#173d10"/>
<circle cx="335.1" cy="116.2" r="1.7" fill="#32542c"/>
<circle cx="268.5" cy="149.1" r="4.1" fill="#42892c"/>
<circle cx="267.5" cy="147.8" r="2.2" fill="#589745"/>
<circle cx="361.9" cy="145.8" r="6.0" fill="#42892c"/>
<circle cx="360.4" cy="144.0" r="3.3" fill="#589745"/>
<circle cx="408.6" cy="121.9" r="4.6" fill="#1e5014"/>
<circle cx="407.5" cy="120.6" r="2.5" fill="#396530"/>
<circle cx="40.0" cy="135.3" r="5.2" fill="#367a28"/>
<circle cx="38.7" cy="133.7" r="2.9" fill="#4e8941"/>
<circle cx="422.1" cy="127.3" r="4.9" fill="#2c6a20"/>
<circle cx="420.8" cy="125.8" r="2.7" fill="#457b3a"/>
<circle cx="399.0" cy="136.6" r="4.6" fill="#42892c"/>
<circle cx="397.9" cy="135.3" r="2.5" fill="#589745"/>
<circle cx="202.0" cy="131.9" r="3.7" fill="#367a28"/>
<circle cx="201.1" cy="130.8" r="2.0" fill="#4e8941"/>
<circle cx="300.9" cy="100.3" r="3.1" fill="#367a28"/>
<circle cx="300.1" cy="99.4" r="1.7" fill="#4e8941"/>
<circle cx="-2.8" cy="104.0" r="5.3" fill="#42892c"/>
<circle cx="-4.1" cy="102.5" r="2.9" fill="#589745"/>
<circle cx="309.4" cy="116.1" r="5.2" fill="#265f1a"/>
<circle cx="308.1" cy="114.5" r="2.9" fill="#407235"/>
<circle cx="195.9" cy="133.3" r="5.4" fill="#173d10"/>
<circle cx="194.6" cy="131.6" r="3.0" fill="#32542c"/>
<circle cx="206.4" cy="121.6" r="4.1" fill="#367a28"/>
<circle cx="205.4" cy="120.4" r="2.3" fill="#4e8941"/>
<circle cx="242.8" cy="125.4" r="3.9" fill="#42892c"/>
<circle cx="241.8" cy="124.2" r="2.1" fill="#589745"/>
<circle cx="331.6" cy="146.3" r="3.7" fill="#173d10"/>
<circle cx="330.7" cy="145.2" r="2.0" fill="#32542c"/>
<circle cx="418.4" cy="126.6" r="5.8" fill="#173d10"/>
<circle cx="416.9" cy="124.8" r="3.2" fill="#32542c"/>
<circle cx="101.1" cy="110.4" r="3.2" fill="#1e5014"/>
<circle cx="100.3" cy="109.5" r="1.7" fill="#396530"/>
<circle cx="56.6" cy="125.3" r="3.1" fill="#265f1a"/>
<circle cx="55.9" cy="124.4" r="1.7" fill="#407235"/>
<circle cx="402.1" cy="113.2" r="3.6" fill="#173d10"/>
<circle cx="401.2" cy="112.1" r="2.0" fill="#32542c"/>
<circle cx="90.4" cy="102.7" r="4.1" fill="#265f1a"/>
<circle cx="89.4" cy="101.5" r="2.2" fill="#407235"/>
<circle cx="168.4" cy="135.5" r="5.2" fill="#367a28"/>
<circle cx="167.1" cy="134.0" r="2.8" fill="#4e8941"/>
<circle cx="329.9" cy="137.0" r="3.3" fill="#173d10"/>
<circle cx="329.1" cy="136.0" r="1.8" fill="#32542c"/>
<circle cx="-3.7" cy="130.7" r="5.0" fill="#2c6a20"/>
<circle cx="-4.9" cy="129.2" r="2.8" fill="#457b3a"/>
<circle cx="286.2" cy="149.3" r="5.9" fill="#173d10"/>
<circle cx="284.7" cy="147.5" r="3.2" fill="#32542c"/>
<circle cx="175.3" cy="104.1" r="5.8" fill="#42892c"/>
<circle cx="173.8" cy="102.3" r="3.2" fill="#589745"/>
<circle cx="25.7" cy="127.9" r="4.1" fill="#265f1a"/>
<circle cx="24.6" cy="126.7" r="2.3" fill="#407235"/>
<circle cx="387.6" cy="126.9" r="3.4" fill="#42892c"/>
<circle cx="386.7" cy="125.9" r="1.9" fill="#589745"/>
<circle cx="340.4" cy="128.7" r="5.1" fill="#265f1a"/>
<circle cx="339.1" cy="127.1" r="2.8" fill="#407235"/>
<circle cx="3.7" cy="135.5" r="3.9" fill="#265f1a"/>
<circle cx="2.7" cy="134.3" r="2.1" fill="#407235"/>
<circle cx="149.9" cy="147.0" r="5.0" fill="#42892c"/>
<circle cx="148.6" cy="145.5" r="2.8" fill="#589745"/>
<circle cx="326.9" cy="133.9" r="4.6" fill="#1e5014"/>
<circle cx="325.8" cy="132.5" r="2.5" fill="#396530"/>
<circle cx="117.7" cy="102.3" r="4.0" fill="#265f1a"/>
<circle cx="116.7" cy="101.1" r="2.2" fill="#407235"/>
<circle cx="314.0" cy="113.0" r="4.3" fill="#42892c"/>
<circle cx="313.0" cy="111.6" r="2.4" fill="#589745"/>
<circle cx="414.3" cy="106.0" r="3.8" fill="#367a28"/>
<circle cx="413.3" cy="104.9" r="2.1" fill="#4e8941"/>
<circle cx="416.2" cy="124.0" r="3.8" fill="#367a28"/>
<circle cx="415.3" cy="122.8" r="2.1" fill="#4e8941"/>
<circle cx="271.8" cy="142.6" r="3.2" fill="#265f1a"/>
<circle cx="271.0" cy="141.6" r="1.7" fill="#407235"/>
<circle cx="122.7" cy="126.6" r="4.7" fill="#367a28"/>
<circle cx="121.6" cy="125.2" r="2.6" fill="#4e8941"/>
<circle cx="426.5" cy="137.8" r="5.6" fill="#1e5014"/>
<circle cx="425.1" cy="136.1" r="3.1" fill="#396530"/>
<circle cx="395.5" cy="120.9" r="3.5" fill="#265f1a"/>
<circle cx="394.6" cy="119.9" r="1.9" fill="#407235"/>
<circle cx="423.8" cy="149.5" r="3.3" fill="#367a28"/>
<circle cx="422.9" cy="148.5" r="1.8" fill="#4e8941"/>
<circle cx="24.0" cy="100.6" r="4.5" fill="#367a28"/>
<circle cx="22.9" cy="99.3" r="2.5" fill="#4e8941"/>
<circle cx="430.0" cy="140.6" r="3.4" fill="#1e5014"/>
<circle cx="429.1" cy="139.5" r="1.9" fill="#396530"/>
<circle cx="217.8" cy="125.3" r="5.9" fill="#42892c"/>
<circle cx="216.4" cy="123.6" r="3.3" fill="#589745"/>
<circle cx="186.2" cy="125.6" r="5.0" fill="#367a28"/>
<circle cx="185.0" cy="124.1" r="2.8" fill="#4e8941"/>
<circle cx="172.2" cy="120.8" r="3.8" fill="#173d10"/>
<circle cx="171.2" cy="119.7" r="2.1" fill="#32542c"/>
<circle cx="56.2" cy="142.9" r="5.0" fill="#2c6a20"/>
<circle cx="54.9" cy="141.4" r="2.7" fill="#457b3a"/>
<circle cx="176.9" cy="105.7" r="4.9" fill="#265f1a"/>
<circle cx="175.7" cy="104.2" r="2.7" fill="#407235"/>
<circle cx="302.9" cy="129.9" r="5.1" fill="#173d10"/>
<circle cx="301.6" cy="128.4" r="2.8" fill="#32542c"/>
<circle cx="131.4" cy="109.0" r="3.8" fill="#42892c"/>
<circle cx="130.5" cy="107.8" r="2.1" fill="#589745"/>
<circle cx="247.7" cy="145.0" r="3.2" fill="#173d10"/>
<circle cx="246.9" cy="144.0" r="1.8" fill="#32542c"/>
<circle cx="19.5" cy="144.0" r="5.1" fill="#1e5014"/>
<circle cx="18.2" cy="142.4" r="2.8" fill="#396530"/>
<circle cx="199.7" cy="119.5" r="3.6" fill="#42892c"/>
<circle cx="198.8" cy="118.5" r="2.0" fill="#589745"/>
<circle cx="344.6" cy="147.1" r="4.1" fill="#367a28"/>
<circle cx="343.6" cy="145.8" r="2.3" fill="#4e8941"/>
<circle cx="324.5" cy="144.3" r="4.6" fill="#2c6a20"/>
<circle cx="323.3" cy="142.9" r="2.5" fill="#457b3a"/>
<circle cx="374.4" cy="114.3" r="4.9" fill="#42892c"/>
<circle cx="373.2" cy="112.8" r="2.7" fill="#589745"/>
<circle cx="108.8" cy="116.0" r="4.4" fill="#2c6a20"/>
<circle cx="107.7" cy="114.7" r="2.4" fill="#457b3a"/>
<circle cx="161.7" cy="147.4" r="3.4" fill="#173d10"/>
<circle cx="160.8" cy="146.4" r="1.9" fill="#32542c"/>
<circle cx="385.3" cy="142.4" r="5.6" fill="#265f1a"/>
<circle cx="383.9" cy="140.7" r="3.1" fill="#407235"/>
<circle cx="48.2" cy="128.5" r="5.4" fill="#173d10"/>
<circle cx="46.8" cy="126.9" r="3.0" fill="#32542c"/>
<circle cx="67.7" cy="144.1" r="5.9" fill="#367a28"/>
<circle cx="66.2" cy="142.3" r="3.3" fill="#4e8941"/>
<circle cx="217.3" cy="132.2" r="3.1" fill="#173d10"/>
<circle cx="216.5" cy="131.2" r="1.7" fill="#32542c"/>
<circle cx="-3.7" cy="143.7" r="5.1" fill="#2c6a20"/>
<circle cx="-5.0" cy="142.2" r="2.8" fill="#457b3a"/>
<circle cx="73.1" cy="120.7" r="4.1" fill="#173d10"/>
<circle cx="72.1" cy="119.4" r="2.2" fill="#32542c"/>
<circle cx="274.8" cy="101.7" r="3.3" fill="#173d10"/>
<circle cx="274.0" cy="100.8" r="1.8" fill="#32542c"/>
<circle cx="167.7" cy="129.2" r="5.3" fill="#2c6a20"/>
<circle cx="166.4" cy="127.6" r="2.9" fill="#457b3a"/>
<circle cx="101.7" cy="147.6" r="5.0" fill="#265f1a"/>
<circle cx="100.5" cy="146.1" r="2.7" fill="#407235"/>
<circle cx="163.2" cy="145.4" r="5.2" fill="#42892c"/>
<circle cx="161.9" cy="143.8" r="2.8" fill="#589745"/>
<circle cx="192.1" cy="106.4" r="4.9" fill="#173d10"/>
<circle cx="190.9" cy="104.9" r="2.7" fill="#32542c"/>
<circle cx="382.3" cy="115.3" r="5.6" fill="#42892c"/>
<circle cx="380.9" cy="113.7" r="3.1" fill="#589745"/>
<circle cx="145.8" cy="114.2" r="5.2" fill="#173d10"/>
<circle cx="144.5" cy="112.7" r="2.9" fill="#32542c"/>
<circle cx="180.1" cy="146.0" r="5.8" fill="#265f1a"/>
<circle cx="178.6" cy="144.3" r="3.2" fill="#407235"/>
<circle cx="270.2" cy="115.3" r="3.7" fill="#1e5014"/>
<circle cx="269.2" cy="114.2" r="2.1" fill="#396530"/>
<circle cx="440.0" cy="101.4" r="3.5" fill="#173d10"/>
<circle cx="439.1" cy="100.4" r="1.9" fill="#32542c"/>
<circle cx="46.4" cy="128.9" r="4.9" fill="#42892c"/>
<circle cx="45.1" cy="127.4" r="2.7" fill="#589745"/>
<circle cx="278.2" cy="102.0" r="5.0" fill="#2c6a20"/>
<circle cx="276.9" cy="100.5" r="2.7" fill="#457b3a"/>
<circle cx="-0.2" cy="126.5" r="4.3" fill="#265f1a"/>
<circle cx="-1.3" cy="125.2" r="2.4" fill="#407235"/>
<circle cx="435.0" cy="127.9" r="4.8" fill="#173d10"/>
<circle cx="433.8" cy="126.4" r="2.6" fill="#32542c"/>
<circle cx="260.6" cy="126.2" r="3.9" fill="#173d10"/>
<circle cx="259.7" cy="125.0" r="2.1" fill="#32542c"/>
<circle cx="81.0" cy="118.9" r="3.9" fill="#42892c"/>
<circle cx="80.0" cy="117.8" r="2.2" fill="#589745"/>
<circle cx="185.8" cy="125.7" r="4.2" fill="#42892c"/>
<circle cx="184.7" cy="124.5" r="2.3" fill="#589745"/>
<circle cx="366.3" cy="112.4" r="5.2" fill="#42892c"/>
<circle cx="365.0" cy="110.8" r="2.8" fill="#589745"/>
<circle cx="344.0" cy="119.0" r="4.3" fill="#265f1a"/>
<circle cx="342.9" cy="117.7" r="2.4" fill="#407235"/>
<circle cx="144.2" cy="142.0" r="3.7" fill="#2c6a20"/>
<circle cx="143.2" cy="140.9" r="2.1" fill="#457b3a"/>
<circle cx="223.3" cy="145.7" r="4.8" fill="#1e5014"/>
<circle cx="222.2" cy="144.3" r="2.6" fill="#396530"/>
<circle cx="368.9" cy="129.6" r="4.8" fill="#265f1a"/>
<circle cx="367.7" cy="128.2" r="2.7" fill="#407235"/>
<circle cx="89.9" cy="140.2" r="3.4" fill="#173d10"/>
<circle cx="89.1" cy="139.1" r="1.9" fill="#32542c"/>
<circle cx="293.1" cy="144.5" r="5.2" fill="#367a28"/>
<circle cx="291.8" cy="142.9" r="2.9" fill="#4e8941"/>
<circle cx="229.8" cy="141.2" r="4.6" fill="#173d10"/>
<circle cx="228.6" cy="139.8" r="2.6" fill="#32542c"/>
<circle cx="332.6" cy="104.1" r="5.4" fill="#265f1a"/>
<circle cx="331.3" cy="102.5" r="2.9" fill="#407235"/>
<circle cx="121.7" cy="102.0" r="4.3" fill="#173d10"/>
<circle cx="120.6" cy="100.7" r="2.4" fill="#32542c"/>
<circle cx="389.6" cy="133.3" r="4.8" fill="#367a28"/>
<circle cx="388.4" cy="131.8" r="2.6" fill="#4e8941"/>
<circle cx="21.4" cy="140.9" r="5.8" fill="#173d10"/>
<circle cx="20.0" cy="139.2" r="3.2" fill="#32542c"/>
<circle cx="200.8" cy="116.4" r="4.5" fill="#1e5014"/>
<circle cx="199.7" cy="115.1" r="2.5" fill="#396530"/>
<circle cx="262.4" cy="119.1" r="5.1" fill="#265f1a"/>
<circle cx="261.1" cy="117.6" r="2.8" fill="#407235"/>
<circle cx="135.5" cy="122.9" r="3.5" fill="#1e5014"/>
<circle cx="134.6" cy="121.8" r="1.9" fill="#396530"/>
<circle cx="28.3" cy="148.3" r="5.8" fill="#1e5014"/>
<circle cx="26.8" cy="146.5" r="3.2" fill="#396530"/>
<circle cx="183.3" cy="107.0" r="6.0" fill="#173d10"/>
<circle cx="181.8" cy="105.2" r="3.3" fill="#32542c"/>
<circle cx="246.7" cy="142.6" r="3.8" fill="#173d10"/>
<circle cx="245.8" cy="141.5" r="2.1" fill="#32542c"/>
<circle cx="406.3" cy="119.7" r="3.7" fill="#2c6a20"/>
<circle cx="405.3" cy="118.5" r="2.0" fill="#457b3a"/>
<circle cx="309.0" cy="126.3" r="3.1" fill="#2c6a20"/>
<circle cx="308.2" cy="125.3" r="1.7" fill="#457b3a"/>
<circle cx="260.2" cy="104.1" r="5.2" fill="#367a28"/>
<circle cx="258.9" cy="102.6" r="2.9" fill="#4e8941"/>
<circle cx="87.0" cy="119.3" r="3.8" fill="#2c6a20"/>
<circle cx="86.0" cy="118.2" r="2.1" fill="#457b3a"/>
<circle cx="407.0" cy="111.5" r="3.2" fill="#2c6a20"/>
<circle cx="406.2" cy="110.5" r="1.7" fill="#457b3a"/>
<circle cx="202.9" cy="124.7" r="5.5" fill="#1e5014"/>
<circle cx="201.5" cy="123.1" r="3.0" fill="#396530"/>
<circle cx="396.1" cy="133.7" r="3.0" fill="#1e5014"/>
<circle cx="395.3" cy="132.8" r="1.7" fill="#396530"/>
<circle cx="75.1" cy="109.9" r="3.7" fill="#265f1a"/>
<circle cx="74.2" cy="108.8" r="2.0" fill="#407235"/>
<circle cx="395.7" cy="105.0" r="3.1" fill="#265f1a"/>
<circle cx="394.9" cy="104.0" r="1.7" fill="#407235"/>
<circle cx="108.8" cy="118.6" r="3.8" fill="#1e5014"/>
<circle cx="107.8" cy="117.4" r="2.1" fill="#396530"/>
<circle cx="134.4" cy="147.6" r="4.3" fill="#265f1a"/>
<circle cx="133.3" cy="146.3" r="2.4" fill="#407235"/>
<circle cx="307.4" cy="100.4" r="3.7" fill="#265f1a"/>
<circle cx="306.5" cy="99.3" r="2.0" fill="#407235"/>
<circle cx="303.9" cy="147.9" r="4.0" fill="#367a28"/>
<circle cx="302.9" cy="146.6" r="2.2" fill="#4e8941"/>
<circle cx="379.9" cy="123.9" r="4.0" fill="#42892c"/>
<circle cx="378.9" cy="122.7" r="2.2" fill="#589745"/>
<circle cx="302.2" cy="138.1" r="4.1" fill="#367a28"/>
<circle cx="301.2" cy="136.9" r="2.3" fill="#4e8941"/>
<circle cx="61.4" cy="129.5" r="5.0" fill="#367a28"/>
<circle cx="60.1" cy="128.0" r="2.7" fill="#4e8941"/>
<circle cx="3.5" cy="109.9" r="4.7" fill="#367a28"/>
<circle cx="2.3" cy="108.5" r="2.6" fill="#4e8941"/>
<circle cx="15.6" cy="141.3" r="4.2" fill="#42892c"/>
<circle cx="14.5" cy="140.0" r="2.3" fill="#589745"/>
<circle cx="386.5" cy="101.3" r="3.3" fill="#1e5014"/>
<circle cx="385.7" cy="100.3" r="1.8" fill="#396530"/>
<circle cx="181.1" cy="129.3" r="3.8" fill="#173d10"/>
<circle cx="180.1" cy="128.2" r="2.1" fill="#32542c"/>
<circle cx="400.6" cy="105.3" r="5.3" fill="#42892c"/>
<circle cx="399.2" cy="103.7" r="2.9" fill="#589745"/>
<circle cx="147.4" cy="129.3" r="5.9" fill="#367a28"/>
<circle cx="145.9" cy="127.5" r="3.3" fill="#4e8941"/>
<circle cx="339.7" cy="101.7" r="4.4" fill="#265f1a"/>
<circle cx="338.6" cy="100.4" r="2.4" fill="#407235"/>
<circle cx="319.8" cy="112.0" r="5.3" fill="#265f1a"/>
<circle cx="318.5" cy="110.4" r="2.9" fill="#407235"/>
<circle cx="301.2" cy="116.6" r="5.7" fill="#1e5014"/>
<circle cx="299.7" cy="114.9" r="3.2" fill="#396530"/>
<circle cx="85.0" cy="146.0" r="4.3" fill="#42892c"/>
<circle cx="83.9" cy="144.7" r="2.4" fill="#589745"/>
<circle cx="17.1" cy="116.4" r="4.3" fill="#1e5014"/>
<circle cx="16.0" cy="115.1" r="2.4" fill="#396530"/>
<circle cx="2.1" cy="112.2" r="5.6" fill="#265f1a"/>
<circle cx="0.7" cy="110.6" r="3.1" fill="#407235"/>
<circle cx="2.5" cy="145.1" r="3.9" fill="#173d10"/>
<circle cx="1.5" cy="143.9" r="2.2" fill="#32542c"/>
<circle cx="23.6" cy="135.9" r="3.5" fill="#42892c"/>
<circle cx="22.7" cy="134.8" r="2.0" fill="#589745"/>
<circle cx="365.0" cy="120.5" r="5.9" fill="#42892c"/>
<circle cx="363.5" cy="118.7" r="3.2" fill="#589745"/>
<circle cx="104.4" cy="113.3" r="5.3" fill="#367a28"/>
<circle cx="103.0" cy="111.7" r="2.9" fill="#4e8941"/>
<circle cx="189.3" cy="117.3" r="4.9" fill="#42892c"/>
<circle cx="188.1" cy="115.8" r="2.7" fill="#589745"/>
<circle cx="298.4" cy="112.7" r="6.0" fill="#2c6a20"/>
<circle cx="296.9" cy="110.9" r="3.3" fill="#457b3a"/>
<circle cx="314.4" cy="103.1" r="3.7" fill="#265f1a"/>
<circle cx="313.4" cy="102.0" r="2.0" fill="#407235"/>
<circle cx="2.2" cy="111.5" r="5.6" fill="#2c6a20"/>
<circle cx="0.8" cy="109.8" r="3.1" fill="#457b3a"/>
<circle cx="153.8" cy="116.9" r="4.4" fill="#1e5014"/>
<circle cx="152.7" cy="115.6" r="2.4" fill="#396530"/>
<circle cx="241.0" cy="139.7" r="3.3" fill="#42892c"/>
<circle cx="240.2" cy="138.7" r="1.8" fill="#589745"/>
<circle cx="286.3" cy="118.4" r="5.8" fill="#173d10"/>
<circle cx="284.8" cy="116.6" r="3.2" fill="#32542c"/>
<circle cx="432.7" cy="116.5" r="4.1" fill="#173d10"/>
<circle cx="431.7" cy="115.3" r="2.2" fill="#32542c"/>
<circle cx="63.4" cy="102.1" r="3.4" fill="#265f1a"/>
<circle cx="62.5" cy="101.1" r="1.9" fill="#407235"/>
<circle cx="157.0" cy="134.8" r="4.2" fill="#42892c"/>
<circle cx="155.9" cy="133.6" r="2.3" fill="#589745"/>
<circle cx="3.3" cy="107.4" r="3.3" fill="#2c6a20"/>
<circle cx="2.5" cy="106.4" r="1.8" fill="#457b3a"/>
<circle cx="394.0" cy="123.2" r="4.7" fill="#2c6a20"/>
<circle cx="392.8" cy="121.8" r="2.6" fill="#457b3a"/>
<circle cx="364.8" cy="106.8" r="4.9" fill="#367a28"/>
<circle cx="363.6" cy="105.3" r="2.7" fill="#4e8941"/>
<circle cx="175.7" cy="126.3" r="5.9" fill="#265f1a"/>
<circle cx="174.2" cy="124.6" r="3.2" fill="#407235"/>
<circle cx="69.8" cy="128.8" r="4.3" fill="#1e5014"/>
<circle cx="68.7" cy="127.5" r="2.3" fill="#396530"/>
<circle cx="178.7" cy="101.2" r="3.4" fill="#42892c"/>
<circle cx="177.8" cy="100.1" r="1.9" fill="#589745"/>
<circle cx="35.2" cy="129.5" r="4.0" fill="#2c6a20"/>
<circle cx="34.2" cy="128.3" r="2.2" fill="#457b3a"/>
<circle cx="162.5" cy="111.0" r="3.1" fill="#265f1a"/>
<circle cx="161.7" cy="110.0" r="1.7" fill="#407235"/>
<circle cx="345.1" cy="106.9" r="5.6" fill="#42892c"/>
<circle cx="343.7" cy="105.2" r="3.1" fill="#589745"/>
<circle cx="86.0" cy="128.6" r="5.9" fill="#367a28"/>
<circle cx="84.6" cy="126.8" r="3.3" fill="#4e8941"/>
<circle cx="158.0" cy="110.9" r="4.8" fill="#42892c"/>
<circle cx="156.9" cy="109.4" r="2.6" fill="#589745"/>
<circle cx="395.2" cy="118.6" r="5.9" fill="#2c6a20"/>
<circle cx="393.7" cy="116.8" r="3.3" fill="#457b3a"/>
<circle cx="252.5" cy="112.7" r="3.1" fill="#42892c"/>
<circle cx="251.8" cy="111.8" r="1.7" fill="#589745"/>
<circle cx="74.0" cy="141.0" r="4.0" fill="#367a28"/>
<circle cx="73.0" cy="139.8" r="2.2" fill="#4e8941"/>
<circle cx="133.0" cy="141.1" r="3.2" fill="#173d10"/>
<circle cx="132.1" cy="140.1" r="1.8" fill="#32542c"/>
<circle cx="195.7" cy="138.3" r="4.5" fill="#265f1a"/>
<circle cx="194.6" cy="137.0" r="2.5" fill="#407235"/>
<circle cx="347.7" cy="118.1" r="3.9" fill="#42892c"/>
<circle cx="346.7" cy="116.9" r="2.2" fill="#589745"/>
<circle cx="153.2" cy="114.6" r="3.2" fill="#1e5014"/>
<circle cx="152.5" cy="113.7" r="1.7" fill="#396530"/>
<circle cx="344.6" cy="118.3" r="5.4" fill="#1e5014"/>
<circle cx="343.2" cy="116.7" r="3.0" fill="#396530"/>
<circle cx="175.4" cy="101.0" r="4.2" fill="#367a28"/>
<circle cx="174.3" cy="99.8" r="2.3" fill="#4e8941"/>
<circle cx="-3.4" cy="100.7" r="3.3" fill="#2c6a20"/>
<circle cx="-4.3" cy="99.7" r="1.8" fill="#457b3a"/>
<circle cx="212.8" cy="144.8" r="3.1" fill="#367a28"/>
<circle cx="212.0" cy="143.9" r="1.7" fill="#4e8941"/>
<circle cx="295.7" cy="131.7" r="5.2" fill="#265f1a"/>
<circle cx="294.4" cy="130.1" r="2.8" fill="#407235"/>
<circle cx="245.0" cy="124.1" r="3.1" fill="#265f1a"/>
<circle cx="244.2" cy="123.1" r="1.7" fill="#407235"/>
<circle cx="291.2" cy="117.4" r="5.2" fill="#1e5014"/>
<circle cx="289.9" cy="115.9" r="2.9" fill="#396530"/>
<circle cx="325.6" cy="138.1" r="4.3" fill="#1e5014"/>
<circle cx="324.5" cy="136.9" r="2.4" fill="#396530"/>
<circle cx="153.5" cy="145.5" r="5.5" fill="#173d10"/>
<circle cx="152.2" cy="143.8" r="3.0" fill="#32542c"/>
<circle cx="380.0" cy="103.2" r="5.1" fill="#265f1a"/>
<circle cx="378.7" cy="101.7" r="2.8" fill="#407235"/>
<circle cx="345.1" cy="136.9" r="4.3" fill="#265f1a"/>
<circle cx="344.0" cy="135.6" r="2.4" fill="#407235"/>
<circle cx="387.9" cy="132.5" r="5.8" fill="#2c6a20"/>
<circle cx="386.5" cy="130.7" r="3.2" fill="#457b3a"/>
<circle cx="152.9" cy="123.1" r="4.5" fill="#265f1a"/>
<circle cx="151.7" cy="121.7" r="2.5" fill="#407235"/>
<circle cx="324.6" cy="119.7" r="5.7" fill="#367a28"/>
<circle cx="323.2" cy="118.0" r="3.1" fill="#4e8941"/>
<circle cx="93.2" cy="140.3" r="3.7" fill="#173d10"/>
<circle cx="92.2" cy="139.1" r="2.0" fill="#32542c"/>
<circle cx="158.2" cy="118.5" r="5.8" fill="#2c6a20"/>
<circle cx="156.8" cy="116.8" r="3.2" fill="#457b3a"/>
<circle cx="45.6" cy="135.5" r="4.8" fill="#42892c"/>
<circle cx="44.4" cy="134.0" r="2.6" fill="#589745"/>
<circle cx="69.6" cy="135.1" r="3.2" fill="#2c6a20"/>
<circle cx="68.8" cy="134.1" r="1.7" fill="#457b3a"/>
<circle cx="23.1" cy="149.6" r="4.3" fill="#1e5014"/>
<circle cx="22.1" cy="148.3" r="2.4" fill="#396530"/>
<circle cx="10.0" cy="136.2" r="3.0" fill="#173d10"/>
<circle cx="9.2" cy="135.3" r="1.7" fill="#32542c"/>
<circle cx="142.6" cy="104.0" r="4.6" fill="#173d10"/>
<circle cx="141.5" cy="102.6" r="2.5" fill="#32542c"/>
<circle cx="242.1" cy="127.2" r="4.6" fill="#42892c"/>
<circle cx="241.0" cy="125.8" r="2.5" fill="#589745"/>
<circle cx="61.7" cy="114.2" r="4.0" fill="#42892c"/>
<circle cx="60.7" cy="113.0" r="2.2" fill="#589745"/>
<circle cx="115.5" cy="126.0" r="3.5" fill="#367a28"/>
<circle cx="114.6" cy="124.9" r="1.9" fill="#4e8941"/>
<circle cx="330.6" cy="100.4" r="3.3" fill="#2c6a20"/>
<circle cx="329.7" cy="99.4" r="1.8" fill="#457b3a"/>
<circle cx="75.4" cy="107.7" r="4.7" fill="#2c6a20"/>
<circle cx="74.2" cy="106.3" r="2.6" fill="#457b3a"/>
<circle cx="254.1" cy="134.4" r="4.3" fill="#1e5014"/>
<circle cx="253.0" cy="133.1" r="2.4" fill="#396530"/>
<circle cx="152.0" cy="143.8" r="5.2" fill="#1e5014"/>
<circle cx="150.7" cy="142.2" r="2.9" fill="#396530"/>
<circle cx="225.0" cy="137.4" r="3.4" fill="#173d10"/>
<circle cx="224.2" cy="136.4" r="1.9" fill="#32542c"/>
<circle cx="149.4" cy="101.3" r="5.7" fill="#367a28"/>
<circle cx="148.0" cy="99.6" r="3.1" fill="#4e8941"/>
<circle cx="431.6" cy="107.5" r="3.7" fill="#1e5014"/>
<circle cx="430.7" cy="106.4" r="2.1" fill="#396530"/>
<circle cx="95.6" cy="143.6" r="5.8" fill="#265f1a"/>
<circle cx="94.1" cy="141.9" r="3.2" fill="#407235"/>
<circle cx="369.0" cy="101.7" r="5.3" fill="#1e5014"/>
<circle cx="367.6" cy="100.2" r="2.9" fill="#396530"/>
<circle cx="164.1" cy="116.6" r="3.3" fill="#42892c"/>
<circle cx="163.2" cy="115.6" r="1.8" fill="#589745"/>
<circle cx="318.1" cy="122.4" r="3.3" fill="#2c6a20"/>
<circle cx="317.3" cy="121.4" r="1.8" fill="#457b3a"/>
<circle cx="84.0" cy="138.5" r="3.6" fill="#2c6a20"/>
<circle cx="83.1" cy="137.5" r="2.0" fill="#457b3a"/>
<circle cx="255.8" cy="125.5" r="4.1" fill="#173d10"/>
<circle cx="254.8" cy="124.2" r="2.3" fill="#32542c"/>
<circle cx="122.8" cy="133.8" r="5.3" fill="#265f1a"/>
<circle cx="121.5" cy="132.2" r="2.9" fill="#407235"/>
<circle cx="353.9" cy="149.3" r="5.3" fill="#1e5014"/>
<circle cx="352.6" cy="147.7" r="2.9" fill="#396530"/>
<circle cx="389.2" cy="123.3" r="5.3" fill="#265f1a"/>
<circle cx="387.9" cy="121.7" r="2.9" fill="#407235"/>
<circle cx="353.7" cy="106.2" r="5.8" fill="#173d10"/>
<circle cx="352.2" cy="104.5" r="3.2" fill="#32542c"/>
<circle cx="51.9" cy="140.5" r="4.9" fill="#2c6a20"/>
<circle cx="50.7" cy="139.0" r="2.7" fill="#457b3a"/>
<circle cx="315.5" cy="103.4" r="5.0" fill="#173d10"/>
<circle cx="314.3" cy="101.9" r="2.7" fill="#32542c"/>
<circle cx="212.8" cy="103.7" r="4.0" fill="#1e5014"/>
<circle cx="211.8" cy="102.5" r="2.2" fill="#396530"/>
<circle cx="302.1" cy="146.4" r="4.3" fill="#42892c"/>
<circle cx="301.1" cy="145.1" r="2.4" fill="#589745"/>
<circle cx="28.7" cy="135.7" r="5.2" fill="#367a28"/>
<circle cx="27.4" cy="134.1" r="2.9" fill="#4e8941"/>
<circle cx="276.8" cy="114.0" r="5.0" fill="#1e5014"/>
<circle cx="275.5" cy="112.5" r="2.8" fill="#396530"/>
<circle cx="206.4" cy="103.2" r="4.0" fill="#367a28"/>
<circle cx="205.4" cy="102.0" r="2.2" fill="#4e8941"/>
<circle cx="63.2" cy="108.8" r="4.6" fill="#173d10"/>
<circle cx="62.0" cy="107.5" r="2.5" fill="#32542c"/>
<circle cx="287.2" cy="114.8" r="5.3" fill="#1e5014"/>
<circle cx="285.9" cy="113.2" r="2.9" fill="#396530"/>
<circle cx="400.1" cy="129.5" r="3.7" fill="#42892c"/>
<circle cx="399.2" cy="128.4" r="2.1" fill="#589745"/>
<circle cx="227.2" cy="141.3" r="3.6" fill="#265f1a"/>
<circle cx="226.3" cy="140.2" r="2.0" fill="#407235"/>
<circle cx="271.3" cy="148.1" r="3.5" fill="#265f1a"/>
<circle cx="270.5" cy="147.1" r="1.9" fill="#407235"/>
<circle cx="204.4" cy="141.4" r="5.2" fill="#173d10"/>
<circle cx="203.1" cy="139.8" r="2.9" fill="#32542c"/>
<circle cx="362.8" cy="124.4" r="4.9" fill="#265f1a"/>
<circle cx="361.6" cy="122.9" r="2.7" fill="#407235"/>
<circle cx="29.9" cy="101.9" r="4.4" fill="#173d10"/>
<circle cx="28.8" cy="100.6" r="2.4" fill="#32542c"/>
<circle cx="338.6" cy="105.0" r="5.7" fill="#265f1a"/>
<circle cx="337.2" cy="103.3" r="3.1" fill="#407235"/>
<circle cx="254.8" cy="145.4" r="3.2" fill="#1e5014"/>
<circle cx="254.0" cy="144.5" r="1.7" fill="#396530"/>
<circle cx="295.9" cy="124.1" r="5.8" fill="#173d10"/>
<circle cx="294.4" cy="122.4" r="3.2" fill="#32542c"/>
<circle cx="305.1" cy="128.5" r="3.1" fill="#265f1a"/>
<circle cx="304.4" cy="127.6" r="1.7" fill="#407235"/>
<circle cx="162.8" cy="103.4" r="5.7" fill="#42892c"/>
<circle cx="161.3" cy="101.7" r="3.2" fill="#589745"/>
<circle cx="350.6" cy="122.8" r="5.5" fill="#1e5014"/>
<circle cx="349.2" cy="121.2" r="3.0" fill="#396530"/>
<circle cx="316.3" cy="125.2" r="5.9" fill="#367a28"/>
<circle cx="314.8" cy="123.4" r="3.2" fill="#4e8941"/>
<circle cx="41.5" cy="149.3" r="4.4" fill="#42892c"/>
<circle cx="40.4" cy="148.0" r="2.4" fill="#589745"/>
<circle cx="164.6" cy="126.2" r="3.1" fill="#367a28"/>
<circle cx="163.9" cy="125.3" r="1.7" fill="#4e8941"/>
<circle cx="79.1" cy="108.7" r="3.1" fill="#2c6a20"/>
<circle cx="78.3" cy="107.8" r="1.7" fill="#457b3a"/>
<circle cx="40.1" cy="137.4" r="5.5" fill="#265f1a"/>
<circle cx="38.7" cy="135.7" r="3.0" fill="#407235"/>
<circle cx="160.3" cy="104.1" r="3.8" fill="#1e5014"/>
<circle cx="159.3" cy="102.9" r="2.1" fill="#396530"/>
<circle cx="235.0" cy="140.8" r="3.6" fill="#367a28"/>
<circle cx="234.1" cy="139.7" r="2.0" fill="#4e8941"/>
<circle cx="425.4" cy="107.4" r="4.0" fill="#42892c"/>
<circle cx="424.5" cy="106.2" r="2.2" fill="#589745"/>
<circle cx="93.6" cy="128.0" r="5.1" fill="#265f1a"/>
<circle cx="92.3" cy="126.5" r="2.8" fill="#407235"/>
<circle cx="423.1" cy="117.5" r="4.3" fill="#1e5014"/>
<circle cx="422.0" cy="116.2" r="2.4" fill="#396530"/>
<circle cx="364.7" cy="123.9" r="3.3" fill="#265f1a"/>
<circle cx="363.9" cy="122.9" r="1.8" fill="#407235"/>
<circle cx="401.8" cy="137.1" r="5.4" fill="#173d10"/>
<circle cx="400.5" cy="135.5" r="2.9" fill="#32542c"/>
<circle cx="16.6" cy="108.8" r="5.7" fill="#367a28"/>
<circle cx="15.1" cy="107.1" r="3.1" fill="#4e8941"/>
<circle cx="255.8" cy="137.4" r="5.6" fill="#173d10"/>
<circle cx="254.4" cy="135.7" r="3.1" fill="#32542c"/>
<circle cx="224.1" cy="124.8" r="4.1" fill="#1e5014"/>
<circle cx="223.1" cy="123.6" r="2.3" fill="#396530"/>
<circle cx="196.7" cy="120.0" r="3.9" fill="#42892c"/>
<circle cx="195.7" cy="118.8" r="2.2" fill="#589745"/>
<circle cx="182.8" cy="127.5" r="3.9" fill="#42892c"/>
<circle cx="181.8" cy="126.4" r="2.1" fill="#589745"/>
<circle cx="325.5" cy="132.0" r="3.1" fill="#42892c"/>
<circle cx="324.7" cy="131.1" r="1.7" fill="#589745"/>
<circle cx="438.8" cy="141.0" r="3.6" fill="#265f1a"/>
<circle cx="437.9" cy="140.0" r="2.0" fill="#407235"/>
<circle cx="158.4" cy="101.9" r="4.0" fill="#42892c"/>
<circle cx="157.4" cy="100.7" r="2.2" fill="#589745"/>
<circle cx="168.4" cy="144.2" r="4.3" fill="#265f1a"/>
<circle cx="167.4" cy="142.9" r="2.4" fill="#407235"/>
<circle cx="372.6" cy="119.6" r="4.9" fill="#173d10"/>
<circle cx="371.4" cy="118.1" r="2.7" fill="#32542c"/>
<circle cx="133.9" cy="106.8" r="4.0" fill="#1e5014"/>
<circle cx="132.9" cy="105.6" r="2.2" fill="#396530"/>
<circle cx="146.3" cy="148.5" r="5.9" fill="#265f1a"/>
<circle cx="144.8" cy="146.7" r="3.2" fill="#407235"/>
<circle cx="124.8" cy="146.3" r="5.3" fill="#265f1a"/>
<circle cx="123.5" cy="144.7" r="2.9" fill="#407235"/>
<circle cx="88.1" cy="110.8" r="5.4" fill="#265f1a"/>
<circle cx="86.7" cy="109.2" r="3.0" fill="#407235"/>
<circle cx="403.0" cy="134.3" r="4.5" fill="#173d10"/>
<circle cx="401.9" cy="133.0" r="2.5" fill="#32542c"/>
<circle cx="272.4" cy="102.9" r="3.4" fill="#173d10"/>
<circle cx="271.5" cy="101.9" r="1.9" fill="#32542c"/>
<circle cx="306.2" cy="118.5" r="4.4" fill="#1e5014"/>
<circle cx="305.1" cy="117.2" r="2.4" fill="#396530"/>
<circle cx="202.1" cy="125.6" r="3.0" fill="#1e5014"/>
<circle cx="201.4" cy="124.7" r="1.7" fill="#396530"/>
<circle cx="15.6" cy="146.9" r="5.1" fill="#265f1a"/>
<circle cx="14.3" cy="145.3" r="2.8" fill="#407235"/>
<circle cx="381.6" cy="145.1" r="3.7" fill="#265f1a"/>
<circle cx="380.6" cy="143.9" r="2.0" fill="#407235"/>
<circle cx="138.8" cy="109.6" r="3.8" fill="#367a28"/>
<circle cx="137.9" cy="108.5" r="2.1" fill="#4e8941"/>
<circle cx="421.5" cy="139.0" r="6.0" fill="#173d10"/>
<circle cx="420.0" cy="137.2" r="3.3" fill="#32542c"/>
<circle cx="238.7" cy="143.6" r="3.5" fill="#265f1a"/>
<circle cx="237.8" cy="142.6" r="1.9" fill="#407235"/>
<circle cx="137.2" cy="108.7" r="5.9" fill="#173d10"/>
<circle cx="135.8" cy="106.9" r="3.3" fill="#32542c"/>
<circle cx="145.9" cy="111.1" r="3.7" fill="#173d10"/>
<circle cx="144.9" cy="109.9" r="2.1" fill="#32542c"/>
<circle cx="-2.4" cy="123.0" r="5.7" fill="#42892c"/>
<circle cx="-3.9" cy="121.3" r="3.1" fill="#589745"/>
<circle cx="71.5" cy="116.8" r="3.1" fill="#42892c"/>
<circle cx="70.7" cy="115.8" r="1.7" fill="#589745"/>
<circle cx="62.4" cy="135.6" r="6.3" fill="#5a9a40"/>
<circle cx="60.8" cy="133.7" r="3.5" fill="#6aa453"/>
<circle cx="34.7" cy="117.5" r="5.0" fill="#5a9a40"/>
<circle cx="33.5" cy="116.0" r="2.8" fill="#6aa453"/>
<circle cx="64.5" cy="132.9" r="4.2" fill="#68a64c"/>
<circle cx="63.4" cy="131.6" r="2.3" fill="#77ae5d"/>
<circle cx="37.3" cy="124.6" r="5.3" fill="#68a64c"/>
<circle cx="36.0" cy="123.0" r="2.9" fill="#77ae5d"/>
<circle cx="31.9" cy="136.7" r="4.8" fill="#5a9a40"/>
<circle cx="30.7" cy="135.3" r="2.7" fill="#6aa453"/>
<circle cx="53.3" cy="110.4" r="6.9" fill="#68a64c"/>
<circle cx="51.6" cy="108.3" r="3.8" fill="#77ae5d"/>
<circle cx="46.2" cy="134.3" r="6.7" fill="#5a9a40"/>
<circle cx="44.5" cy="132.3" r="3.7" fill="#6aa453"/>
<circle cx="46.5" cy="108.9" r="4.8" fill="#5a9a40"/>
<circle cx="45.3" cy="107.5" r="2.6" fill="#6aa453"/>
<circle cx="197.9" cy="116.9" r="5.5" fill="#68a64c"/>
<circle cx="196.5" cy="115.2" r="3.0" fill="#77ae5d"/>
<circle cx="199.6" cy="132.6" r="4.9" fill="#68a64c"/>
<circle cx="198.4" cy="131.1" r="2.7" fill="#77ae5d"/>
<circle cx="176.4" cy="117.5" r="4.1" fill="#68a64c"/>
<circle cx="175.4" cy="116.3" r="2.3" fill="#77ae5d"/>
<circle cx="177.0" cy="120.9" r="4.0" fill="#68a64c"/>
<circle cx="175.9" cy="119.7" r="2.2" fill="#77ae5d"/>
<circle cx="196.4" cy="128.9" r="4.8" fill="#5a9a40"/>
<circle cx="195.2" cy="127.4" r="2.7" fill="#6aa453"/>
<circle cx="191.4" cy="131.7" r="5.0" fill="#68a64c"/>
<circle cx="190.1" cy="130.2" r="2.8" fill="#77ae5d"/>
<path d="M-10 148 Q100 146 160 148 L445 148 L445 172 L-10 172Z" fill="#86a05e"/>
<circle cx="86.9" cy="155.5" r="2.2" fill="#9aaa6c"/>
<circle cx="86.4" cy="154.8" r="1.2" fill="#a9b682"/>
<circle cx="99.4" cy="151.4" r="2.1" fill="#9aaa6c"/>
<circle cx="98.9" cy="150.8" r="1.2" fill="#a9b682"/>
<circle cx="44.5" cy="157.1" r="1.6" fill="#9aaa6c"/>
<circle cx="44.1" cy="156.6" r="0.9" fill="#a9b682"/>
<circle cx="58.8" cy="161.7" r="2.7" fill="#5d823c"/>
<circle cx="58.1" cy="160.9" r="1.5" fill="#759459"/>
<circle cx="65.8" cy="161.4" r="3.0" fill="#6d8f48"/>
<circle cx="65.1" cy="160.5" r="1.6" fill="#829f63"/>
<circle cx="56.8" cy="159.9" r="1.7" fill="#7a9a50"/>
<circle cx="56.4" cy="159.4" r="0.9" fill="#8da96a"/>
<circle cx="103.8" cy="153.9" r="1.6" fill="#7a9a50"/>
<circle cx="103.5" cy="153.5" r="0.9" fill="#8da96a"/>
<circle cx="73.6" cy="155.2" r="2.8" fill="#5d823c"/>
<circle cx="72.9" cy="154.4" r="1.5" fill="#759459"/>
<circle cx="107.1" cy="154.3" r="3.2" fill="#6d8f48"/>
<circle cx="106.3" cy="153.3" r="1.8" fill="#829f63"/>
<circle cx="17.6" cy="165.5" r="3.1" fill="#6d8f48"/>
<circle cx="16.9" cy="164.6" r="1.7" fill="#829f63"/>
<circle cx="125.1" cy="157.1" r="2.5" fill="#6d8f48"/>
<circle cx="124.5" cy="156.4" r="1.4" fill="#829f63"/>
<circle cx="54.0" cy="161.1" r="2.1" fill="#7a9a50"/>
<circle cx="53.4" cy="160.5" r="1.1" fill="#8da96a"/>
<circle cx="19.7" cy="155.5" r="2.1" fill="#6d8f48"/>
<circle cx="19.1" cy="154.8" r="1.1" fill="#829f63"/>
<circle cx="44.6" cy="150.5" r="2.4" fill="#5d823c"/>
<circle cx="44.0" cy="149.7" r="1.3" fill="#759459"/>
<circle cx="140.3" cy="150.5" r="2.7" fill="#6d8f48"/>
<circle cx="139.7" cy="149.7" r="1.5" fill="#829f63"/>
<circle cx="48.6" cy="150.4" r="1.5" fill="#5d823c"/>
<circle cx="48.2" cy="150.0" r="0.9" fill="#759459"/>
<circle cx="90.4" cy="154.4" r="2.0" fill="#5d823c"/>
<circle cx="89.9" cy="153.8" r="1.1" fill="#759459"/>
<circle cx="103.2" cy="154.1" r="1.5" fill="#5d823c"/>
<circle cx="102.8" cy="153.7" r="0.8" fill="#759459"/>
<circle cx="120.8" cy="156.4" r="3.1" fill="#5d823c"/>
<circle cx="120.1" cy="155.4" r="1.7" fill="#759459"/>
<circle cx="19.8" cy="164.7" r="2.9" fill="#5d823c"/>
<circle cx="19.0" cy="163.9" r="1.6" fill="#759459"/>
<circle cx="11.2" cy="163.9" r="2.7" fill="#5d823c"/>
<circle cx="10.6" cy="163.1" r="1.5" fill="#759459"/>
<circle cx="117.4" cy="161.7" r="2.5" fill="#6d8f48"/>
<circle cx="116.8" cy="160.9" r="1.4" fill="#829f63"/>
<circle cx="21.7" cy="165.3" r="2.0" fill="#9aaa6c"/>
<circle cx="21.2" cy="164.7" r="1.1" fill="#a9b682"/>
<circle cx="73.4" cy="161.3" r="1.9" fill="#7a9a50"/>
<circle cx="72.9" cy="160.7" r="1.0" fill="#8da96a"/>
<circle cx="27.4" cy="153.3" r="2.7" fill="#6d8f48"/>
<circle cx="26.7" cy="152.5" r="1.5" fill="#829f63"/>
<circle cx="148.8" cy="164.7" r="2.8" fill="#7a9a50"/>
<circle cx="148.1" cy="163.8" r="1.6" fill="#8da96a"/>
<circle cx="35.3" cy="153.8" r="2.4" fill="#6d8f48"/>
<circle cx="34.7" cy="153.0" r="1.3" fill="#829f63"/>
<circle cx="15.1" cy="157.4" r="1.6" fill="#9aaa6c"/>
<circle cx="14.7" cy="156.9" r="0.9" fill="#a9b682"/>
<circle cx="74.8" cy="164.4" r="2.3" fill="#9aaa6c"/>
<circle cx="74.2" cy="163.7" r="1.3" fill="#a9b682"/>
<circle cx="57.1" cy="157.2" r="3.1" fill="#6d8f48"/>
<circle cx="56.3" cy="156.3" r="1.7" fill="#829f63"/>
<circle cx="117.1" cy="151.9" r="2.1" fill="#7a9a50"/>
<circle cx="116.6" cy="151.3" r="1.1" fill="#8da96a"/>
<circle cx="70.0" cy="157.6" r="2.7" fill="#5d823c"/>
<circle cx="69.4" cy="156.8" r="1.5" fill="#759459"/>
<circle cx="37.4" cy="151.2" r="3.1" fill="#7a9a50"/>
<circle cx="36.6" cy="150.3" r="1.7" fill="#8da96a"/>
<circle cx="135.5" cy="150.8" r="2.0" fill="#6d8f48"/>
<circle cx="135.0" cy="150.2" r="1.1" fill="#829f63"/>
<circle cx="130.7" cy="165.8" r="2.2" fill="#5d823c"/>
<circle cx="130.1" cy="165.1" r="1.2" fill="#759459"/>
<circle cx="77.1" cy="150.3" r="2.1" fill="#7a9a50"/>
<circle cx="76.6" cy="149.6" r="1.2" fill="#8da96a"/>
<circle cx="56.1" cy="155.9" r="2.7" fill="#7a9a50"/>
<circle cx="55.4" cy="155.1" r="1.5" fill="#8da96a"/>
<circle cx="18.7" cy="153.1" r="3.0" fill="#9aaa6c"/>
<circle cx="18.0" cy="152.3" r="1.6" fill="#a9b682"/>
<circle cx="59.4" cy="151.8" r="2.9" fill="#6d8f48"/>
<circle cx="58.6" cy="150.9" r="1.6" fill="#829f63"/>
<circle cx="123.4" cy="164.6" r="2.7" fill="#5d823c"/>
<circle cx="122.7" cy="163.8" r="1.5" fill="#759459"/>
<path d="M40 165h88l2 12h-92z" fill="#62b038"/>
<path d="M146 150 Q150 145 175 146 L245 145 L245 182 L190 184 Q160 183 150 176Z" fill="#bdb9aa"/>
</g>
<g filter="url(#bl2)"><path d="M151 160l4-5h14l4 5v10h-22z" fill="#686b6b"/><rect x="154" y="165" width="18" height="6" fill="#989b9c"/><rect x="176" y="152" width="30" height="8" fill="#6d7074"/><rect x="176" y="148" width="26" height="4" fill="#dedede"/><rect x="158" y="169" width="3" height="6" fill="#e8eef4"/><rect x="183" y="162" width="4" height="4" fill="#b04040"/><rect x="204" y="166" width="6" height="4" fill="#eeeef5"/><rect x="190" y="172" width="4" height="3" fill="#2a5ab0"/><rect x="160" y="178" width="14" height="4" fill="#8a3a2a"/><rect x="185" y="155" width="1.5" height="20" fill="#777"/></g>
<g filter="url(#bl1)">
<circle cx="152.5" cy="155.2" r="3.2" fill="#4a8a34"/>
<circle cx="151.7" cy="154.2" r="1.8" fill="#659b52"/>
<circle cx="165.5" cy="181.9" r="3.6" fill="#4a8a34"/>
<circle cx="164.6" cy="180.9" r="2.0" fill="#659b52"/>
<circle cx="155.0" cy="158.4" r="4.0" fill="#3f7e28"/>
<circle cx="154.0" cy="157.2" r="2.2" fill="#5b9148"/>
<circle cx="157.2" cy="146.2" r="4.0" fill="#4a8a34"/>
<circle cx="156.2" cy="145.0" r="2.2" fill="#659b52"/>
<circle cx="147.1" cy="161.8" r="3.4" fill="#4a8a34"/>
<circle cx="146.2" cy="160.7" r="1.9" fill="#659b52"/>
<circle cx="157.0" cy="161.9" r="3.3" fill="#4a8a34"/>
<circle cx="156.1" cy="160.9" r="1.8" fill="#659b52"/>
<circle cx="162.6" cy="176.9" r="2.7" fill="#4a8a34"/>
<circle cx="161.9" cy="176.1" r="1.5" fill="#659b52"/>
<circle cx="148.0" cy="181.3" r="4.2" fill="#4a8a34"/>
<circle cx="146.9" cy="180.0" r="2.3" fill="#659b52"/>
<circle cx="149.5" cy="179.7" r="4.5" fill="#3f7e28"/>
<circle cx="148.4" cy="178.4" r="2.5" fill="#5b9148"/>
<circle cx="167.8" cy="163.5" r="3.1" fill="#3f7e28"/>
<circle cx="167.0" cy="162.6" r="1.7" fill="#5b9148"/>
<circle cx="205.4" cy="175.5" r="3.6" fill="#6aa848"/>
<circle cx="204.5" cy="174.4" r="2.0" fill="#80b563"/>
<circle cx="222.9" cy="172.2" r="2.8" fill="#4a8a34"/>
<circle cx="222.2" cy="171.4" r="1.6" fill="#659b52"/>
<circle cx="216.3" cy="170.8" r="3.8" fill="#6aa848"/>
<circle cx="215.4" cy="169.7" r="2.1" fill="#80b563"/>
<circle cx="208.1" cy="175.8" r="3.4" fill="#6aa848"/>
<circle cx="207.2" cy="174.8" r="1.9" fill="#80b563"/>
<circle cx="214.9" cy="173.4" r="3.9" fill="#4a8a34"/>
<circle cx="213.9" cy="172.2" r="2.1" fill="#659b52"/>
<circle cx="225.5" cy="181.7" r="3.1" fill="#6aa848"/>
<circle cx="224.7" cy="180.7" r="1.7" fill="#80b563"/>
<path d="M152 176h90v34h-90z" fill="#5f9a42"/>
<circle cx="164.0" cy="190.5" r="4.1" fill="#3f7e28"/>
<circle cx="162.9" cy="189.3" r="2.3" fill="#659753"/>
<circle cx="221.6" cy="194.6" r="4.3" fill="#7db060"/>
<circle cx="220.5" cy="193.3" r="2.3" fill="#97bf7f"/>
<circle cx="218.7" cy="191.5" r="3.0" fill="#3f7e28"/>
<circle cx="217.9" cy="190.6" r="1.7" fill="#659753"/>
<circle cx="180.2" cy="197.9" r="2.3" fill="#7db060"/>
<circle cx="179.6" cy="197.2" r="1.3" fill="#97bf7f"/>
<circle cx="196.7" cy="177.2" r="3.8" fill="#3f7e28"/>
<circle cx="195.8" cy="176.0" r="2.1" fill="#659753"/>
<circle cx="209.3" cy="198.7" r="2.4" fill="#4d8a34"/>
<circle cx="208.7" cy="198.0" r="1.3" fill="#70a15c"/>
<circle cx="218.9" cy="203.7" r="2.5" fill="#3f7e28"/>
<circle cx="218.2" cy="203.0" r="1.4" fill="#659753"/>
<circle cx="166.0" cy="180.6" r="4.3" fill="#7db060"/>
<circle cx="164.9" cy="179.3" r="2.4" fill="#97bf7f"/>
<circle cx="188.6" cy="176.5" r="2.7" fill="#4d8a34"/>
<circle cx="188.0" cy="175.7" r="1.5" fill="#70a15c"/>
<circle cx="184.8" cy="183.6" r="2.2" fill="#3f7e28"/>
<circle cx="184.2" cy="182.9" r="1.2" fill="#659753"/>
<circle cx="166.3" cy="205.6" r="3.4" fill="#4d8a34"/>
<circle cx="165.5" cy="204.6" r="1.8" fill="#70a15c"/>
<circle cx="160.4" cy="201.0" r="3.5" fill="#6aa848"/>
<circle cx="159.5" cy="199.9" r="1.9" fill="#87b96c"/>
<circle cx="200.6" cy="176.6" r="2.2" fill="#7db060"/>
<circle cx="200.1" cy="175.9" r="1.2" fill="#97bf7f"/>
<circle cx="209.9" cy="206.6" r="3.7" fill="#6aa848"/>
<circle cx="208.9" cy="205.6" r="2.0" fill="#87b96c"/>
<circle cx="184.1" cy="179.4" r="4.0" fill="#3f7e28"/>
<circle cx="183.1" cy="178.2" r="2.2" fill="#659753"/>
<circle cx="159.1" cy="192.4" r="3.4" fill="#4d8a34"/>
<circle cx="158.3" cy="191.4" r="1.8" fill="#70a15c"/>
<circle cx="193.6" cy="192.1" r="3.1" fill="#4d8a34"/>
<circle cx="192.8" cy="191.2" r="1.7" fill="#70a15c"/>
<circle cx="192.3" cy="193.9" r="3.4" fill="#6aa848"/>
<circle cx="191.5" cy="192.9" r="1.9" fill="#87b96c"/>
<circle cx="180.9" cy="195.3" r="4.0" fill="#7db060"/>
<circle cx="179.9" cy="194.1" r="2.2" fill="#97bf7f"/>
<circle cx="193.8" cy="180.8" r="2.7" fill="#7db060"/>
<circle cx="193.1" cy="179.9" r="1.5" fill="#97bf7f"/>
<circle cx="152.3" cy="188.8" r="2.8" fill="#3f7e28"/>
<circle cx="151.6" cy="188.0" r="1.6" fill="#659753"/>
<circle cx="183.7" cy="186.3" r="2.3" fill="#3f7e28"/>
<circle cx="183.1" cy="185.6" r="1.3" fill="#659753"/>
<circle cx="220.6" cy="200.7" r="2.4" fill="#7db060"/>
<circle cx="220.0" cy="199.9" r="1.3" fill="#97bf7f"/>
<circle cx="153.2" cy="189.4" r="2.8" fill="#3f7e28"/>
<circle cx="152.5" cy="188.6" r="1.6" fill="#659753"/>
<circle cx="176.7" cy="185.4" r="2.4" fill="#4d8a34"/>
<circle cx="176.1" cy="184.7" r="1.3" fill="#70a15c"/>
<circle cx="162.7" cy="193.1" r="4.1" fill="#7db060"/>
<circle cx="161.6" cy="191.9" r="2.3" fill="#97bf7f"/>
<circle cx="160.8" cy="198.9" r="4.4" fill="#4d8a34"/>
<circle cx="159.7" cy="197.6" r="2.4" fill="#70a15c"/>
<circle cx="186.3" cy="194.6" r="3.7" fill="#3f7e28"/>
<circle cx="185.4" cy="193.5" r="2.0" fill="#659753"/>
<circle cx="186.5" cy="200.2" r="2.1" fill="#6aa848"/>
<circle cx="186.0" cy="199.6" r="1.1" fill="#87b96c"/>
<circle cx="215.8" cy="187.9" r="3.5" fill="#3f7e28"/>
<circle cx="214.9" cy="186.9" r="1.9" fill="#659753"/>
<circle cx="184.7" cy="181.6" r="4.3" fill="#4d8a34"/>
<circle cx="183.6" cy="180.3" r="2.4" fill="#70a15c"/>
<circle cx="181.2" cy="200.1" r="3.3" fill="#4d8a34"/>
<circle cx="180.4" cy="199.1" r="1.8" fill="#70a15c"/>
<circle cx="168.2" cy="187.0" r="4.3" fill="#7db060"/>
<circle cx="167.2" cy="185.8" r="2.4" fill="#97bf7f"/>
<circle cx="227.9" cy="194.1" r="2.3" fill="#7db060"/>
<circle cx="227.4" cy="193.4" r="1.3" fill="#97bf7f"/>
<circle cx="225.0" cy="183.0" r="3.1" fill="#7db060"/>
<circle cx="224.2" cy="182.0" r="1.7" fill="#97bf7f"/>
<circle cx="178.0" cy="186.9" r="3.3" fill="#6aa848"/>
<circle cx="177.1" cy="185.9" r="1.8" fill="#87b96c"/>
<circle cx="157.4" cy="197.7" r="3.2" fill="#4d8a34"/>
<circle cx="156.5" cy="196.7" r="1.8" fill="#70a15c"/>
<circle cx="202.7" cy="201.0" r="3.4" fill="#4d8a34"/>
<circle cx="201.9" cy="200.0" r="1.9" fill="#70a15c"/>
<circle cx="210.6" cy="199.9" r="4.0" fill="#6aa848"/>
<circle cx="209.5" cy="198.7" r="2.2" fill="#87b96c"/>
<circle cx="167.8" cy="201.0" r="4.1" fill="#4d8a34"/>
<circle cx="166.8" cy="199.8" r="2.3" fill="#70a15c"/>
<circle cx="157.7" cy="176.0" r="3.5" fill="#6aa848"/>
<circle cx="156.8" cy="175.0" r="1.9" fill="#87b96c"/>
<circle cx="187.1" cy="206.1" r="2.0" fill="#4d8a34"/>
<circle cx="186.6" cy="205.5" r="1.1" fill="#70a15c"/>
<circle cx="191.3" cy="179.6" r="3.4" fill="#7db060"/>
<circle cx="190.4" cy="178.6" r="1.9" fill="#97bf7f"/>
<circle cx="163.3" cy="182.0" r="4.0" fill="#7db060"/>
<circle cx="162.3" cy="180.8" r="2.2" fill="#97bf7f"/>
<circle cx="203.2" cy="184.0" r="2.2" fill="#6aa848"/>
<circle cx="202.6" cy="183.3" r="1.2" fill="#87b96c"/>
<circle cx="197.9" cy="196.3" r="4.1" fill="#3f7e28"/>
<circle cx="196.9" cy="195.1" r="2.2" fill="#659753"/>
<circle cx="202.2" cy="191.2" r="4.3" fill="#3f7e28"/>
<circle cx="201.2" cy="190.0" r="2.3" fill="#659753"/>
<circle cx="183.1" cy="199.9" r="3.3" fill="#3f7e28"/>
<circle cx="182.3" cy="198.9" r="1.8" fill="#659753"/>
<circle cx="152.7" cy="195.3" r="3.5" fill="#3f7e28"/>
<circle cx="151.8" cy="194.3" r="1.9" fill="#659753"/>
<circle cx="217.2" cy="196.1" r="3.9" fill="#7db060"/>
<circle cx="216.2" cy="194.9" r="2.1" fill="#97bf7f"/>
<circle cx="168.9" cy="183.7" r="2.4" fill="#a8b49a"/>
<circle cx="168.3" cy="183.0" r="1.3" fill="#b0bba4"/>
<circle cx="168.6" cy="201.8" r="2.2" fill="#b8c0ae"/>
<circle cx="168.1" cy="201.1" r="1.2" fill="#bfc6b6"/>
<circle cx="165.2" cy="192.3" r="2.3" fill="#a8b49a"/>
<circle cx="164.7" cy="191.6" r="1.3" fill="#b0bba4"/>
<circle cx="170.5" cy="195.3" r="2.9" fill="#b8c0ae"/>
<circle cx="169.8" cy="194.4" r="1.6" fill="#bfc6b6"/>
<circle cx="166.8" cy="183.3" r="2.6" fill="#a8b49a"/>
<circle cx="166.1" cy="182.5" r="1.4" fill="#b0bba4"/>
<circle cx="167.0" cy="187.8" r="2.5" fill="#a8b49a"/>
<circle cx="166.4" cy="187.1" r="1.4" fill="#b0bba4"/>
<path d="M138 214 Q170 204 240 205 L240 250 L138 250Z" fill="#ab9a75"/>
<path d="M138 214 Q170 204 240 205 L240 220 L148 223Z" fill="#d9d0bb"/>
<circle cx="157.6" cy="236.7" r="2.9" fill="#8a7a5a"/>
<circle cx="156.8" cy="235.9" r="1.6" fill="#95876a"/>
<circle cx="216.7" cy="236.1" r="2.5" fill="#8a7a5a"/>
<circle cx="216.1" cy="235.4" r="1.4" fill="#95876a"/>
<circle cx="190.5" cy="226.4" r="1.8" fill="#8a7a5a"/>
<circle cx="190.0" cy="225.8" r="1.0" fill="#95876a"/>
<circle cx="200.7" cy="238.1" r="2.3" fill="#9a8a68"/>
<circle cx="200.2" cy="237.4" r="1.3" fill="#a49577"/>
<circle cx="198.5" cy="227.0" r="2.0" fill="#9a8a68"/>
<circle cx="198.0" cy="226.4" r="1.1" fill="#a49577"/>
<circle cx="204.6" cy="236.5" r="2.7" fill="#8a7a5a"/>
<circle cx="203.9" cy="235.7" r="1.5" fill="#95876a"/>
<circle cx="226.4" cy="232.2" r="1.8" fill="#b8a882"/>
<circle cx="226.0" cy="231.6" r="1.0" fill="#bfb08e"/>
<circle cx="158.8" cy="242.5" r="2.3" fill="#b8a882"/>
<circle cx="158.2" cy="241.8" r="1.2" fill="#bfb08e"/>
<circle cx="162.6" cy="226.1" r="2.1" fill="#b8a882"/>
<circle cx="162.0" cy="225.5" r="1.1" fill="#bfb08e"/>
<circle cx="187.3" cy="229.6" r="2.9" fill="#b8a882"/>
<circle cx="186.6" cy="228.7" r="1.6" fill="#bfb08e"/>
<circle cx="182.4" cy="235.3" r="2.7" fill="#b8a882"/>
<circle cx="181.7" cy="234.5" r="1.5" fill="#bfb08e"/>
<circle cx="174.4" cy="227.2" r="2.6" fill="#8a7a5a"/>
<circle cx="173.7" cy="226.4" r="1.4" fill="#95876a"/>
<circle cx="206.4" cy="244.3" r="2.2" fill="#b8a882"/>
<circle cx="205.8" cy="243.6" r="1.2" fill="#bfb08e"/>
<circle cx="154.3" cy="226.6" r="2.5" fill="#8a7a5a"/>
<circle cx="153.7" cy="225.8" r="1.4" fill="#95876a"/>
<circle cx="172.9" cy="234.9" r="1.5" fill="#8a7a5a"/>
<circle cx="172.6" cy="234.5" r="0.8" fill="#95876a"/>
<circle cx="161.3" cy="236.1" r="2.4" fill="#9a8a68"/>
<circle cx="160.7" cy="235.4" r="1.3" fill="#a49577"/>
<circle cx="161.6" cy="239.1" r="1.9" fill="#8a7a5a"/>
<circle cx="161.2" cy="238.6" r="1.0" fill="#95876a"/>
<circle cx="187.5" cy="233.6" r="1.7" fill="#b8a882"/>
<circle cx="187.1" cy="233.1" r="0.9" fill="#bfb08e"/>
<circle cx="187.6" cy="235.2" r="2.0" fill="#b8a882"/>
<circle cx="187.1" cy="234.6" r="1.1" fill="#bfb08e"/>
<circle cx="208.0" cy="237.1" r="1.7" fill="#b8a882"/>
<circle cx="207.6" cy="236.5" r="1.0" fill="#bfb08e"/>
<circle cx="220.4" cy="244.0" r="2.2" fill="#b8a882"/>
<circle cx="219.8" cy="243.3" r="1.2" fill="#bfb08e"/>
<circle cx="152.2" cy="235.8" r="2.1" fill="#9a8a68"/>
<circle cx="151.7" cy="235.2" r="1.2" fill="#a49577"/>
<circle cx="207.6" cy="234.3" r="1.7" fill="#8a7a5a"/>
<circle cx="207.1" cy="233.8" r="0.9" fill="#95876a"/>
<circle cx="222.4" cy="240.6" r="1.7" fill="#8a7a5a"/>
<circle cx="222.0" cy="240.1" r="0.9" fill="#95876a"/>
<circle cx="194.0" cy="234.5" r="1.6" fill="#b8a882"/>
<circle cx="193.6" cy="234.0" r="0.9" fill="#bfb08e"/>
<circle cx="160.0" cy="231.4" r="2.2" fill="#9a8a68"/>
<circle cx="159.5" cy="230.7" r="1.2" fill="#a49577"/>
<circle cx="190.4" cy="236.0" r="1.7" fill="#9a8a68"/>
<circle cx="190.0" cy="235.4" r="0.9" fill="#a49577"/>
<circle cx="155.6" cy="231.9" r="2.0" fill="#b8a882"/>
<circle cx="155.1" cy="231.3" r="1.1" fill="#bfb08e"/>
<circle cx="186.0" cy="232.3" r="1.9" fill="#8a7a5a"/>
<circle cx="185.6" cy="231.8" r="1.0" fill="#95876a"/>
<circle cx="224.9" cy="227.7" r="1.7" fill="#9a8a68"/>
<circle cx="224.4" cy="227.2" r="1.0" fill="#a49577"/>
<path d="M-10 118 Q20 110 42 122 Q54 150 50 175 L56 250 L-10 250Z" fill="#1f4216"/>
<circle cx="31.4" cy="217.3" r="4.9" fill="#2a4d1e"/>
<circle cx="30.1" cy="215.8" r="2.7" fill="#3b5b30"/>
<circle cx="47.9" cy="169.9" r="4.1" fill="#2f5a22"/>
<circle cx="46.9" cy="168.6" r="2.2" fill="#3f6733"/>
<circle cx="31.6" cy="182.4" r="2.7" fill="#3a6a2a"/>
<circle cx="31.0" cy="181.6" r="1.5" fill="#49753b"/>
<circle cx="10.0" cy="182.2" r="3.6" fill="#3a6a2a"/>
<circle cx="9.1" cy="181.1" r="2.0" fill="#49753b"/>
<circle cx="37.0" cy="140.2" r="4.4" fill="#3a6a2a"/>
<circle cx="35.9" cy="138.9" r="2.4" fill="#49753b"/>
<circle cx="4.5" cy="142.0" r="3.1" fill="#44783a"/>
<circle cx="3.7" cy="141.1" r="1.7" fill="#528249"/>
<circle cx="46.1" cy="149.5" r="3.5" fill="#2a4d1e"/>
<circle cx="45.2" cy="148.5" r="2.0" fill="#3b5b30"/>
<circle cx="16.7" cy="236.8" r="3.1" fill="#1f3f16"/>
<circle cx="15.9" cy="235.9" r="1.7" fill="#304e28"/>
<circle cx="-2.3" cy="148.3" r="5.2" fill="#3a6a2a"/>
<circle cx="-3.6" cy="146.7" r="2.8" fill="#49753b"/>
<circle cx="37.3" cy="228.5" r="5.1" fill="#3a6a2a"/>
<circle cx="36.1" cy="227.0" r="2.8" fill="#49753b"/>
<circle cx="2.3" cy="209.0" r="3.6" fill="#1f3f16"/>
<circle cx="1.3" cy="207.9" r="2.0" fill="#304e28"/>
<circle cx="40.5" cy="181.7" r="4.4" fill="#2f5a22"/>
<circle cx="39.4" cy="180.4" r="2.4" fill="#3f6733"/>
<circle cx="25.9" cy="129.7" r="4.7" fill="#44783a"/>
<circle cx="24.7" cy="128.3" r="2.6" fill="#528249"/>
<circle cx="20.6" cy="221.7" r="2.8" fill="#3a6a2a"/>
<circle cx="19.9" cy="220.8" r="1.5" fill="#49753b"/>
<circle cx="37.4" cy="175.3" r="2.7" fill="#2f5a22"/>
<circle cx="36.7" cy="174.4" r="1.5" fill="#3f6733"/>
<circle cx="9.6" cy="216.0" r="3.5" fill="#1f3f16"/>
<circle cx="8.7" cy="214.9" r="2.0" fill="#304e28"/>
<circle cx="18.2" cy="222.6" r="5.0" fill="#2a4d1e"/>
<circle cx="17.0" cy="221.1" r="2.7" fill="#3b5b30"/>
<circle cx="45.3" cy="240.0" r="4.7" fill="#44783a"/>
<circle cx="44.1" cy="238.6" r="2.6" fill="#528249"/>
<circle cx="30.5" cy="129.3" r="4.0" fill="#26461a"/>
<circle cx="29.5" cy="128.1" r="2.2" fill="#37542c"/>
<circle cx="10.0" cy="127.3" r="4.9" fill="#26461a"/>
<circle cx="8.7" cy="125.8" r="2.7" fill="#37542c"/>
<circle cx="4.0" cy="142.2" r="3.8" fill="#3a6a2a"/>
<circle cx="3.1" cy="141.1" r="2.1" fill="#49753b"/>
<circle cx="26.1" cy="139.5" r="4.9" fill="#2f5a22"/>
<circle cx="24.9" cy="138.0" r="2.7" fill="#3f6733"/>
<circle cx="-1.4" cy="196.0" r="5.1" fill="#2a4d1e"/>
<circle cx="-2.7" cy="194.5" r="2.8" fill="#3b5b30"/>
<circle cx="40.7" cy="204.9" r="5.4" fill="#1f3f16"/>
<circle cx="39.4" cy="203.3" r="2.9" fill="#304e28"/>
<circle cx="39.8" cy="158.2" r="5.1" fill="#2a4d1e"/>
<circle cx="38.5" cy="156.7" r="2.8" fill="#3b5b30"/>
<circle cx="2.1" cy="129.3" r="3.3" fill="#26461a"/>
<circle cx="1.3" cy="128.4" r="1.8" fill="#37542c"/>
<circle cx="46.2" cy="210.2" r="3.4" fill="#3a6a2a"/>
<circle cx="45.4" cy="209.2" r="1.9" fill="#49753b"/>
<circle cx="44.4" cy="161.4" r="5.2" fill="#44783a"/>
<circle cx="43.1" cy="159.8" r="2.8" fill="#528249"/>
<circle cx="-0.3" cy="129.5" r="5.2" fill="#44783a"/>
<circle cx="-1.7" cy="127.9" r="2.9" fill="#528249"/>
<circle cx="25.8" cy="194.2" r="3.9" fill="#1f3f16"/>
<circle cx="24.8" cy="193.0" r="2.2" fill="#304e28"/>
<circle cx="36.4" cy="168.5" r="4.8" fill="#44783a"/>
<circle cx="35.1" cy="167.0" r="2.7" fill="#528249"/>
<circle cx="13.6" cy="154.3" r="4.9" fill="#3a6a2a"/>
<circle cx="12.4" cy="152.8" r="2.7" fill="#49753b"/>
<circle cx="10.9" cy="237.9" r="4.1" fill="#2a4d1e"/>
<circle cx="9.8" cy="236.6" r="2.3" fill="#3b5b30"/>
<circle cx="1.8" cy="177.9" r="2.6" fill="#2a4d1e"/>
<circle cx="1.1" cy="177.1" r="1.4" fill="#3b5b30"/>
<circle cx="1.7" cy="163.4" r="3.7" fill="#1f3f16"/>
<circle cx="0.8" cy="162.3" r="2.0" fill="#304e28"/>
<circle cx="31.2" cy="220.6" r="3.9" fill="#1f3f16"/>
<circle cx="30.2" cy="219.4" r="2.1" fill="#304e28"/>
<circle cx="35.0" cy="207.8" r="4.8" fill="#3a6a2a"/>
<circle cx="33.8" cy="206.3" r="2.6" fill="#49753b"/>
<circle cx="21.8" cy="136.6" r="3.2" fill="#2f5a22"/>
<circle cx="21.0" cy="135.6" r="1.7" fill="#3f6733"/>
<circle cx="0.8" cy="144.7" r="2.8" fill="#2f5a22"/>
<circle cx="0.1" cy="143.9" r="1.5" fill="#3f6733"/>
<circle cx="16.8" cy="239.3" r="4.4" fill="#44783a"/>
<circle cx="15.7" cy="237.9" r="2.4" fill="#528249"/>
<circle cx="39.0" cy="181.6" r="3.8" fill="#1f3f16"/>
<circle cx="38.1" cy="180.5" r="2.1" fill="#304e28"/>
<circle cx="32.8" cy="200.1" r="2.6" fill="#2f5a22"/>
<circle cx="32.1" cy="199.3" r="1.4" fill="#3f6733"/>
<circle cx="11.9" cy="162.6" r="5.1" fill="#1f3f16"/>
<circle cx="10.6" cy="161.0" r="2.8" fill="#304e28"/>
<circle cx="14.0" cy="184.5" r="3.2" fill="#44783a"/>
<circle cx="13.2" cy="183.5" r="1.8" fill="#528249"/>
<circle cx="34.4" cy="173.9" r="4.2" fill="#26461a"/>
<circle cx="33.4" cy="172.7" r="2.3" fill="#37542c"/>
<circle cx="15.0" cy="146.9" r="3.3" fill="#2f5a22"/>
<circle cx="14.2" cy="146.0" r="1.8" fill="#3f6733"/>
<circle cx="28.3" cy="159.4" r="4.2" fill="#2f5a22"/>
<circle cx="27.3" cy="158.1" r="2.3" fill="#3f6733"/>
<circle cx="-0.1" cy="132.1" r="4.0" fill="#3a6a2a"/>
<circle cx="-1.1" cy="131.0" r="2.2" fill="#49753b"/>
<circle cx="-1.5" cy="159.6" r="5.1" fill="#26461a"/>
<circle cx="-2.8" cy="158.0" r="2.8" fill="#37542c"/>
<circle cx="5.5" cy="146.1" r="4.0" fill="#3a6a2a"/>
<circle cx="4.5" cy="144.9" r="2.2" fill="#49753b"/>
<circle cx="40.7" cy="165.6" r="5.3" fill="#44783a"/>
<circle cx="39.4" cy="164.0" r="2.9" fill="#528249"/>
<circle cx="47.1" cy="224.9" r="5.2" fill="#2f5a22"/>
<circle cx="45.8" cy="223.3" r="2.9" fill="#3f6733"/>
<circle cx="13.4" cy="204.3" r="2.9" fill="#1f3f16"/>
<circle cx="12.6" cy="203.4" r="1.6" fill="#304e28"/>
<circle cx="38.8" cy="169.5" r="5.2" fill="#26461a"/>
<circle cx="37.5" cy="168.0" r="2.9" fill="#37542c"/>
<circle cx="44.7" cy="145.2" r="4.3" fill="#26461a"/>
<circle cx="43.6" cy="143.9" r="2.4" fill="#37542c"/>
<circle cx="12.7" cy="232.9" r="4.3" fill="#2a4d1e"/>
<circle cx="11.6" cy="231.6" r="2.4" fill="#3b5b30"/>
<circle cx="-0.7" cy="182.6" r="4.7" fill="#2f5a22"/>
<circle cx="-1.9" cy="181.2" r="2.6" fill="#3f6733"/>
<circle cx="17.8" cy="237.6" r="4.9" fill="#1f3f16"/>
<circle cx="16.6" cy="236.1" r="2.7" fill="#304e28"/>
<circle cx="35.8" cy="215.7" r="4.5" fill="#3a6a2a"/>
<circle cx="34.6" cy="214.4" r="2.4" fill="#49753b"/>
<circle cx="38.4" cy="153.0" r="5.2" fill="#2a4d1e"/>
<circle cx="37.1" cy="151.4" r="2.8" fill="#3b5b30"/>
<circle cx="41.0" cy="168.4" r="2.8" fill="#2a4d1e"/>
<circle cx="40.3" cy="167.6" r="1.5" fill="#3b5b30"/>
<circle cx="33.4" cy="225.1" r="3.1" fill="#26461a"/>
<circle cx="32.6" cy="224.2" r="1.7" fill="#37542c"/>
<circle cx="23.8" cy="193.0" r="3.4" fill="#2a4d1e"/>
<circle cx="22.9" cy="192.0" r="1.9" fill="#3b5b30"/>
<circle cx="20.9" cy="174.3" r="5.2" fill="#1f3f16"/>
<circle cx="19.6" cy="172.7" r="2.8" fill="#304e28"/>
<circle cx="33.4" cy="243.4" r="3.3" fill="#2a4d1e"/>
<circle cx="32.5" cy="242.4" r="1.8" fill="#3b5b30"/>
<circle cx="7.5" cy="150.0" r="2.6" fill="#3a6a2a"/>
<circle cx="6.9" cy="149.2" r="1.4" fill="#49753b"/>
<circle cx="28.0" cy="138.5" r="5.0" fill="#1f3f16"/>
<circle cx="26.7" cy="137.0" r="2.8" fill="#304e28"/>
<circle cx="-1.3" cy="234.0" r="3.5" fill="#2a4d1e"/>
<circle cx="-2.2" cy="232.9" r="1.9" fill="#3b5b30"/>
<circle cx="45.1" cy="163.9" r="4.2" fill="#2a4d1e"/>
<circle cx="44.0" cy="162.6" r="2.3" fill="#3b5b30"/>
<circle cx="15.6" cy="238.9" r="5.4" fill="#1f3f16"/>
<circle cx="14.3" cy="237.3" r="2.9" fill="#304e28"/>
<circle cx="3.6" cy="164.1" r="3.6" fill="#2a4d1e"/>
<circle cx="2.7" cy="163.0" r="2.0" fill="#3b5b30"/>
<circle cx="32.4" cy="218.0" r="4.3" fill="#44783a"/>
<circle cx="31.3" cy="216.7" r="2.4" fill="#528249"/>
<circle cx="12.9" cy="240.3" r="4.4" fill="#44783a"/>
<circle cx="11.8" cy="239.0" r="2.4" fill="#528249"/>
<circle cx="4.1" cy="244.2" r="5.0" fill="#3a6a2a"/>
<circle cx="2.9" cy="242.7" r="2.7" fill="#49753b"/>
<circle cx="41.4" cy="208.0" r="4.9" fill="#26461a"/>
<circle cx="40.2" cy="206.6" r="2.7" fill="#37542c"/>
<circle cx="-3.2" cy="242.8" r="3.1" fill="#2a4d1e"/>
<circle cx="-3.9" cy="241.9" r="1.7" fill="#3b5b30"/>
<circle cx="35.1" cy="227.0" r="4.3" fill="#2f5a22"/>
<circle cx="34.0" cy="225.7" r="2.4" fill="#3f6733"/>
<circle cx="16.0" cy="132.7" r="2.5" fill="#3a6a2a"/>
<circle cx="15.4" cy="131.9" r="1.4" fill="#49753b"/>
<circle cx="24.8" cy="204.2" r="5.4" fill="#2f5a22"/>
<circle cx="23.5" cy="202.6" r="3.0" fill="#3f6733"/>
<circle cx="0.9" cy="210.2" r="4.1" fill="#1f3f16"/>
<circle cx="-0.1" cy="208.9" r="2.2" fill="#304e28"/>
<circle cx="10.5" cy="235.5" r="3.3" fill="#1f3f16"/>
<circle cx="9.6" cy="234.5" r="1.8" fill="#304e28"/>
<circle cx="38.5" cy="160.7" r="3.6" fill="#26461a"/>
<circle cx="37.7" cy="159.7" r="2.0" fill="#37542c"/>
<circle cx="24.7" cy="151.2" r="2.7" fill="#2a4d1e"/>
<circle cx="24.0" cy="150.4" r="1.5" fill="#3b5b30"/>
<circle cx="40.1" cy="171.8" r="3.4" fill="#1f3f16"/>
<circle cx="39.3" cy="170.8" r="1.9" fill="#304e28"/>
<circle cx="16.8" cy="125.5" r="4.8" fill="#2f5a22"/>
<circle cx="15.6" cy="124.1" r="2.6" fill="#3f6733"/>
<circle cx="37.5" cy="133.1" r="3.1" fill="#44783a"/>
<circle cx="36.7" cy="132.2" r="1.7" fill="#528249"/>
<circle cx="45.1" cy="175.1" r="5.2" fill="#2f5a22"/>
<circle cx="43.8" cy="173.6" r="2.9" fill="#3f6733"/>
<circle cx="46.0" cy="169.4" r="2.9" fill="#2a4d1e"/>
<circle cx="45.3" cy="168.6" r="1.6" fill="#3b5b30"/>
<circle cx="18.4" cy="177.8" r="3.6" fill="#26461a"/>
<circle cx="17.5" cy="176.7" r="2.0" fill="#37542c"/>
<circle cx="20.6" cy="167.1" r="3.5" fill="#2a4d1e"/>
<circle cx="19.7" cy="166.0" r="1.9" fill="#3b5b30"/>
<circle cx="1.3" cy="231.4" r="5.2" fill="#3a6a2a"/>
<circle cx="0.0" cy="229.9" r="2.9" fill="#49753b"/>
<circle cx="47.1" cy="162.0" r="5.4" fill="#44783a"/>
<circle cx="45.7" cy="160.4" r="3.0" fill="#528249"/>
<circle cx="25.5" cy="211.0" r="4.8" fill="#44783a"/>
<circle cx="24.3" cy="209.5" r="2.7" fill="#528249"/>
<circle cx="20.2" cy="209.0" r="3.3" fill="#26461a"/>
<circle cx="19.3" cy="208.0" r="1.8" fill="#37542c"/>
<circle cx="35.0" cy="155.3" r="4.3" fill="#2f5a22"/>
<circle cx="33.9" cy="154.0" r="2.3" fill="#3f6733"/>
<circle cx="14.7" cy="149.3" r="5.1" fill="#1f3f16"/>
<circle cx="13.4" cy="147.8" r="2.8" fill="#304e28"/>
<circle cx="26.9" cy="217.1" r="2.8" fill="#3a6a2a"/>
<circle cx="26.2" cy="216.3" r="1.5" fill="#49753b"/>
<circle cx="16.4" cy="139.4" r="3.7" fill="#26461a"/>
<circle cx="15.5" cy="138.3" r="2.0" fill="#37542c"/>
<circle cx="37.0" cy="180.0" r="5.4" fill="#3a6a2a"/>
<circle cx="35.7" cy="178.4" r="2.9" fill="#49753b"/>
<circle cx="4.2" cy="201.1" r="4.4" fill="#2f5a22"/>
<circle cx="3.1" cy="199.8" r="2.4" fill="#3f6733"/>
<circle cx="44.1" cy="178.1" r="4.5" fill="#3a6a2a"/>
<circle cx="43.0" cy="176.7" r="2.5" fill="#49753b"/>
<circle cx="31.3" cy="200.0" r="4.0" fill="#3a6a2a"/>
<circle cx="30.3" cy="198.8" r="2.2" fill="#49753b"/>
<circle cx="24.0" cy="136.9" r="4.3" fill="#2a4d1e"/>
<circle cx="22.9" cy="135.6" r="2.3" fill="#3b5b30"/>
<circle cx="16.1" cy="212.8" r="4.3" fill="#3a6a2a"/>
<circle cx="15.0" cy="211.5" r="2.4" fill="#49753b"/>
<circle cx="33.4" cy="176.9" r="5.3" fill="#2a4d1e"/>
<circle cx="32.1" cy="175.3" r="2.9" fill="#3b5b30"/>
<circle cx="40.1" cy="230.8" r="3.2" fill="#26461a"/>
<circle cx="39.3" cy="229.8" r="1.7" fill="#37542c"/>
<circle cx="26.7" cy="235.1" r="3.4" fill="#26461a"/>
<circle cx="25.9" cy="234.1" r="1.9" fill="#37542c"/>
<circle cx="3.9" cy="208.3" r="3.6" fill="#3a6a2a"/>
<circle cx="3.0" cy="207.2" r="2.0" fill="#49753b"/>
<circle cx="13.4" cy="192.1" r="4.0" fill="#1f3f16"/>
<circle cx="12.4" cy="190.9" r="2.2" fill="#304e28"/>
<circle cx="17.9" cy="173.9" r="2.8" fill="#1f3f16"/>
<circle cx="17.2" cy="173.1" r="1.5" fill="#304e28"/>
<circle cx="9.9" cy="154.0" r="4.8" fill="#1f3f16"/>
<circle cx="8.7" cy="152.6" r="2.7" fill="#304e28"/>
<circle cx="25.5" cy="205.9" r="5.3" fill="#2a4d1e"/>
<circle cx="24.2" cy="204.3" r="2.9" fill="#3b5b30"/>
<circle cx="-4.2" cy="205.6" r="2.6" fill="#2f5a22"/>
<circle cx="-4.8" cy="204.9" r="1.4" fill="#3f6733"/>
<circle cx="46.3" cy="141.7" r="5.0" fill="#2a4d1e"/>
<circle cx="45.1" cy="140.2" r="2.7" fill="#3b5b30"/>
<circle cx="29.2" cy="175.6" r="4.2" fill="#2a4d1e"/>
<circle cx="28.1" cy="174.3" r="2.3" fill="#3b5b30"/>
<circle cx="37.5" cy="170.8" r="3.7" fill="#1f3f16"/>
<circle cx="36.6" cy="169.7" r="2.0" fill="#304e28"/>
<circle cx="8.6" cy="185.2" r="3.3" fill="#44783a"/>
<circle cx="7.8" cy="184.2" r="1.8" fill="#528249"/>
<circle cx="11.4" cy="141.7" r="4.0" fill="#2a4d1e"/>
<circle cx="10.4" cy="140.5" r="2.2" fill="#3b5b30"/>
<circle cx="47.6" cy="237.5" r="3.8" fill="#26461a"/>
<circle cx="46.6" cy="236.4" r="2.1" fill="#37542c"/>
<circle cx="31.7" cy="126.8" r="5.3" fill="#5aa83a"/>
<circle cx="30.4" cy="125.2" r="2.9" fill="#7bb961"/>
<circle cx="-0.0" cy="131.4" r="5.2" fill="#4a9a32"/>
<circle cx="-1.3" cy="129.8" r="2.9" fill="#6eae5b"/>
<circle cx="30.3" cy="129.2" r="3.4" fill="#3a8a2a"/>
<circle cx="29.4" cy="128.2" r="1.9" fill="#61a154"/>
<circle cx="10.8" cy="129.2" r="4.2" fill="#5aa83a"/>
<circle cx="9.7" cy="128.0" r="2.3" fill="#7bb961"/>
<circle cx="13.5" cy="124.3" r="5.4" fill="#5aa83a"/>
<circle cx="12.2" cy="122.7" r="3.0" fill="#7bb961"/>
<circle cx="22.9" cy="116.8" r="3.3" fill="#3a8a2a"/>
<circle cx="22.1" cy="115.8" r="1.8" fill="#61a154"/>
<circle cx="30.3" cy="132.9" r="5.3" fill="#3a8a2a"/>
<circle cx="29.0" cy="131.4" r="2.9" fill="#61a154"/>
<circle cx="26.8" cy="123.0" r="5.4" fill="#3a8a2a"/>
<circle cx="25.5" cy="121.4" r="3.0" fill="#61a154"/>
<circle cx="14.2" cy="129.2" r="3.3" fill="#3a8a2a"/>
<circle cx="13.3" cy="128.2" r="1.8" fill="#61a154"/>
<circle cx="14.0" cy="131.4" r="4.9" fill="#4a9a32"/>
<circle cx="12.8" cy="129.9" r="2.7" fill="#6eae5b"/>
<circle cx="20.5" cy="117.2" r="3.9" fill="#4a9a32"/>
<circle cx="19.6" cy="116.0" r="2.1" fill="#6eae5b"/>
<circle cx="10.8" cy="120.5" r="3.9" fill="#5aa83a"/>
<circle cx="9.8" cy="119.4" r="2.1" fill="#7bb961"/>
<circle cx="26.2" cy="137.1" r="5.2" fill="#5aa83a"/>
<circle cx="24.9" cy="135.5" r="2.9" fill="#7bb961"/>
<circle cx="-4.8" cy="114.6" r="4.0" fill="#5aa83a"/>
<circle cx="-5.8" cy="113.4" r="2.2" fill="#7bb961"/>
<circle cx="18.2" cy="128.5" r="5.4" fill="#4a9a32"/>
<circle cx="16.8" cy="126.9" r="2.9" fill="#6eae5b"/>
<circle cx="5.4" cy="131.6" r="3.7" fill="#3a8a2a"/>
<circle cx="4.4" cy="130.5" r="2.1" fill="#61a154"/>
<circle cx="2.1" cy="128.6" r="3.7" fill="#3a8a2a"/>
<circle cx="1.1" cy="127.5" r="2.1" fill="#61a154"/>
<circle cx="23.0" cy="126.6" r="4.2" fill="#3a8a2a"/>
<circle cx="22.0" cy="125.3" r="2.3" fill="#61a154"/>
<circle cx="9.6" cy="135.2" r="3.2" fill="#5aa83a"/>
<circle cx="8.8" cy="134.2" r="1.8" fill="#7bb961"/>
<circle cx="8.8" cy="118.1" r="3.0" fill="#5aa83a"/>
<circle cx="8.1" cy="117.2" r="1.7" fill="#7bb961"/>
<circle cx="8.3" cy="123.4" r="5.1" fill="#3a8a2a"/>
<circle cx="7.0" cy="121.9" r="2.8" fill="#61a154"/>
<circle cx="9.6" cy="131.1" r="4.6" fill="#4a9a32"/>
<circle cx="8.4" cy="129.7" r="2.5" fill="#6eae5b"/>
<ellipse cx="30" cy="222" rx="14" ry="3" fill="#bab7a0" opacity="0.6"/><ellipse cx="14" cy="229" rx="8" ry="2.5" fill="#b0ae98" opacity="0.5"/>
<path d="M45 250 Q40 200 60 180 Q80 163 110 166 Q140 170 150 190 Q162 215 160 250Z" fill="#2f6a20"/>
<circle cx="65.9" cy="194.1" r="2.7" fill="#62a840"/>
<circle cx="65.2" cy="193.3" r="1.5" fill="#77b45a"/>
<circle cx="73.0" cy="238.6" r="3.7" fill="#34741f"/>
<circle cx="72.1" cy="237.5" r="2.0" fill="#50873e"/>
<circle cx="119.3" cy="194.7" r="2.9" fill="#34741f"/>
<circle cx="118.6" cy="193.8" r="1.6" fill="#50873e"/>
<circle cx="118.0" cy="203.1" r="3.6" fill="#62a840"/>
<circle cx="117.1" cy="202.1" r="2.0" fill="#77b45a"/>
<circle cx="123.2" cy="184.4" r="4.0" fill="#62a840"/>
<circle cx="122.1" cy="183.2" r="2.2" fill="#77b45a"/>
<circle cx="152.7" cy="195.1" r="5.0" fill="#2e6a1c"/>
<circle cx="151.4" cy="193.6" r="2.8" fill="#4b7e3b"/>
<circle cx="89.4" cy="197.3" r="4.2" fill="#34741f"/>
<circle cx="88.4" cy="196.0" r="2.3" fill="#50873e"/>
<circle cx="93.1" cy="205.3" r="4.0" fill="#34741f"/>
<circle cx="92.1" cy="204.1" r="2.2" fill="#50873e"/>
<circle cx="88.8" cy="234.0" r="4.6" fill="#58a038"/>
<circle cx="87.7" cy="232.6" r="2.5" fill="#6fad53"/>
<circle cx="141.7" cy="211.2" r="4.9" fill="#2e6a1c"/>
<circle cx="140.5" cy="209.7" r="2.7" fill="#4b7e3b"/>
<circle cx="105.1" cy="171.0" r="4.7" fill="#468e2e"/>
<circle cx="103.9" cy="169.6" r="2.6" fill="#5f9d4b"/>
<circle cx="82.5" cy="189.8" r="5.0" fill="#34741f"/>
<circle cx="81.3" cy="188.3" r="2.7" fill="#50873e"/>
<circle cx="150.1" cy="224.8" r="4.2" fill="#3a7a24"/>
<circle cx="149.1" cy="223.5" r="2.3" fill="#558c42"/>
<circle cx="91.2" cy="204.4" r="3.2" fill="#2e6a1c"/>
<circle cx="90.4" cy="203.4" r="1.8" fill="#4b7e3b"/>
<circle cx="59.2" cy="214.7" r="5.3" fill="#62a840"/>
<circle cx="57.9" cy="213.1" r="2.9" fill="#77b45a"/>
<circle cx="149.1" cy="195.2" r="5.0" fill="#3a7a24"/>
<circle cx="147.8" cy="193.7" r="2.8" fill="#558c42"/>
<circle cx="73.8" cy="199.8" r="5.0" fill="#34741f"/>
<circle cx="72.6" cy="198.3" r="2.7" fill="#50873e"/>
<circle cx="91.2" cy="200.0" r="2.4" fill="#34741f"/>
<circle cx="90.6" cy="199.2" r="1.3" fill="#50873e"/>
<circle cx="72.1" cy="229.9" r="4.0" fill="#468e2e"/>
<circle cx="71.1" cy="228.7" r="2.2" fill="#5f9d4b"/>
<circle cx="97.3" cy="231.2" r="3.9" fill="#58a038"/>
<circle cx="96.3" cy="230.0" r="2.1" fill="#6fad53"/>
<circle cx="60.4" cy="193.8" r="3.5" fill="#468e2e"/>
<circle cx="59.5" cy="192.7" r="2.0" fill="#5f9d4b"/>
<circle cx="49.1" cy="205.0" r="3.0" fill="#62a840"/>
<circle cx="48.3" cy="204.1" r="1.7" fill="#77b45a"/>
<circle cx="146.7" cy="228.7" r="3.4" fill="#2e6a1c"/>
<circle cx="145.9" cy="227.7" r="1.9" fill="#4b7e3b"/>
<circle cx="111.9" cy="211.3" r="4.9" fill="#62a840"/>
<circle cx="110.7" cy="209.9" r="2.7" fill="#77b45a"/>
<circle cx="84.0" cy="170.5" r="5.3" fill="#2e6a1c"/>
<circle cx="82.6" cy="168.9" r="2.9" fill="#4b7e3b"/>
<circle cx="86.1" cy="234.5" r="2.4" fill="#34741f"/>
<circle cx="85.5" cy="233.8" r="1.3" fill="#50873e"/>
<circle cx="54.6" cy="190.9" r="3.8" fill="#58a038"/>
<circle cx="53.7" cy="189.8" r="2.1" fill="#6fad53"/>
<circle cx="54.9" cy="192.5" r="4.2" fill="#468e2e"/>
<circle cx="53.9" cy="191.3" r="2.3" fill="#5f9d4b"/>
<circle cx="79.8" cy="173.8" r="3.7" fill="#2e6a1c"/>
<circle cx="78.9" cy="172.7" r="2.0" fill="#4b7e3b"/>
<circle cx="73.1" cy="217.8" r="3.8" fill="#34741f"/>
<circle cx="72.2" cy="216.7" r="2.1" fill="#50873e"/>
<circle cx="98.3" cy="191.7" r="5.4" fill="#3a7a24"/>
<circle cx="96.9" cy="190.1" r="3.0" fill="#558c42"/>
<circle cx="127.4" cy="189.6" r="2.9" fill="#468e2e"/>
<circle cx="126.7" cy="188.7" r="1.6" fill="#5f9d4b"/>
<circle cx="68.1" cy="195.3" r="3.6" fill="#468e2e"/>
<circle cx="67.2" cy="194.3" r="2.0" fill="#5f9d4b"/>
<circle cx="135.1" cy="235.8" r="3.3" fill="#34741f"/>
<circle cx="134.3" cy="234.8" r="1.8" fill="#50873e"/>
<circle cx="78.8" cy="231.2" r="5.0" fill="#3a7a24"/>
<circle cx="77.5" cy="229.7" r="2.8" fill="#558c42"/>
<circle cx="124.5" cy="188.8" r="3.2" fill="#468e2e"/>
<circle cx="123.7" cy="187.9" r="1.8" fill="#5f9d4b"/>
<circle cx="56.7" cy="217.1" r="4.0" fill="#468e2e"/>
<circle cx="55.7" cy="215.9" r="2.2" fill="#5f9d4b"/>
<circle cx="66.3" cy="215.9" r="4.4" fill="#58a038"/>
<circle cx="65.2" cy="214.6" r="2.4" fill="#6fad53"/>
<circle cx="80.7" cy="193.0" r="3.7" fill="#34741f"/>
<circle cx="79.8" cy="191.9" r="2.0" fill="#50873e"/>
<circle cx="48.4" cy="198.3" r="2.4" fill="#58a038"/>
<circle cx="47.8" cy="197.6" r="1.3" fill="#6fad53"/>
<circle cx="97.4" cy="226.0" r="4.1" fill="#2e6a1c"/>
<circle cx="96.4" cy="224.7" r="2.3" fill="#4b7e3b"/>
<circle cx="100.3" cy="179.7" r="3.7" fill="#62a840"/>
<circle cx="99.4" cy="178.6" r="2.1" fill="#77b45a"/>
<circle cx="130.4" cy="169.5" r="5.0" fill="#62a840"/>
<circle cx="129.2" cy="168.0" r="2.8" fill="#77b45a"/>
<circle cx="51.2" cy="215.8" r="4.7" fill="#34741f"/>
<circle cx="50.0" cy="214.4" r="2.6" fill="#50873e"/>
<circle cx="93.6" cy="236.6" r="4.2" fill="#62a840"/>
<circle cx="92.6" cy="235.4" r="2.3" fill="#77b45a"/>
<circle cx="156.5" cy="194.2" r="4.7" fill="#2e6a1c"/>
<circle cx="155.4" cy="192.8" r="2.6" fill="#4b7e3b"/>
<circle cx="95.3" cy="237.6" r="2.4" fill="#468e2e"/>
<circle cx="94.7" cy="236.9" r="1.3" fill="#5f9d4b"/>
<circle cx="118.2" cy="179.8" r="2.9" fill="#2e6a1c"/>
<circle cx="117.5" cy="179.0" r="1.6" fill="#4b7e3b"/>
<circle cx="113.6" cy="210.9" r="2.3" fill="#3a7a24"/>
<circle cx="113.0" cy="210.2" r="1.3" fill="#558c42"/>
<circle cx="58.4" cy="193.6" r="3.4" fill="#468e2e"/>
<circle cx="57.5" cy="192.6" r="1.9" fill="#5f9d4b"/>
<circle cx="72.5" cy="242.5" r="2.6" fill="#3a7a24"/>
<circle cx="71.9" cy="241.7" r="1.4" fill="#558c42"/>
<circle cx="94.8" cy="208.3" r="4.5" fill="#58a038"/>
<circle cx="93.7" cy="206.9" r="2.5" fill="#6fad53"/>
<circle cx="115.8" cy="169.6" r="2.3" fill="#58a038"/>
<circle cx="115.2" cy="168.9" r="1.3" fill="#6fad53"/>
<circle cx="105.0" cy="217.4" r="4.5" fill="#2e6a1c"/>
<circle cx="103.9" cy="216.1" r="2.4" fill="#4b7e3b"/>
<circle cx="152.4" cy="200.1" r="4.7" fill="#2e6a1c"/>
<circle cx="151.2" cy="198.6" r="2.6" fill="#4b7e3b"/>
<circle cx="83.1" cy="192.5" r="4.7" fill="#58a038"/>
<circle cx="82.0" cy="191.1" r="2.6" fill="#6fad53"/>
<circle cx="153.6" cy="222.2" r="4.2" fill="#2e6a1c"/>
<circle cx="152.5" cy="220.9" r="2.3" fill="#4b7e3b"/>
<circle cx="114.6" cy="172.7" r="3.0" fill="#62a840"/>
<circle cx="113.8" cy="171.8" r="1.6" fill="#77b45a"/>
<circle cx="142.8" cy="232.8" r="4.3" fill="#2e6a1c"/>
<circle cx="141.7" cy="231.5" r="2.3" fill="#4b7e3b"/>
<circle cx="85.0" cy="214.6" r="2.3" fill="#34741f"/>
<circle cx="84.5" cy="213.9" r="1.3" fill="#50873e"/>
<circle cx="70.5" cy="182.8" r="3.2" fill="#2e6a1c"/>
<circle cx="69.7" cy="181.8" r="1.8" fill="#4b7e3b"/>
<circle cx="67.5" cy="203.7" r="4.2" fill="#62a840"/>
<circle cx="66.4" cy="202.4" r="2.3" fill="#77b45a"/>
<circle cx="133.3" cy="209.6" r="5.0" fill="#62a840"/>
<circle cx="132.1" cy="208.1" r="2.7" fill="#77b45a"/>
<circle cx="106.8" cy="217.3" r="5.2" fill="#3a7a24"/>
<circle cx="105.5" cy="215.7" r="2.8" fill="#558c42"/>
<circle cx="57.4" cy="187.7" r="2.9" fill="#468e2e"/>
<circle cx="56.7" cy="186.8" r="1.6" fill="#5f9d4b"/>
<circle cx="57.3" cy="237.7" r="3.4" fill="#62a840"/>
<circle cx="56.5" cy="236.7" r="1.9" fill="#77b45a"/>
<circle cx="65.1" cy="186.7" r="4.0" fill="#2e6a1c"/>
<circle cx="64.1" cy="185.5" r="2.2" fill="#4b7e3b"/>
<circle cx="119.7" cy="242.1" r="4.7" fill="#34741f"/>
<circle cx="118.5" cy="240.7" r="2.6" fill="#50873e"/>
<circle cx="56.5" cy="196.8" r="2.8" fill="#468e2e"/>
<circle cx="55.9" cy="196.0" r="1.5" fill="#5f9d4b"/>
<circle cx="53.4" cy="209.2" r="4.3" fill="#58a038"/>
<circle cx="52.3" cy="207.9" r="2.4" fill="#6fad53"/>
<circle cx="60.1" cy="240.2" r="3.5" fill="#3a7a24"/>
<circle cx="59.2" cy="239.1" r="1.9" fill="#558c42"/>
<circle cx="57.2" cy="185.6" r="4.7" fill="#3a7a24"/>
<circle cx="56.1" cy="184.2" r="2.6" fill="#558c42"/>
<circle cx="60.1" cy="215.5" r="4.6" fill="#2e6a1c"/>
<circle cx="59.0" cy="214.1" r="2.6" fill="#4b7e3b"/>
<circle cx="110.4" cy="203.0" r="4.0" fill="#58a038"/>
<circle cx="109.4" cy="201.8" r="2.2" fill="#6fad53"/>
<circle cx="150.5" cy="243.2" r="3.0" fill="#62a840"/>
<circle cx="149.8" cy="242.3" r="1.7" fill="#77b45a"/>
<circle cx="70.7" cy="228.7" r="4.5" fill="#468e2e"/>
<circle cx="69.5" cy="227.4" r="2.5" fill="#5f9d4b"/>
<circle cx="60.1" cy="241.6" r="2.5" fill="#58a038"/>
<circle cx="59.5" cy="240.8" r="1.4" fill="#6fad53"/>
<circle cx="121.7" cy="237.3" r="2.5" fill="#2e6a1c"/>
<circle cx="121.1" cy="236.6" r="1.4" fill="#4b7e3b"/>
<circle cx="116.8" cy="196.9" r="5.2" fill="#34741f"/>
<circle cx="115.5" cy="195.4" r="2.9" fill="#50873e"/>
<circle cx="80.7" cy="193.3" r="4.6" fill="#62a840"/>
<circle cx="79.6" cy="191.9" r="2.5" fill="#77b45a"/>
<circle cx="88.5" cy="198.6" r="4.5" fill="#34741f"/>
<circle cx="87.4" cy="197.3" r="2.5" fill="#50873e"/>
<circle cx="100.5" cy="238.1" r="4.9" fill="#3a7a24"/>
<circle cx="99.3" cy="236.6" r="2.7" fill="#558c42"/>
<circle cx="96.7" cy="171.8" r="5.1" fill="#3a7a24"/>
<circle cx="95.5" cy="170.3" r="2.8" fill="#558c42"/>
<circle cx="116.0" cy="206.7" r="2.2" fill="#62a840"/>
<circle cx="115.5" cy="206.1" r="1.2" fill="#77b45a"/>
<circle cx="80.2" cy="170.7" r="4.0" fill="#468e2e"/>
<circle cx="79.2" cy="169.5" r="2.2" fill="#5f9d4b"/>
<circle cx="124.6" cy="193.4" r="2.4" fill="#468e2e"/>
<circle cx="124.0" cy="192.7" r="1.3" fill="#5f9d4b"/>
<circle cx="96.9" cy="173.5" r="5.3" fill="#62a840"/>
<circle cx="95.5" cy="171.9" r="2.9" fill="#77b45a"/>
<circle cx="155.0" cy="215.1" r="5.0" fill="#34741f"/>
<circle cx="153.7" cy="213.7" r="2.7" fill="#50873e"/>
<circle cx="151.4" cy="203.3" r="4.3" fill="#58a038"/>
<circle cx="150.4" cy="202.1" r="2.3" fill="#6fad53"/>
<circle cx="126.0" cy="238.7" r="3.5" fill="#34741f"/>
<circle cx="125.1" cy="237.7" r="1.9" fill="#50873e"/>
<circle cx="113.8" cy="193.0" r="2.4" fill="#34741f"/>
<circle cx="113.2" cy="192.2" r="1.3" fill="#50873e"/>
<circle cx="75.3" cy="192.8" r="5.2" fill="#2e6a1c"/>
<circle cx="74.0" cy="191.2" r="2.9" fill="#4b7e3b"/>
<circle cx="121.9" cy="221.8" r="2.6" fill="#2e6a1c"/>
<circle cx="121.3" cy="221.1" r="1.4" fill="#4b7e3b"/>
<circle cx="86.4" cy="214.1" r="3.8" fill="#62a840"/>
<circle cx="85.4" cy="213.0" r="2.1" fill="#77b45a"/>
<circle cx="86.2" cy="180.9" r="5.0" fill="#58a038"/>
<circle cx="85.0" cy="179.4" r="2.8" fill="#6fad53"/>
<circle cx="96.7" cy="183.9" r="5.3" fill="#34741f"/>
<circle cx="95.4" cy="182.3" r="2.9" fill="#50873e"/>
<circle cx="88.0" cy="228.2" r="2.7" fill="#3a7a24"/>
<circle cx="87.3" cy="227.4" r="1.5" fill="#558c42"/>
<circle cx="51.9" cy="216.3" r="3.8" fill="#2e6a1c"/>
<circle cx="50.9" cy="215.1" r="2.1" fill="#4b7e3b"/>
<circle cx="134.8" cy="188.6" r="4.2" fill="#3a7a24"/>
<circle cx="133.7" cy="187.4" r="2.3" fill="#558c42"/>
<circle cx="89.9" cy="216.0" r="4.5" fill="#3a7a24"/>
<circle cx="88.7" cy="214.6" r="2.5" fill="#558c42"/>
<circle cx="79.9" cy="203.9" r="3.3" fill="#58a038"/>
<circle cx="79.1" cy="202.9" r="1.8" fill="#6fad53"/>
<circle cx="146.9" cy="189.7" r="3.7" fill="#58a038"/>
<circle cx="146.0" cy="188.6" r="2.0" fill="#6fad53"/>
<circle cx="76.7" cy="243.5" r="3.4" fill="#2e6a1c"/>
<circle cx="75.9" cy="242.5" r="1.9" fill="#4b7e3b"/>
<circle cx="150.4" cy="193.0" r="2.3" fill="#3a7a24"/>
<circle cx="149.8" cy="192.3" r="1.3" fill="#558c42"/>
<circle cx="130.6" cy="240.7" r="2.8" fill="#468e2e"/>
<circle cx="129.9" cy="239.9" r="1.5" fill="#5f9d4b"/>
<circle cx="66.9" cy="212.2" r="2.3" fill="#62a840"/>
<circle cx="66.3" cy="211.5" r="1.2" fill="#77b45a"/>
<circle cx="126.5" cy="179.3" r="4.5" fill="#2e6a1c"/>
<circle cx="125.4" cy="177.9" r="2.5" fill="#4b7e3b"/>
<circle cx="90.5" cy="214.5" r="5.0" fill="#58a038"/>
<circle cx="89.2" cy="213.0" r="2.7" fill="#6fad53"/>
<circle cx="141.7" cy="191.8" r="2.7" fill="#2e6a1c"/>
<circle cx="141.1" cy="191.0" r="1.5" fill="#4b7e3b"/>
<circle cx="95.3" cy="231.6" r="3.5" fill="#58a038"/>
<circle cx="94.4" cy="230.6" r="1.9" fill="#6fad53"/>
<circle cx="150.5" cy="224.8" r="4.4" fill="#2e6a1c"/>
<circle cx="149.4" cy="223.5" r="2.4" fill="#4b7e3b"/>
<circle cx="133.9" cy="226.7" r="4.6" fill="#2e6a1c"/>
<circle cx="132.7" cy="225.3" r="2.5" fill="#4b7e3b"/>
<circle cx="91.3" cy="172.4" r="4.9" fill="#58a038"/>
<circle cx="90.0" cy="170.9" r="2.7" fill="#6fad53"/>
<circle cx="141.4" cy="242.1" r="3.8" fill="#58a038"/>
<circle cx="140.4" cy="241.0" r="2.1" fill="#6fad53"/>
<circle cx="62.0" cy="180.8" r="5.4" fill="#3a7a24"/>
<circle cx="60.7" cy="179.2" r="3.0" fill="#558c42"/>
<circle cx="156.5" cy="238.3" r="2.4" fill="#58a038"/>
<circle cx="155.9" cy="237.6" r="1.3" fill="#6fad53"/>
<circle cx="54.2" cy="214.4" r="4.5" fill="#3a7a24"/>
<circle cx="53.1" cy="213.1" r="2.5" fill="#558c42"/>
<circle cx="94.9" cy="228.5" r="5.0" fill="#2e6a1c"/>
<circle cx="93.6" cy="227.0" r="2.8" fill="#4b7e3b"/>
<circle cx="73.6" cy="186.8" r="2.5" fill="#3a7a24"/>
<circle cx="73.0" cy="186.0" r="1.4" fill="#558c42"/>
<circle cx="93.1" cy="207.0" r="2.4" fill="#2e6a1c"/>
<circle cx="92.5" cy="206.3" r="1.3" fill="#4b7e3b"/>
<circle cx="57.9" cy="209.8" r="2.7" fill="#3a7a24"/>
<circle cx="57.2" cy="209.0" r="1.5" fill="#558c42"/>
<circle cx="57.2" cy="206.4" r="3.7" fill="#468e2e"/>
<circle cx="56.2" cy="205.3" r="2.0" fill="#5f9d4b"/>
<circle cx="116.7" cy="211.2" r="4.9" fill="#3a7a24"/>
<circle cx="115.5" cy="209.8" r="2.7" fill="#558c42"/>
<circle cx="79.2" cy="232.5" r="4.4" fill="#58a038"/>
<circle cx="78.1" cy="231.2" r="2.4" fill="#6fad53"/>
<circle cx="97.2" cy="242.3" r="4.1" fill="#3a7a24"/>
<circle cx="96.1" cy="241.0" r="2.3" fill="#558c42"/>
<circle cx="118.8" cy="175.9" r="3.0" fill="#468e2e"/>
<circle cx="118.1" cy="175.0" r="1.7" fill="#5f9d4b"/>
<circle cx="54.5" cy="190.5" r="2.8" fill="#58a038"/>
<circle cx="53.8" cy="189.7" r="1.5" fill="#6fad53"/>
<circle cx="115.9" cy="202.5" r="3.9" fill="#62a840"/>
<circle cx="114.9" cy="201.4" r="2.1" fill="#77b45a"/>
<circle cx="63.1" cy="211.4" r="3.1" fill="#34741f"/>
<circle cx="62.3" cy="210.5" r="1.7" fill="#50873e"/>
<circle cx="138.8" cy="205.1" r="4.3" fill="#468e2e"/>
<circle cx="137.7" cy="203.8" r="2.4" fill="#5f9d4b"/>
<circle cx="52.4" cy="202.7" r="5.2" fill="#34741f"/>
<circle cx="51.1" cy="201.2" r="2.9" fill="#50873e"/>
<circle cx="123.6" cy="226.4" r="2.3" fill="#58a038"/>
<circle cx="123.0" cy="225.7" r="1.3" fill="#6fad53"/>
<circle cx="118.3" cy="187.3" r="3.2" fill="#34741f"/>
<circle cx="117.5" cy="186.3" r="1.8" fill="#50873e"/>
<circle cx="154.3" cy="195.3" r="2.6" fill="#3a7a24"/>
<circle cx="153.6" cy="194.6" r="1.4" fill="#558c42"/>
<circle cx="152.8" cy="226.3" r="3.2" fill="#3a7a24"/>
<circle cx="152.0" cy="225.4" r="1.8" fill="#558c42"/>
<circle cx="113.5" cy="220.7" r="3.6" fill="#34741f"/>
<circle cx="112.6" cy="219.6" r="2.0" fill="#50873e"/>
<circle cx="59.0" cy="209.3" r="4.7" fill="#468e2e"/>
<circle cx="57.9" cy="207.8" r="2.6" fill="#5f9d4b"/>
<circle cx="82.2" cy="176.8" r="4.1" fill="#34741f"/>
<circle cx="81.2" cy="175.6" r="2.2" fill="#50873e"/>
<circle cx="127.4" cy="194.3" r="5.3" fill="#62a840"/>
<circle cx="126.1" cy="192.7" r="2.9" fill="#77b45a"/>
<circle cx="110.6" cy="206.4" r="4.7" fill="#34741f"/>
<circle cx="109.5" cy="204.9" r="2.6" fill="#50873e"/>
<circle cx="58.8" cy="213.1" r="4.3" fill="#34741f"/>
<circle cx="57.8" cy="211.9" r="2.3" fill="#50873e"/>
<circle cx="60.4" cy="226.4" r="4.4" fill="#34741f"/>
<circle cx="59.3" cy="225.1" r="2.4" fill="#50873e"/>
<circle cx="129.0" cy="169.0" r="5.3" fill="#34741f"/>
<circle cx="127.7" cy="167.5" r="2.9" fill="#50873e"/>
<circle cx="156.5" cy="208.4" r="3.9" fill="#3a7a24"/>
<circle cx="155.5" cy="207.3" r="2.1" fill="#558c42"/>
<circle cx="63.8" cy="211.9" r="3.7" fill="#2e6a1c"/>
<circle cx="62.8" cy="210.8" r="2.1" fill="#4b7e3b"/>
<circle cx="54.8" cy="188.4" r="4.2" fill="#62a840"/>
<circle cx="53.8" cy="187.1" r="2.3" fill="#77b45a"/>
<circle cx="80.9" cy="222.3" r="3.3" fill="#468e2e"/>
<circle cx="80.0" cy="221.3" r="1.8" fill="#5f9d4b"/>
<circle cx="100.0" cy="213.2" r="3.1" fill="#58a038"/>
<circle cx="99.3" cy="212.3" r="1.7" fill="#6fad53"/>
<circle cx="131.7" cy="197.1" r="3.4" fill="#2e6a1c"/>
<circle cx="130.8" cy="196.1" r="1.9" fill="#4b7e3b"/>
<circle cx="149.4" cy="202.8" r="4.9" fill="#62a840"/>
<circle cx="148.2" cy="201.3" r="2.7" fill="#77b45a"/>
<circle cx="73.4" cy="239.5" r="3.6" fill="#34741f"/>
<circle cx="72.5" cy="238.4" r="2.0" fill="#50873e"/>
<circle cx="79.5" cy="216.1" r="2.3" fill="#2e6a1c"/>
<circle cx="79.0" cy="215.4" r="1.3" fill="#4b7e3b"/>
<circle cx="129.9" cy="220.0" r="2.7" fill="#2e6a1c"/>
<circle cx="129.3" cy="219.1" r="1.5" fill="#4b7e3b"/>
<circle cx="75.0" cy="230.8" r="5.0" fill="#34741f"/>
<circle cx="73.7" cy="229.3" r="2.7" fill="#50873e"/>
<circle cx="102.6" cy="223.1" r="3.7" fill="#34741f"/>
<circle cx="101.7" cy="222.0" r="2.0" fill="#50873e"/>
<circle cx="67.7" cy="192.9" r="4.8" fill="#62a840"/>
<circle cx="66.5" cy="191.4" r="2.7" fill="#77b45a"/>
<circle cx="69.8" cy="231.6" r="3.0" fill="#3a7a24"/>
<circle cx="69.1" cy="230.7" r="1.6" fill="#558c42"/>
<circle cx="144.6" cy="187.5" r="3.4" fill="#3a7a24"/>
<circle cx="143.7" cy="186.5" r="1.9" fill="#558c42"/>
<circle cx="94.3" cy="219.2" r="5.0" fill="#2e6a1c"/>
<circle cx="93.1" cy="217.7" r="2.7" fill="#4b7e3b"/>
<circle cx="63.8" cy="234.1" r="5.4" fill="#468e2e"/>
<circle cx="62.5" cy="232.5" r="3.0" fill="#5f9d4b"/>
<circle cx="50.5" cy="208.9" r="5.3" fill="#62a840"/>
<circle cx="49.2" cy="207.3" r="2.9" fill="#77b45a"/>
<circle cx="110.1" cy="210.3" r="3.4" fill="#2e6a1c"/>
<circle cx="109.2" cy="209.2" r="1.9" fill="#4b7e3b"/>
<circle cx="90.6" cy="179.9" r="4.8" fill="#58a038"/>
<circle cx="89.4" cy="178.4" r="2.6" fill="#6fad53"/>
<circle cx="83.9" cy="219.4" r="4.0" fill="#34741f"/>
<circle cx="82.9" cy="218.2" r="2.2" fill="#50873e"/>
<circle cx="114.7" cy="187.2" r="3.6" fill="#58a038"/>
<circle cx="113.8" cy="186.2" r="2.0" fill="#6fad53"/>
<circle cx="74.1" cy="238.0" r="3.7" fill="#468e2e"/>
<circle cx="73.2" cy="236.9" r="2.0" fill="#5f9d4b"/>
<circle cx="86.7" cy="179.9" r="3.3" fill="#3a7a24"/>
<circle cx="85.9" cy="178.9" r="1.8" fill="#558c42"/>
<circle cx="65.5" cy="189.8" r="3.5" fill="#62a840"/>
<circle cx="64.6" cy="188.7" r="1.9" fill="#77b45a"/>
<circle cx="121.7" cy="229.0" r="5.5" fill="#34741f"/>
<circle cx="120.3" cy="227.4" r="3.0" fill="#50873e"/>
<circle cx="83.3" cy="182.0" r="4.3" fill="#2e6a1c"/>
<circle cx="82.2" cy="180.7" r="2.4" fill="#4b7e3b"/>
<circle cx="97.6" cy="224.1" r="4.3" fill="#3a7a24"/>
<circle cx="96.5" cy="222.8" r="2.4" fill="#558c42"/>
<circle cx="48.3" cy="214.5" r="3.5" fill="#58a038"/>
<circle cx="47.4" cy="213.4" r="1.9" fill="#6fad53"/>
<circle cx="106.4" cy="179.6" r="3.1" fill="#58a038"/>
<circle cx="105.6" cy="178.7" r="1.7" fill="#6fad53"/>
<circle cx="153.3" cy="231.4" r="3.4" fill="#34741f"/>
<circle cx="152.4" cy="230.4" r="1.9" fill="#50873e"/>
<circle cx="69.9" cy="215.7" r="4.7" fill="#58a038"/>
<circle cx="68.7" cy="214.3" r="2.6" fill="#6fad53"/>
<circle cx="119.4" cy="236.8" r="3.1" fill="#62a840"/>
<circle cx="118.6" cy="235.8" r="1.7" fill="#77b45a"/>
<circle cx="147.8" cy="184.5" r="4.9" fill="#58a038"/>
<circle cx="146.6" cy="183.0" r="2.7" fill="#6fad53"/>
<circle cx="67.6" cy="192.0" r="3.1" fill="#34741f"/>
<circle cx="66.8" cy="191.0" r="1.7" fill="#50873e"/>
<circle cx="112.9" cy="178.7" r="3.1" fill="#34741f"/>
<circle cx="112.1" cy="177.8" r="1.7" fill="#50873e"/>
<circle cx="65.7" cy="219.0" r="5.2" fill="#3a7a24"/>
<circle cx="64.4" cy="217.4" r="2.9" fill="#558c42"/>
<circle cx="142.7" cy="217.9" r="5.2" fill="#58a038"/>
<circle cx="141.4" cy="216.4" r="2.9" fill="#6fad53"/>
<circle cx="63.1" cy="241.9" r="3.7" fill="#2e6a1c"/>
<circle cx="62.2" cy="240.8" r="2.0" fill="#4b7e3b"/>
<circle cx="131.6" cy="229.0" r="4.9" fill="#468e2e"/>
<circle cx="130.4" cy="227.5" r="2.7" fill="#5f9d4b"/>
<circle cx="129.9" cy="182.3" r="3.5" fill="#2e6a1c"/>
<circle cx="129.0" cy="181.3" r="1.9" fill="#4b7e3b"/>
<circle cx="125.2" cy="216.7" r="2.6" fill="#62a840"/>
<circle cx="124.5" cy="215.9" r="1.4" fill="#77b45a"/>
<circle cx="122.6" cy="186.5" r="2.9" fill="#34741f"/>
<circle cx="121.9" cy="185.7" r="1.6" fill="#50873e"/>
<circle cx="52.0" cy="194.2" r="4.5" fill="#62a840"/>
<circle cx="50.8" cy="192.8" r="2.5" fill="#77b45a"/>
<circle cx="112.9" cy="228.8" r="4.2" fill="#2e6a1c"/>
<circle cx="111.9" cy="227.5" r="2.3" fill="#4b7e3b"/>
<circle cx="123.0" cy="183.5" r="3.1" fill="#468e2e"/>
<circle cx="122.2" cy="182.6" r="1.7" fill="#5f9d4b"/>
<circle cx="69.1" cy="210.3" r="4.7" fill="#2e6a1c"/>
<circle cx="67.9" cy="208.9" r="2.6" fill="#4b7e3b"/>
<circle cx="88.2" cy="219.9" r="3.8" fill="#62a840"/>
<circle cx="87.3" cy="218.7" r="2.1" fill="#77b45a"/>
<circle cx="100.0" cy="236.7" r="2.7" fill="#58a038"/>
<circle cx="99.4" cy="235.9" r="1.5" fill="#6fad53"/>
<circle cx="84.6" cy="225.8" r="3.9" fill="#468e2e"/>
<circle cx="83.6" cy="224.7" r="2.1" fill="#5f9d4b"/>
<circle cx="108.6" cy="192.6" r="4.3" fill="#62a840"/>
<circle cx="107.5" cy="191.3" r="2.4" fill="#77b45a"/>
<circle cx="140.1" cy="221.2" r="3.5" fill="#3a7a24"/>
<circle cx="139.2" cy="220.1" r="1.9" fill="#558c42"/>
<circle cx="90.5" cy="214.7" r="5.2" fill="#468e2e"/>
<circle cx="89.2" cy="213.2" r="2.9" fill="#5f9d4b"/>
<circle cx="148.7" cy="221.9" r="4.4" fill="#34741f"/>
<circle cx="147.6" cy="220.6" r="2.4" fill="#50873e"/>
<circle cx="60.8" cy="191.3" r="3.8" fill="#34741f"/>
<circle cx="59.9" cy="190.1" r="2.1" fill="#50873e"/>
<circle cx="152.4" cy="210.5" r="3.7" fill="#62a840"/>
<circle cx="151.5" cy="209.4" r="2.0" fill="#77b45a"/>
<circle cx="96.7" cy="205.5" r="3.4" fill="#62a840"/>
<circle cx="95.8" cy="204.5" r="1.9" fill="#77b45a"/>
<circle cx="133.8" cy="208.6" r="3.1" fill="#3a7a24"/>
<circle cx="133.0" cy="207.6" r="1.7" fill="#558c42"/>
<circle cx="99.4" cy="243.6" r="4.7" fill="#468e2e"/>
<circle cx="98.2" cy="242.2" r="2.6" fill="#5f9d4b"/>
<circle cx="137.6" cy="204.2" r="5.5" fill="#2e6a1c"/>
<circle cx="136.2" cy="202.5" r="3.0" fill="#4b7e3b"/>
<circle cx="66.7" cy="235.0" r="3.8" fill="#468e2e"/>
<circle cx="65.7" cy="233.8" r="2.1" fill="#5f9d4b"/>
<circle cx="98.3" cy="238.9" r="3.0" fill="#468e2e"/>
<circle cx="97.5" cy="238.0" r="1.7" fill="#5f9d4b"/>
<circle cx="61.4" cy="207.4" r="4.3" fill="#58a038"/>
<circle cx="60.3" cy="206.1" r="2.4" fill="#6fad53"/>
<circle cx="131.3" cy="220.4" r="3.0" fill="#3a7a24"/>
<circle cx="130.6" cy="219.5" r="1.6" fill="#558c42"/>
<circle cx="97.4" cy="235.7" r="5.3" fill="#34741f"/>
<circle cx="96.1" cy="234.1" r="2.9" fill="#50873e"/>
<circle cx="126.2" cy="179.3" r="3.2" fill="#34741f"/>
<circle cx="125.4" cy="178.4" r="1.7" fill="#50873e"/>
<circle cx="55.4" cy="186.2" r="5.4" fill="#62a840"/>
<circle cx="54.1" cy="184.5" r="3.0" fill="#77b45a"/>
<circle cx="88.3" cy="169.0" r="4.8" fill="#58a038"/>
<circle cx="87.1" cy="167.6" r="2.7" fill="#6fad53"/>
<circle cx="91.0" cy="212.4" r="4.5" fill="#3a7a24"/>
<circle cx="89.9" cy="211.1" r="2.5" fill="#558c42"/>
<circle cx="143.8" cy="200.5" r="3.0" fill="#3a7a24"/>
<circle cx="143.1" cy="199.6" r="1.6" fill="#558c42"/>
<circle cx="105.9" cy="227.3" r="5.2" fill="#58a038"/>
<circle cx="104.6" cy="225.8" r="2.8" fill="#6fad53"/>
<circle cx="136.7" cy="208.3" r="5.2" fill="#468e2e"/>
<circle cx="135.4" cy="206.7" r="2.9" fill="#5f9d4b"/>
<circle cx="100.2" cy="227.5" r="4.8" fill="#468e2e"/>
<circle cx="99.0" cy="226.1" r="2.6" fill="#5f9d4b"/>
<circle cx="119.9" cy="218.6" r="3.1" fill="#3a7a24"/>
<circle cx="119.1" cy="217.6" r="1.7" fill="#558c42"/>
<circle cx="97.4" cy="232.3" r="5.5" fill="#34741f"/>
<circle cx="96.0" cy="230.7" r="3.0" fill="#50873e"/>
<circle cx="62.8" cy="193.2" r="4.5" fill="#3a7a24"/>
<circle cx="61.7" cy="191.9" r="2.5" fill="#558c42"/>
<circle cx="59.5" cy="217.6" r="4.3" fill="#468e2e"/>
<circle cx="58.4" cy="216.3" r="2.4" fill="#5f9d4b"/>
<circle cx="78.5" cy="223.8" r="4.2" fill="#62a840"/>
<circle cx="77.5" cy="222.5" r="2.3" fill="#77b45a"/>
<circle cx="69.3" cy="195.6" r="2.9" fill="#2e6a1c"/>
<circle cx="68.6" cy="194.8" r="1.6" fill="#4b7e3b"/>
<circle cx="105.9" cy="200.0" r="3.5" fill="#62a840"/>
<circle cx="105.0" cy="198.9" r="2.0" fill="#77b45a"/>
<circle cx="52.5" cy="217.7" r="3.7" fill="#62a840"/>
<circle cx="51.6" cy="216.6" r="2.0" fill="#77b45a"/>
<circle cx="64.3" cy="239.4" r="4.1" fill="#468e2e"/>
<circle cx="63.2" cy="238.2" r="2.3" fill="#5f9d4b"/>
<circle cx="151.5" cy="234.0" r="2.6" fill="#58a038"/>
<circle cx="150.8" cy="233.2" r="1.4" fill="#6fad53"/>
<circle cx="138.0" cy="214.0" r="3.5" fill="#34741f"/>
<circle cx="137.1" cy="212.9" r="1.9" fill="#50873e"/>
<circle cx="144.1" cy="243.9" r="3.0" fill="#58a038"/>
<circle cx="143.4" cy="243.0" r="1.6" fill="#6fad53"/>
<circle cx="115.1" cy="214.7" r="2.7" fill="#58a038"/>
<circle cx="114.4" cy="213.9" r="1.5" fill="#6fad53"/>
<circle cx="136.2" cy="239.6" r="2.9" fill="#62a840"/>
<circle cx="135.5" cy="238.7" r="1.6" fill="#77b45a"/>
<circle cx="61.2" cy="228.3" r="5.1" fill="#3a7a24"/>
<circle cx="59.9" cy="226.8" r="2.8" fill="#558c42"/>
<circle cx="80.3" cy="201.0" r="3.6" fill="#34741f"/>
<circle cx="79.4" cy="199.9" r="2.0" fill="#50873e"/>
<circle cx="116.8" cy="186.3" r="5.3" fill="#468e2e"/>
<circle cx="115.5" cy="184.8" r="2.9" fill="#5f9d4b"/>
<circle cx="104.9" cy="188.3" r="3.8" fill="#62a840"/>
<circle cx="104.0" cy="187.2" r="2.1" fill="#77b45a"/>
<circle cx="82.4" cy="168.6" r="4.2" fill="#34741f"/>
<circle cx="81.4" cy="167.3" r="2.3" fill="#50873e"/>
<circle cx="154.8" cy="205.6" r="3.0" fill="#3a7a24"/>
<circle cx="154.1" cy="204.7" r="1.6" fill="#558c42"/>
<circle cx="63.7" cy="185.2" r="4.2" fill="#34741f"/>
<circle cx="62.7" cy="183.9" r="2.3" fill="#50873e"/>
</g>
<rect x="0" y="40" width="435" height="205" filter="url(#nz)" opacity="0.22"/>
<g filter="url(#bl2)">
<rect x="17" y="100" width="13" height="6" fill="#e6e8e8"/>
<path d="M16 100.5 L22 95 L33 95 L35 100.5Z" fill="#50555a"/>
<rect x="30" y="100" width="5" height="5" fill="#c8cccc"/>
<rect x="57" y="97" width="16" height="6" fill="#d4553f"/>
<rect x="58" y="103" width="14" height="2" fill="#e0d8d0"/>
<rect x="89" y="96" width="17" height="6" fill="#888a8c"/>
<rect x="146" y="97" width="15" height="6" fill="#d27a48"/>
<rect x="147" y="103" width="13" height="2" fill="#e8e0d8"/>
<rect x="176" y="96" width="15" height="7" fill="#c77a66"/>
<rect x="178" y="101" width="11" height="3" fill="#eeeeee"/>
<rect x="205" y="99" width="11" height="4" fill="#cf5440"/>
<rect x="-2" y="95" width="6" height="10" fill="#c86050"/>
<rect x="4" y="99" width="12" height="5" fill="#8a9898"/>
</g>
</g></svg>
<div class="a" style="left:166.2px;top:135.6px;width:9.3px;height:9.3px;background:linear-gradient(#ff3b3b,#d00000);border:0.5px solid #b00"></div>
<div class="a" style="left:384.2px;top:135.6px;width:9.3px;height:9.3px;background:linear-gradient(#ff3b3b,#d00000);border:0.5px solid #b00"></div>
<div class="a" style="left:601.4px;top:135.6px;width:9.3px;height:9.3px;background:linear-gradient(#ff3b3b,#d00000);border:0.5px solid #b00"></div>
<div class="a" style="left:166.2px;top:258.0px;width:9.3px;height:9.3px;background:linear-gradient(#ff3b3b,#d00000);border:0.5px solid #b00"></div>
<div class="a" style="left:166.2px;top:380.8px;width:9.3px;height:9.3px;background:linear-gradient(#ff3b3b,#d00000);border:0.5px solid #b00"></div>
<div class="a" style="left:384.2px;top:380.8px;width:9.3px;height:9.3px;background:linear-gradient(#ff3b3b,#d00000);border:0.5px solid #b00"></div>

<!-- anchor -->
<div class="a" style="left:171px;top:392px;width:22px;height:22px;background:#ededed"></div>
<svg class="a" style="left:171px;top:392px" width="22" height="22" viewBox="0 0 22 22"><g fill="none" stroke="#9a9a9a" stroke-width="1.3"><circle cx="11" cy="6" r="1.8"/><path d="M11 8v11M8 10.5h6M4.5 13.5q1 5 6.5 5.5q5.5-.5 6.5-5.5"/></g></svg>

<!-- margin corner mark -->
<div class="a" style="left:161px;top:518px;width:11px;height:1px;background:#b8b8b8"></div>
<div class="a" style="left:170.6px;top:518px;width:1.2px;height:10px;background:#bcbcbc"></div>
<div class="a" style="left:171px;top:525px;width:440px;height:1px;background:#cfcfcf"></div>

<!-- scrollbar -->
<div class="a" style="left:945.8px;top:53px;width:14.2px;height:550px;background:#f8f8f8"></div>
<div class="a" style="left:949px;top:89px;width:8px;height:56px;border-radius:4px;background:#c2c2c2"></div>

<!-- bottom toolbar -->
<div class="a" style="left:0;top:603px;width:960px;height:43px;background:#f4f4f4;border-top:1px solid #ebebeb"></div>
<div class="a" style="left:0;top:645px;width:115px;height:1px;background:#e9e9e9"></div>
<svg class="a" style="left:0;top:600px" width="400" height="46" viewBox="0 600 400 46">
<defs>
<g id="ddoc"><path d="M0.5 0.5h10l5 5v15h-15z" fill="#dcdcdc" stroke="#cccccc" stroke-width="1"/><path d="M3 4h5M3 7.5h4M9 7.5h3M3 11h9M3 14.5h4M3 18h6" stroke="#c2c2c2" stroke-width="1.2"/></g>
<g id="dx"><path d="M0 0l8 8M8 0l-8 8" stroke="#b3b3b3" stroke-width="2.6"/></g>
<g id="dchk"><path d="M0 5l4.5 5l8.5-10" fill="none" stroke="#bdbdbd" stroke-width="2.8"/></g>
<g id="darr"><path d="M0 3.5h7v-3.5l5.5 5l-5.5 5v-3.5h-7z" fill="#b8b8b8"/></g>
</defs>
<!-- icon 1 partial -->
<use href="#ddoc" x="-9" y="610.3"/>
<g transform="translate(-5 616)"><use href="#dchk"/></g>
<!-- icon 2 doc + x -->
<use href="#ddoc" x="22.5" y="610.3"/>
<g transform="translate(32.5 622.5)"><use href="#dx"/></g>
<!-- icon 3 doc + double check -->
<use href="#ddoc" x="54.4" y="610.3"/>
<g transform="translate(59 612)"><use href="#dchk"/></g>
<g transform="translate(59 619)"><use href="#dchk"/></g>
<!-- icon 4 double x -->
<use href="#ddoc" x="86.3" y="610.3"/>
<g transform="translate(83.8 622.5)"><use href="#dx"/></g>
<g transform="translate(95.5 622.5)"><use href="#dx"/></g>
<!-- icon 5 check + arrow -->
<use href="#ddoc" x="117.5" y="610.3"/>
<g transform="translate(115.5 614)"><use href="#dchk"/></g>
<g transform="translate(125.5 621.5)"><use href="#darr"/></g>
<!-- icon 6 x + arrow -->
<use href="#ddoc" x="149" y="610.3"/>
<g transform="translate(146.5 615)"><use href="#dx"/></g>
<g transform="translate(157 621.5)"><use href="#darr"/></g>
<!-- icon 7 enabled doc with device -->
<path d="M180.5 610.5h10l5.5 5.5v15h-15.5z" fill="#fff" stroke="#7c7c7c" stroke-width="1.1"/>
<path d="M190.5 610.5v5.5h5.5" fill="none" stroke="#7c7c7c" stroke-width="1"/>
<path d="M183 614.5h4M183 618h3M183 624.5h3" stroke="#8a8a8a" stroke-width="1"/>
<path d="M188 617.8h5M183 621h8M183 628h2" stroke="#f5a623" stroke-width="1.5"/>
<rect x="189" y="619.5" width="8.5" height="11.8" rx="1.2" fill="#fff" stroke="#6c6c6c" stroke-width="1.3"/>
<rect x="191.2" y="622" width="4.2" height="6.5" fill="none" stroke="#9a9a9a" stroke-width="0.8"/>
<rect x="207" y="613" width="1.2" height="16" fill="#fdfdfd"/>
<!-- comment bubble -->
<path d="M220.5 610.8h16.5q2 0 2 2v11q0 2-2 2h-9.5l-5 4.8v-4.8h-2q-2 0-2-2v-11q0-2 2-2z" fill="#fff" stroke="#8c8c8c" stroke-width="1.3"/>
<!-- disabled doc w bubble -->
<path d="M252 610.5h10l5 5v15h-15z" fill="#dcdcdc" stroke="#cccccc" stroke-width="1"/>
<path d="M254.5 614h5M254.5 617.5h4M254.5 621h7M254.5 624.5h4M254.5 628h4" stroke="#c6c6c6" stroke-width="1.2"/>
<path d="M260.5 620.5h11v8.5h-6l-3 2.5v-2.5h-2z" fill="#d6d6d6" stroke="#cdcdcd" stroke-width="1"/>
<rect x="278" y="613" width="1.2" height="16" fill="#fdfdfd"/>
<!-- lock doc -->
<path d="M291.5 610.5h10l5.5 5.5v15h-15.5z" fill="#fff" stroke="#7c7c7c" stroke-width="1.1"/>
<path d="M301.5 610.5v5.5h5.5" fill="none" stroke="#7c7c7c" stroke-width="1"/>
<path d="M294 614.5h4M294 617.8h3M294 624.5h3" stroke="#8a8a8a" stroke-width="1"/>
<path d="M299 617.8h5M294 621h6M294 628h2" stroke="#f5a623" stroke-width="1.5"/>
<path d="M303.5 626v-2.5q0-2.5 2.3-2.5q2.3 0 2.3 2.5v2.5" fill="none" stroke="#6a5a2a" stroke-width="1.3"/>
<rect x="300.8" y="625.5" width="10" height="6" rx="0.8" fill="#f2c200" stroke="#b08a00" stroke-width="0.8"/>
<path d="M301.5 628.3h8.5" stroke="#c89b00" stroke-width="1"/>
<!-- compare -->
<rect x="320.5" y="610.6" width="10.2" height="20" rx="1" fill="#fff" stroke="#8c8c8c" stroke-width="1.2"/>
<rect x="331.5" y="610.6" width="10.2" height="20" rx="1" fill="#fff" stroke="#8c8c8c" stroke-width="1.2"/>
<path d="M320 616.3h5.5" stroke="#1a6ef2" stroke-width="1.8"/>
<path d="M324.5 612.8l5 3.5l-5 3.5z" fill="#1a6ef2"/>
<path d="M342 616.3h-5.5" stroke="#1a6ef2" stroke-width="1.8"/>
<path d="M337.5 612.8l-5 3.5l5 3.5z" fill="#1a6ef2"/>
<path d="M322.5 625h6.5M333.5 625h6.5M333.5 628h6.5" stroke="#4a8cf0" stroke-width="1.2"/>
<path d="M322.5 628h6.5" stroke="#a8a8a8" stroke-width="1.2"/>
<!-- merge -->
<rect x="352" y="610.6" width="8.5" height="20" rx="1.2" fill="#fff" stroke="#8c8c8c" stroke-width="1.2"/>
<path d="M354 613h4.5M354 619h4.5M354 625h4.5" stroke="#a8a8a8" stroke-width="1.2"/>
<path d="M354 616h4.5M354 622h4.5M354 628h4.5" stroke="#4a8cf0" stroke-width="1.2"/>
<rect x="362" y="608.5" width="10.5" height="11.7" fill="#fff" stroke="#8c8c8c" stroke-width="1.2"/>
<rect x="362" y="620.2" width="10.5" height="11.8" fill="#fff" stroke="#8c8c8c" stroke-width="1.2"/>
<path d="M372.5 615h-5M372.5 625.8h-5" stroke="#1a6ef2" stroke-width="1.8"/>
<path d="M368 611.5l-5 3.5l5 3.5zM368 622.3l-5 3.5l5 3.5z" fill="#1a6ef2"/>
</svg>


<!-- dialog -->
<div class="a" style="left:395.5px;top:159px;width:540px;height:421px;border-radius:10px;background:#e9e9e9;box-shadow:0 0 0 0.5px rgba(0,0,0,0.25),0 14px 40px rgba(0,0,0,0.36),0 2px 10px rgba(0,0,0,0.12);overflow:hidden">
  <div class="a" style="left:0;top:0;width:540px;height:28.5px;background:#f6f1f4;border-bottom:1px solid #d6d3d6"></div>
  <div class="a" style="left:7.85px;top:7.85px;width:12.5px;height:12.5px;border-radius:50%;background:#fe5f57;box-shadow:inset 0 0 0 0.5px rgba(0,0,0,0.12)"></div>
  <div class="a" style="left:28.25px;top:7.85px;width:12.5px;height:12.5px;border-radius:50%;background:#d9d6d9;box-shadow:inset 0 0 0 0.5px rgba(0,0,0,0.12)"></div>
  <div class="a" style="left:48.65px;top:7.85px;width:12.5px;height:12.5px;border-radius:50%;background:#28c840;box-shadow:inset 0 0 0 0.5px rgba(0,0,0,0.12)"></div>
  <div class="a" style="left:0;top:6px;width:540px;text-align:center;font-weight:bold;font-size:13.5px;line-height:16px;color:#3e3e3e;padding-left:0">Wstaw podpis</div>
</div>
<div class="a" style="left:396px;top:159px;width:540px;height:421px">
  <div class="lbl" style="left:8px;top:36.7px;font-weight:bold;font-size:12px">Podpis</div>
  <div class="a" style="left:23px;top:60px;width:505px;height:24.6px;background:#fff;border:2px solid #86b7f0;border-radius:2px"></div>
  <div class="fv" style="left:28.5px;top:65.6px;font-size:12.6px">Gdańsk Brętowo</div>
  <div class="lbl" style="left:8px;top:100px;font-weight:bold;font-size:12px">Właściwości</div>

  <div class="lbl" style="left:20px;top:128px">Kategoria:</div>
  <div class="fld combo" style="left:154px;top:124.4px;width:372px"><div class="fv">Figura</div><div class="bb"><svg width="16" height="16" viewBox="0 0 16 16"><path d="M4.5 6.5L8 10l3.5-3.5" fill="none" stroke="#fff" stroke-width="1.8" stroke-linecap="round" stroke-linejoin="round"/></svg></div></div>

  <div class="lbl" style="left:20px;top:162px">Numeracja:</div>
  <div class="fld combo" style="left:154px;top:158.4px;width:372px"><div class="fv">Arabskie (1 2 3)</div><div class="bb"><svg width="16" height="16" viewBox="0 0 16 16"><path d="M5 6.5L8 3.8l3 2.7M5 9.5L8 12.2l3-2.7" fill="none" stroke="#fff" stroke-width="1.6" stroke-linecap="round" stroke-linejoin="round"/></svg></div></div>

  <div class="lbl" style="left:20px;top:198px;color:#8a8a8a">Separator numeracji:</div>
  <div class="fld txt" style="left:154px;top:194.9px;width:372px"><div class="fv" style="color:#888;top:3px">.</div></div>

  <div class="lbl" style="left:20px;top:234px">Separator:</div>
  <div class="fld txt" style="left:154px;top:230.9px;width:372px"><div class="fv" style="top:3px">:</div></div>

  <div class="lbl" style="left:20px;top:270px">Pozycja:</div>
  <div class="fld combo" style="left:154px;top:266.4px;width:372px"><div class="fv">Poniżej</div><div class="bb"><svg width="16" height="16" viewBox="0 0 16 16"><path d="M5 6.5L8 3.8l3 2.7M5 9.5L8 12.2l3-2.7" fill="none" stroke="#fff" stroke-width="1.6" stroke-linecap="round" stroke-linejoin="round"/></svg></div></div>

  <div class="lbl" style="left:8px;top:304px;font-weight:bold;font-size:12px">Podgląd</div>
  <div class="a" style="left:20px;top:324px;width:511px;height:38.5px;background:#fff;border-bottom:1px solid #d6d6d6"></div>
  <div class="a" style="left:25px;top:330px;font-size:14.6px;line-height:18px;color:#111;white-space:pre">Figura 1: Gdańsk Brętowo</div>
</div>
<div class="btn" style="left:412px">Pomoc</div>
<div class="btn" style="left:516px">Autopodpis...</div>
<div class="btn" style="left:620px">Opcje...</div>
<div class="btn" style="left:724px">Anuluj</div>
<div class="btn" style="left:828px;background:linear-gradient(#2a8bff,#0f72f0);color:#fff;box-shadow:none">OK</div>

</body></html>
